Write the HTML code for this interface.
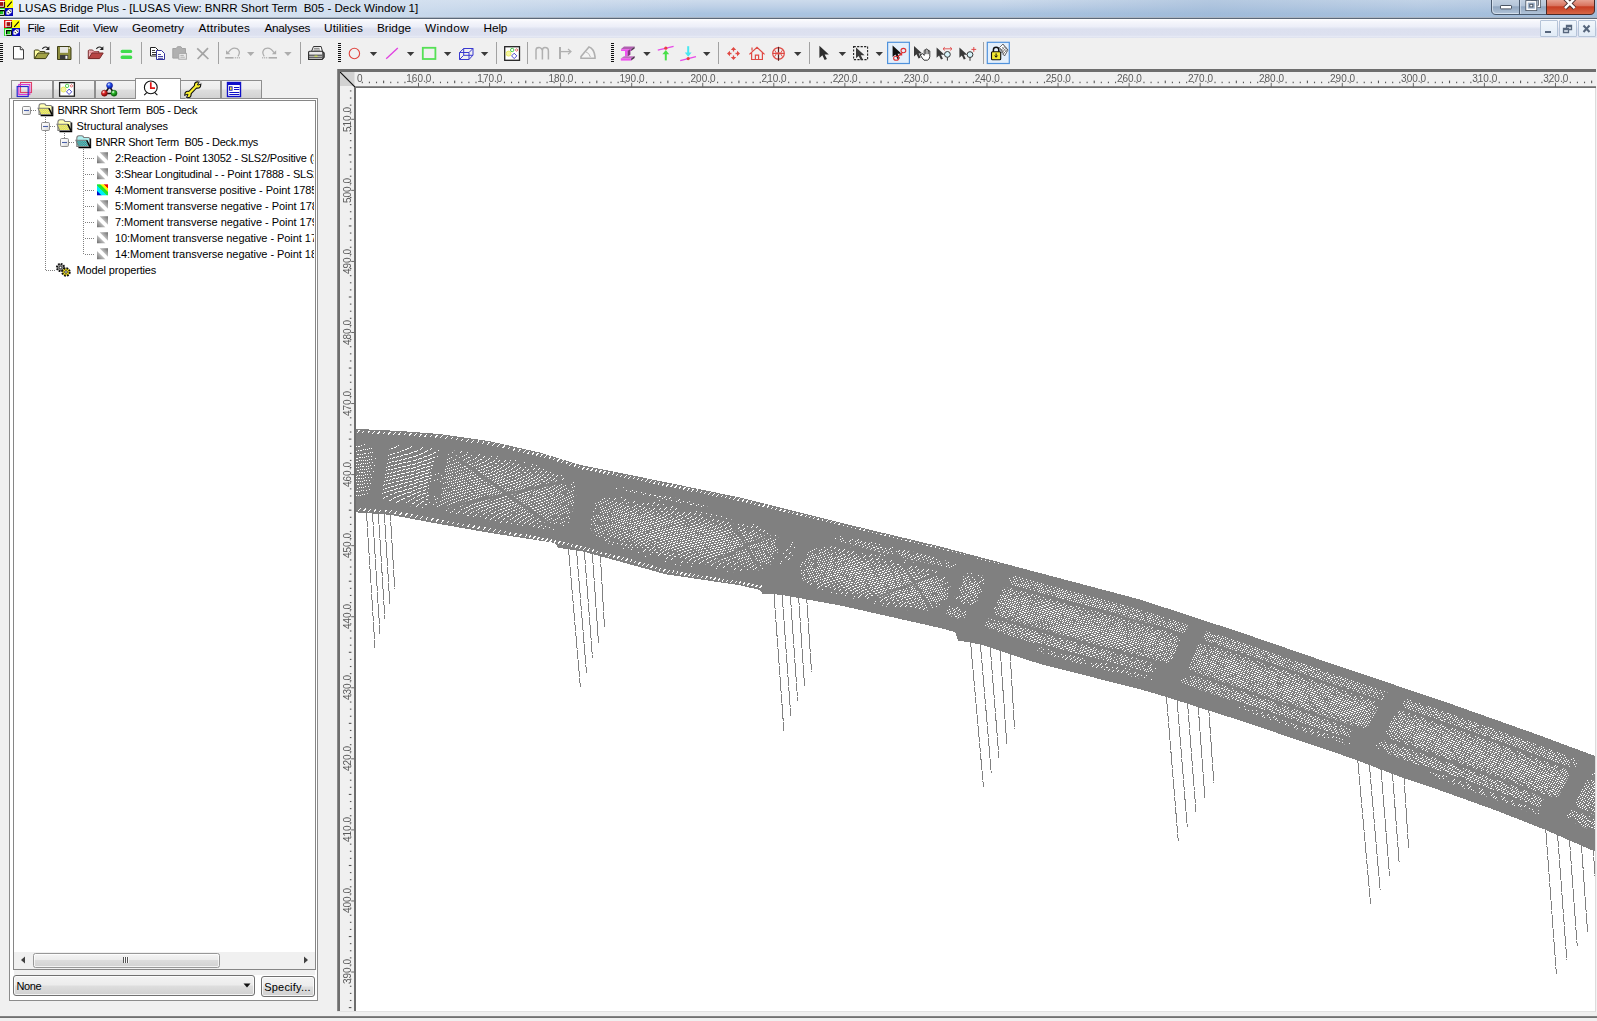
<!DOCTYPE html>
<html><head><meta charset="utf-8"><title>LUSAS Bridge Plus</title>
<style>
html,body{margin:0;padding:0}
body{width:1597px;height:1021px;position:relative;overflow:hidden;background:#f0f0f0;font-family:"Liberation Sans",sans-serif}
.b{position:absolute;display:block}
.t{position:absolute;white-space:pre;display:block}
</style></head><body>
<!-- chrome -->
<div class="b" style="left:0px;top:0px;width:1597px;height:18px;background:linear-gradient(to bottom,#cddbec 0%,#bfd1e7 35%,#aac4e0 75%,#a9c2dd 100%)"></div>
<div class="b" style="left:0px;top:0px;width:700px;height:18px;background:linear-gradient(to right,rgba(236,241,248,.95) 0%,rgba(228,236,246,.9) 25%,rgba(215,227,241,.75) 55%,rgba(200,216,235,0) 100%)"></div>
<div class="b" style="left:1000px;top:0px;width:597px;height:18px;background:linear-gradient(to right,rgba(150,178,210,0) 0%,rgba(150,178,210,.45) 35%,rgba(160,186,215,.25) 70%,rgba(150,178,210,.4) 100%)"></div>
<div class="b" style="left:0px;top:17px;width:1597px;height:1px;background:#aab6c4"></div>
<div class="b" style="left:0px;top:18px;width:1597px;height:1px;background:#5b6878"></div>
<svg class="b" style="left:-3px;top:0px;" width="16" height="16" viewBox="0 0 16 16">
<rect x="0" y="0" width="8" height="8" fill="#e21212"/>
<rect x="8" y="0" width="8" height="8" fill="#ffff10"/>
<rect x="0" y="8" width="8" height="8" fill="#30e030"/>
<rect x="8" y="8" width="8" height="8" fill="#0808b8"/>
<rect x="2" y="1.5" width="5" height="5" fill="#a01010" stroke="#fff" stroke-width="1.2"/>
<path d="M7.6 2v5.2H2.5" stroke="#200" stroke-width="1" fill="none"/>
<path d="M10.2 6.8L14.8 1.6" stroke="#000" stroke-width="1.1"/>
<rect x="1.8" y="9.8" width="5" height="5" fill="#22cc22" stroke="#fff" stroke-width="1.2"/>
<path d="M2.6 14.2V10.6H7" stroke="#000" stroke-width="1.1" fill="none"/>
<path d="M7.4 10.2v5.2H2.4" stroke="#000" stroke-width="1" fill="none"/>
<path d="M9.4 11.6L12.2 9.2L14.8 9.6L14.6 12.4L11.8 14.8L9.4 14.4Z" fill="#fff"/>
<path d="M10.6 11.8l1.4 1.6M12.6 10.2l1.2 1.6" stroke="#000" stroke-width="0.9"/>
</svg>
<span class="t" style="left:18.60px;top:-0.52px;font-size:11.6px;line-height:17px;letter-spacing:-0.012px;color:#000;">LUSAS Bridge Plus - [LUSAS View: BNRR Short Term&nbsp; B05 - Deck Window 1]</span>
<svg class="b" style="left:1490px;top:0px;" width="106" height="16" viewBox="0 0 106 16">
<defs>
<linearGradient id="wb1" x1="0" y1="0" x2="0" y2="1"><stop offset="0" stop-color="#c5d3e3"/><stop offset=".45" stop-color="#b3c4d8"/><stop offset=".5" stop-color="#90a6c0"/><stop offset="1" stop-color="#b4c6da"/></linearGradient>
<linearGradient id="wb2" x1="0" y1="0" x2="0" y2="1"><stop offset="0" stop-color="#e9a99a"/><stop offset=".45" stop-color="#d8715c"/><stop offset=".5" stop-color="#c63c22"/><stop offset="1" stop-color="#d86a48"/></linearGradient>
</defs>
<path d="M1.5 -1V10Q1.5 14.5 6 14.5H56.5V-1Z" fill="url(#wb1)" stroke="#4a5a6e"/>
<path d="M56.5 -1V14.5H100Q104.5 14.5 104.5 10V-1Z" fill="url(#wb2)" stroke="#4a2a28"/>
<path d="M29.5 -1V14" stroke="#4a5a6e"/><path d="M30.5 -1V14" stroke="#d5e0ec" stroke-opacity=".7"/>
<path d="M2.5 0V10Q2.5 13.5 6 13.5H28.5" stroke="#e4ecf5" stroke-opacity=".7" fill="none"/>
<rect x="10.5" y="5.500" width="11" height="3.400" fill="#fff" stroke="#4b5563" rx=".6"/>
<path d="M41 -1h8.500v7.500h-2" fill="none" stroke="#4b5563" stroke-width="3"/>
<path d="M41 -1h8.500v7.500h-2" fill="none" stroke="#fff" stroke-width="1.400"/>
<rect x="37" y="1.800" width="8.600" height="7.600" fill="#9fb3cb" stroke="#4b5563" stroke-width="3.200"/>
<rect x="37" y="1.800" width="8.600" height="7.600" fill="#9fb3cb" stroke="#fff" stroke-width="1.500"/>
<rect x="39.800" y="4.300" width="3" height="2.600" fill="#fff" stroke="#4b5563" stroke-width="1"/>
<path d="M75 -1.500L79.800 3.400L84.600 -1.500M75 8.200L79.800 3.400L84.600 8.200" stroke="#4b3030" stroke-width="4.400" fill="none" stroke-linejoin="miter"/>
<path d="M75 -1.500L79.800 3.400L84.600 -1.500M75 8.200L79.800 3.400L84.600 8.200" stroke="#fff" stroke-width="2.500" fill="none"/>
</svg>
<div class="b" style="left:0px;top:19px;width:1597px;height:19px;background:linear-gradient(to bottom,#ffffff 0%,#f6f7fc 12%,#eceef8 40%,#e1e5f2 48%,#dce0ef 55%,#dde1f0 85%,#e9ecf6 95%,#d5dae8 100%)"></div>
<svg class="b" style="left:4px;top:20px;" width="16" height="16" viewBox="0 0 16 16">
<rect x="0" y="0" width="8" height="8" fill="#e21212"/>
<rect x="8" y="0" width="8" height="8" fill="#ffff10"/>
<rect x="0" y="8" width="8" height="8" fill="#30e030"/>
<rect x="8" y="8" width="8" height="8" fill="#0808b8"/>
<rect x="2" y="1.5" width="5" height="5" fill="#a01010" stroke="#fff" stroke-width="1.2"/>
<path d="M7.6 2v5.2H2.5" stroke="#200" stroke-width="1" fill="none"/>
<path d="M10.2 6.8L14.8 1.6" stroke="#000" stroke-width="1.1"/>
<rect x="1.8" y="9.8" width="5" height="5" fill="#22cc22" stroke="#fff" stroke-width="1.2"/>
<path d="M2.6 14.2V10.6H7" stroke="#000" stroke-width="1.1" fill="none"/>
<path d="M7.4 10.2v5.2H2.4" stroke="#000" stroke-width="1" fill="none"/>
<path d="M9.4 11.6L12.2 9.2L14.8 9.6L14.6 12.4L11.8 14.8L9.4 14.4Z" fill="#fff"/>
<path d="M10.6 11.8l1.4 1.6M12.6 10.2l1.2 1.6" stroke="#000" stroke-width="0.9"/>
</svg>
<span class="t" style="left:27.60px;top:19.31px;font-size:11.8px;line-height:18px;letter-spacing:-0.504px;color:#000;">File</span>
<span class="t" style="left:59.20px;top:19.31px;font-size:11.8px;line-height:18px;letter-spacing:-0.132px;color:#000;">Edit</span>
<span class="t" style="left:93.00px;top:19.31px;font-size:11.8px;line-height:18px;letter-spacing:-0.215px;color:#000;">View</span>
<span class="t" style="left:131.90px;top:19.31px;font-size:11.8px;line-height:18px;letter-spacing:0.038px;color:#000;">Geometry</span>
<span class="t" style="left:198.50px;top:19.31px;font-size:11.8px;line-height:18px;letter-spacing:0.166px;color:#000;">Attributes</span>
<span class="t" style="left:264.50px;top:19.31px;font-size:11.8px;line-height:18px;letter-spacing:-0.297px;color:#000;">Analyses</span>
<span class="t" style="left:324.00px;top:19.31px;font-size:11.8px;line-height:18px;letter-spacing:0.108px;color:#000;">Utilities</span>
<span class="t" style="left:377.00px;top:19.31px;font-size:11.8px;line-height:18px;letter-spacing:-0.018px;color:#000;">Bridge</span>
<span class="t" style="left:425.00px;top:19.31px;font-size:11.8px;line-height:18px;letter-spacing:0.339px;color:#000;">Window</span>
<span class="t" style="left:483.60px;top:19.31px;font-size:11.8px;line-height:18px;letter-spacing:-0.141px;color:#000;">Help</span>
<div class="b" style="left:1540px;top:20px;width:18px;height:17px;background:linear-gradient(#f2f7fc,#e1ebf6);border:1px solid #b5c4d8;box-sizing:border-box;border-radius:1px"></div>
<div class="b" style="left:1559px;top:20px;width:18px;height:17px;background:linear-gradient(#f2f7fc,#e1ebf6);border:1px solid #b5c4d8;box-sizing:border-box;border-radius:1px"></div>
<div class="b" style="left:1578px;top:20px;width:18px;height:17px;background:linear-gradient(#f2f7fc,#e1ebf6);border:1px solid #b5c4d8;box-sizing:border-box;border-radius:1px"></div>
<svg class="b" style="left:1540px;top:20px;" width="56" height="17" viewBox="0 0 56 17">
<rect x="5" y="11" width="6" height="2" fill="#56667c"/>
<path d="M26.5 5.5h5v4h-5zM26.5 6.5h5" stroke="#56667c" stroke-width="1.3" fill="#e8f0f8"/>
<path d="M23.5 8.5h5v4h-5zM23.5 9.5h5" stroke="#56667c" stroke-width="1.3" fill="#e8f0f8"/>
<path d="M43.5 5.5l6 6.5M49.5 5.5l-6 6.5" stroke="#56667c" stroke-width="2"/>
</svg>
<!-- toolbar -->
<svg class="b" style="left:0;top:38px" width="1020" height="30" viewBox="0 38 1020 30"><g shape-rendering="crispEdges"><rect x="0" y="43" width="3" height="1" fill="#111"/><rect x="0" y="45" width="3" height="1" fill="#111"/><rect x="0" y="47" width="3" height="1" fill="#111"/><rect x="0" y="49" width="3" height="1" fill="#111"/><rect x="0" y="51" width="3" height="1" fill="#111"/><rect x="0" y="53" width="3" height="1" fill="#111"/><rect x="0" y="55" width="3" height="1" fill="#111"/><rect x="0" y="57" width="3" height="1" fill="#111"/><rect x="0" y="59" width="3" height="1" fill="#111"/><rect x="0" y="61" width="3" height="1" fill="#111"/></g><path d="M13.5 46.5h6.8l3.2 3.2v9.3h-10z" fill="#fff" stroke="#3c3c3c"/><path d="M20.3 46.5v3.2h3.2" fill="#e6e6e6" stroke="#3c3c3c"/><g transform="translate(33.8 0)"><path d="M0.5 50.5v8h10.5v-7h-5l-1.2-1.5h-3.3z" fill="#ffffa0" stroke="#3f3f18"/><path d="M0.8 58.6l3.4-5.6h11.2l-3.6 5.6z" fill="#a3a346" stroke="#3f3f18"/><path d="M8.5 48.8q3-3.2 5.8-0.5" fill="none" stroke="#222" stroke-width="1.1"/><path d="M15.6 46.2v3.8h-3.8z" fill="#222"/></g><path d="M57.5 46.5h12.2l1.3 1.3v11.7h-13.5z" fill="#8c8c3e" stroke="#3f3f18"/><rect x="60" y="47" width="8" height="5.800" fill="#e6e6e2"/><rect x="68.6" y="47.4" width="1.3" height="1.6" fill="#f4f4d8"/><rect x="60" y="55" width="8.2" height="4.4" fill="#3a3a3a"/><rect x="65.4" y="55.8" width="2" height="3" fill="#f4f4f4"/><rect x="79" y="42" width="1" height="21.500" fill="#a2a2a2" shape-rendering="crispEdges"/><g transform="translate(87.8 0)"><path d="M0.5 50.5v8h10.5v-7h-5l-1.2-1.5h-3.3z" fill="#f0c0c4" stroke="#7a2a2a"/><path d="M1.5 51.5h8.5v2h-8.5z" fill="#e58a92"/><path d="M0.8 58.6l3.4-5.6h11.2l-3.6 5.6z" fill="#b84444" stroke="#7a2a2a"/><path d="M8.5 48.8q3-3.2 5.8-0.5" fill="none" stroke="#222" stroke-width="1.1"/><path d="M15.6 46.2v3.8h-3.8z" fill="#222"/></g><rect x="110" y="42" width="1" height="21.500" fill="#a2a2a2" shape-rendering="crispEdges"/><rect x="120.6" y="49.7" width="11.6" height="3.4" rx="1.6" fill="#3fdd4c"/><rect x="120.6" y="55.5" width="11.6" height="3.6" rx="1.6" fill="#3fdd4c"/><rect x="141" y="42" width="1" height="21.500" fill="#a2a2a2" shape-rendering="crispEdges"/><path d="M150.5 47.5h5l2.5 2.5v6h-7.5z" fill="#fff" stroke="#222"/><path d="M152 50.5h3M152 52.5h4.5M152 54.5h4.5" stroke="#222" stroke-width=".9"/><path d="M156.5 50.5h5l3 3v6h-8z" fill="#fff" stroke="#33339a"/><path d="M158 54.5h3M158 56.5h5M158 58.3h5" stroke="#33339a" stroke-width=".9"/><path d="M172.8 48.5h3.5l1.2-1.8h3.4l1.2 1.8h3.4v9.6h-12.7z" fill="#b0b0b0" stroke="#a2a2a2"/><rect x="178.8" y="53.4" width="7.6" height="5.8" fill="#ececec" stroke="#a8a8a8"/><path d="M180.4 55.4h3.4M180.4 57.2h4.4" stroke="#a8a8a8" stroke-width=".9"/><path d="M197.2 48.4Q202 53 208.4 59M208 48.2Q203 53.5 197.6 59" stroke="#a4a4a4" stroke-width="1.7" fill="none"/><rect x="218" y="42" width="1" height="21.500" fill="#a2a2a2" shape-rendering="crispEdges"/><path d="M228.2 52.6Q232 46.5 237 48.6Q241.2 51.5 238 56.4" fill="none" stroke="#adadad" stroke-width="1.2"/><path d="M226 50.2v4h4.4z" fill="#adadad"/><path d="M225.2 57.8h8.4" stroke="#adadad" stroke-width="1.6"/><path d="M234.8 57.8h5.2" stroke="#adadad" stroke-width="1.6" stroke-dasharray="1 1"/><path d="M247 52h7.4l-3.7 4z" fill="#adadad"/><path d="M274 52.6Q270.2 46.5 265.2 48.6Q261 51.5 264.2 56.4" fill="none" stroke="#adadad" stroke-width="1.2"/><path d="M276.2 50.2v4h-4.4z" fill="#adadad"/><path d="M268.6 57.8h8.4" stroke="#adadad" stroke-width="1.6"/><path d="M262.2 57.8h5.2" stroke="#adadad" stroke-width="1.6" stroke-dasharray="1 1"/><path d="M284.2 52h7.4l-3.7 4z" fill="#adadad"/><rect x="300" y="42" width="1" height="21.500" fill="#a2a2a2" shape-rendering="crispEdges"/><path d="M311.5 51.5l2-5h7.6l1.4 5z" fill="#fff" stroke="#333"/><path d="M314 48.3h5.6M313.6 50h6.4" stroke="#555" stroke-width=".8"/><path d="M308.6 52.2q0-1 1-1h12.6l1.8 1.6v4.4l-1.8 2.2h-13.6z" fill="#e8e8e8" stroke="#2c2c2c" stroke-width="1.1"/><path d="M308.8 55.2h13.2M308.8 57.2h13.2" stroke="#2c2c2c" stroke-width="1"/><path d="M322 51.4l2 1.8v4l-2 2.2" fill="#666" stroke="#2c2c2c"/><rect x="314.5" y="55.6" width="3" height="1.2" fill="#cfe04a"/><g shape-rendering="crispEdges"><rect x="338" y="43" width="3" height="1" fill="#111"/><rect x="338" y="45" width="3" height="1" fill="#111"/><rect x="338" y="47" width="3" height="1" fill="#111"/><rect x="338" y="49" width="3" height="1" fill="#111"/><rect x="338" y="51" width="3" height="1" fill="#111"/><rect x="338" y="53" width="3" height="1" fill="#111"/><rect x="338" y="55" width="3" height="1" fill="#111"/><rect x="338" y="57" width="3" height="1" fill="#111"/><rect x="338" y="59" width="3" height="1" fill="#111"/><rect x="338" y="61" width="3" height="1" fill="#111"/></g><circle cx="354.4" cy="53.5" r="5.2" fill="none" stroke="#e0453f" stroke-width="1.1"/><path d="M369.8 52h7.4l-3.7 4z" fill="#3a3a3a"/><path d="M386.2 58.8L397.8 48" stroke="#e040e0" stroke-width="1.3"/><path d="M406.9 52h7.4l-3.7 4z" fill="#3a3a3a"/><rect x="422.8" y="47.8" width="12.6" height="11.2" fill="none" stroke="#55e055" stroke-width="1.8"/><path d="M443.9 52h7.4l-3.7 4z" fill="#3a3a3a"/><path d="M459.5 52.5h9.5v7h-9.5zM459.5 52.5l4.2-4h9.3l-4 4M473 48.5v6.6l-4 4.4M463.7 48.5v6.8l-4.2 4.2M463.7 55.3h9.3" fill="none" stroke="#3a3ad0" stroke-width="1"/><path d="M480.9 52h7.4l-3.7 4z" fill="#3a3a3a"/><rect x="496" y="42" width="1" height="21.500" fill="#a2a2a2" shape-rendering="crispEdges"/><rect x="504.7" y="46.7" width="14.8" height="13.6" fill="#fff" stroke="#222" stroke-width="1.3"/><circle cx="508.6" cy="53.6" r="2.5" fill="#f6f6a0" stroke="#e6e650" stroke-width=".8"/><circle cx="512.2" cy="50" r="1.7" fill="#fff" stroke="#3cc83c" stroke-width=".9"/><path d="M516.6 48.6l1.3 1.4l-1.3 1.4l-1.3-1.4z" fill="#fff" stroke="#e04848" stroke-width=".8"/><path d="M514.2 53.2l2.6 2.7l-2.6 2.7l-2.6-2.7z" fill="#fff" stroke="#3838c8" stroke-width=".9"/><rect x="527" y="42" width="1" height="21.500" fill="#a2a2a2" shape-rendering="crispEdges"/><path d="M536 59.6V50.2Q536 47.6 538.6 47.6M542.4 59.6V50.4Q542.4 47.6 545 47.6Q548.4 47.6 548.4 51V59.6M537.4 48Q541 46.6 542.4 50.4" fill="none" stroke="#b0b0b0" stroke-width="1.5"/><path d="M560 47V59" stroke="#b0b0b0" stroke-width="2"/><path d="M561 51.6h9" stroke="#b0b0b0" stroke-width="1.3"/><path d="M568 49l3 2.6l-3 2.6" fill="none" stroke="#b0b0b0" stroke-width="1.2"/><path d="M581 56.6l8-9.6q5 1.5 6 9.6v1.6h-14z" fill="#f4f4f4" stroke="#b0b0b0" stroke-width="1.6"/><path d="M586 52Q589 52.5 590.4 57" fill="none" stroke="#b8b8b8"/><g shape-rendering="crispEdges"><rect x="611" y="43" width="3" height="1" fill="#111"/><rect x="611" y="45" width="3" height="1" fill="#111"/><rect x="611" y="47" width="3" height="1" fill="#111"/><rect x="611" y="49" width="3" height="1" fill="#111"/><rect x="611" y="51" width="3" height="1" fill="#111"/><rect x="611" y="53" width="3" height="1" fill="#111"/><rect x="611" y="55" width="3" height="1" fill="#111"/><rect x="611" y="57" width="3" height="1" fill="#111"/><rect x="611" y="59" width="3" height="1" fill="#111"/><rect x="611" y="61" width="3" height="1" fill="#111"/></g><path d="M624 46.6h10.6l-3.4 2.6h-10.4z" fill="#b060b0"/><path d="M621 49.2h10.2v1.8h-10.2z" fill="#f050f0"/><path d="M631.2 49.2l3.4-2.6v1.8l-3.4 2.6z" fill="#503050"/><path d="M625 51h2.6v5.6H625z" fill="#f050f0"/><path d="M627.6 51l2.8-2v5.8l-2.8 1.8z" fill="#803880"/><path d="M624 56.2h10.4l-3.2 2.4h-10.4z" fill="#c070c0"/><path d="M620.8 58.4h10.4v2.2h-10.4z" fill="#f050f0"/><path d="M631.2 58.4l3.4-2.4v2l-3.4 2.6z" fill="#503050"/><path d="M643.2 52h7.4l-3.7 4z" fill="#3a3a3a"/><path d="M657.8 50.2L673.6 46.4" stroke="#e848e8" stroke-width="1.3"/><circle cx="665.8" cy="48.2" r="1.6" fill="#e84040"/><path d="M665.8 60.4V52" stroke="#48e048" stroke-width="2"/><path d="M662.4 54.2l3.4-4.2l3.4 4.2z" fill="#48e048"/><path d="M688.2 46.2V54" stroke="#48e8f0" stroke-width="2"/><path d="M684.8 52.4l3.4 4.4l3.4-4.4z" fill="#48e8f0"/><path d="M680.2 60.6L696 56.6" stroke="#e848e8" stroke-width="1.3"/><circle cx="688.2" cy="58.6" r="1.6" fill="#e84040"/><path d="M703 52h7.4l-3.7 4z" fill="#3a3a3a"/><rect x="718" y="42" width="1" height="21.500" fill="#a2a2a2" shape-rendering="crispEdges"/><g fill="#e04a44"><path d="M733.500 47l-2.700 3h5.400zM733.500 60l-2.700-3h5.400zM727 53.500l3-2.700v5.400zM740 53.500l-3-2.700v5.400z"/></g><path d="M733.500 49.500v2M733.500 55.500v2M729.500 53.500h2M735.500 53.500h2" stroke="#e04a44" stroke-width="1.300"/><path d="M749.4 54.4l7.6-7l7.6 7M751.6 52.6v6.9h10.8v-6.9M755.4 59.4v-4.2h3.2v4.2M752 47.4v3.2" fill="none" stroke="#e04a44" stroke-width="1.2"/><g fill="none" stroke="#e04a44" stroke-width="1.200"><circle cx="778.500" cy="53.400" r="5.800"/><path d="M772.700 53.400h11.600"/><path d="M774.600 50.200l2 3.200l-2 3.200M782.400 50.200l-2 3.200l2 3.200" stroke-width="1"/></g><path d="M778.500 46.800v14" stroke="#5a2020" stroke-width="1.200"/><circle cx="778.500" cy="53.400" r="1.300" fill="#e04a44"/><path d="M794 52h7.4l-3.7 4z" fill="#3a3a3a"/><rect x="809" y="42" width="1" height="21.500" fill="#a2a2a2" shape-rendering="crispEdges"/><path transform="translate(819.4 45.8) scale(1.05)" d="M0 0V11.5L2.8 9L5 13.6L7.2 12.6L5 8.2H9Z" fill="#2e2e2e"/><path d="M838.7 52h7.4l-3.7 4z" fill="#3a3a3a"/><rect x="853.6" y="46.6" width="14" height="13" fill="none" stroke="#222" stroke-width="1.1" stroke-dasharray="2.2 1.3"/><path transform="translate(856 47.4) scale(0.95)" d="M0 0V11.5L2.8 9L5 13.6L7.2 12.6L5 8.2H9Z" fill="#3a3a3a"/><path d="M875.6 52h7.4l-3.7 4z" fill="#3a3a3a"/><rect x="887.6" y="42.3" width="21.8" height="21.2" fill="#e3effb" stroke="#4f92dc" stroke-width="1.2"/><path transform="translate(892.6 45.6) scale(1)" d="M0 0V11.5L2.8 9L5 13.6L7.2 12.6L5 8.2H9Z" fill="#111"/><g fill="none" stroke="#e03030" stroke-width="1.1"><ellipse cx="896.2" cy="58.2" rx="2.6" ry="2"/><ellipse cx="903.4" cy="50.6" rx="2.4" ry="2.2"/><path d="M898 56.4l4-3.6"/></g><path d="M899 55.6h3.2v-3.2z" fill="#e03030"/><path transform="translate(914 46) scale(0.92)" d="M0 0V11.5L2.8 9L5 13.6L7.2 12.6L5 8.2H9Z" fill="#3a3a3a"/><path d="M921.400 54.600l1.200-1l1.600 1.800V50.400q.7-1 1.400 0V49.400q.7-1 1.400 0v.6q.7-.9 1.400 0v.9q.7-.8 1.400.1v5.600q-.2 2.800-2.400 3.600h-3.400q-1.600-1.600-4-5.600z" fill="#fff" stroke="#222" stroke-width=".9"/><path d="M925.600 50.600v3.600M927 50.200v4M928.400 50.800v3.400" stroke="#222" stroke-width=".7"/><path transform="translate(936.6 47.6) scale(0.88)" d="M0 0V11.5L2.8 9L5 13.6L7.2 12.6L5 8.2H9Z" fill="#3a3a3a"/><circle cx="947.4" cy="54.4" r="2.9" fill="#d8f4fa" stroke="#333" stroke-width="1"/><path d="M947.4 57.4v3.2" stroke="#333"/><path d="M943.2 48.8h8.6M944.8 47.2l-1.8 1.6l1.8 1.6M950.2 47.2l1.8 1.6l-1.8 1.6" fill="none" stroke="#e04848" stroke-width=".9"/><path transform="translate(959.4 47.6) scale(0.88)" d="M0 0V11.5L2.8 9L5 13.6L7.2 12.6L5 8.2H9Z" fill="#3a3a3a"/><circle cx="970" cy="54.6" r="2.9" fill="#d8f4fa" stroke="#333" stroke-width="1"/><path d="M970 57.6v3.2" stroke="#333"/><path d="M971.4 49.4h4.8M973.8 47v4.8" stroke="#e04848" stroke-width="1"/><rect x="983" y="42" width="1" height="21.500" fill="#a2a2a2" shape-rendering="crispEdges"/><rect x="987.300" y="42.300" width="22" height="21.200" fill="#e3effb" stroke="#4f92dc" stroke-width="1.200"/><path d="M999.500 47.500l3.500-3.500l5 6l-3.500 6z" fill="#fff" stroke="#333" stroke-width=".7"/><path d="M1000.500 48.500l4.500 5M1002 47l4.500 5M1003.500 45.500l4 4.500M1001 53l5.500-5M1002.500 54.500l5-5M1000 51.500l4.500-4.500" stroke="#444" stroke-width=".55"/><path d="M993.400 52V49.800q0-2.600 2.700-2.600q2.700 0 2.700 2.600V52" fill="none" stroke="#111" stroke-width="1.500"/><rect x="991.500" y="51.800" width="9.200" height="8" rx="1" fill="#f4ea30" stroke="#111" stroke-width="1.100"/><path d="M996.100 53.400v3.600M994.700 55.600l1.400 1.700l1.400-1.700" stroke="#111" stroke-width="1" fill="none"/></svg>
<!-- leftpanel -->
<div class="b" style="left:9px;top:98px;width:309px;height:903px;background:#fff;border:1px solid #8c8c8c;box-sizing:border-box"></div>
<div class="b" style="left:11px;top:80px;width:42px;height:18px;box-sizing:border-box;border:1px solid #8e8e8e;border-bottom:none;background:linear-gradient(#f3f3f3 0%,#ececec 48%,#dedede 52%,#d2d2d2 100%);border-radius:1px 1px 0 0"></div>
<div class="b" style="left:53px;top:80px;width:42px;height:18px;box-sizing:border-box;border:1px solid #8e8e8e;border-bottom:none;background:linear-gradient(#f3f3f3 0%,#ececec 48%,#dedede 52%,#d2d2d2 100%);border-radius:1px 1px 0 0"></div>
<div class="b" style="left:95px;top:80px;width:41px;height:18px;box-sizing:border-box;border:1px solid #8e8e8e;border-bottom:none;background:linear-gradient(#f3f3f3 0%,#ececec 48%,#dedede 52%,#d2d2d2 100%);border-radius:1px 1px 0 0"></div>
<div class="b" style="left:180px;top:80px;width:41px;height:18px;box-sizing:border-box;border:1px solid #8e8e8e;border-bottom:none;background:linear-gradient(#f3f3f3 0%,#ececec 48%,#dedede 52%,#d2d2d2 100%);border-radius:1px 1px 0 0"></div>
<div class="b" style="left:221px;top:80px;width:40.5px;height:18px;box-sizing:border-box;border:1px solid #8e8e8e;border-bottom:none;background:linear-gradient(#f3f3f3 0%,#ececec 48%,#dedede 52%,#d2d2d2 100%);border-radius:1px 1px 0 0"></div>
<div class="b" style="left:135px;top:78px;width:46px;height:21px;box-sizing:border-box;border:1px solid #8e8e8e;border-bottom:none;background:#fff;border-radius:1px 1px 0 0"></div>
<svg class="b" style="left:0;top:76px" width="270" height="24" viewBox="0 76 270 24"><defs><radialGradient id="bb" cx=".35" cy=".3" r=".7"><stop offset="0" stop-color="#e8f0ff"/><stop offset=".4" stop-color="#2a5cf0"/><stop offset="1" stop-color="#0818a0"/></radialGradient><radialGradient id="br" cx=".35" cy=".3" r=".7"><stop offset="0" stop-color="#fff0f0"/><stop offset=".4" stop-color="#e02828"/><stop offset="1" stop-color="#800808"/></radialGradient><radialGradient id="bg" cx=".35" cy=".3" r=".7"><stop offset="0" stop-color="#f0fff0"/><stop offset=".4" stop-color="#28b828"/><stop offset="1" stop-color="#086008"/></radialGradient></defs><rect x="20.500" y="82.500" width="11" height="10" fill="none" stroke="#e0406a" stroke-width="1.100"/><rect x="18.800" y="84.500" width="11" height="10" fill="none" stroke="#d838d8" stroke-width="1.100"/><rect x="17.200" y="86.500" width="11" height="10" fill="none" stroke="#2828d0" stroke-width="1.200"/><rect x="59.6" y="82.6" width="14.800" height="13.600" fill="#fff" stroke="#222" stroke-width="1.300"/><circle cx="63.500" cy="89.500" r="2.500" fill="#f6f6a0" stroke="#e6e650" stroke-width=".8"/><circle cx="67.100" cy="85.900" r="1.700" fill="#fff" stroke="#3cc83c" stroke-width=".9"/><path d="M71.500 84.500l1.300 1.400l-1.300 1.400l-1.300-1.400z" fill="#fff" stroke="#e04848" stroke-width=".8"/><path d="M69.100 89.100l2.600 2.700l-2.600 2.700l-2.600-2.700z" fill="#fff" stroke="#3838c8" stroke-width=".9"/><path d="M109.600 86.500L104.800 93.500M109.600 86.500L114 93.500M104.800 93.500H114" stroke="#111" stroke-width="1.500"/><circle cx="109.600" cy="85.500" r="3" fill="url(#bb)" stroke="#1018a0" stroke-width=".6"/><circle cx="104.400" cy="93.200" r="3" fill="url(#br)" stroke="#801010" stroke-width=".6"/><circle cx="114" cy="93.200" r="3" fill="url(#bg)" stroke="#106010" stroke-width=".6"/><circle cx="150.800" cy="87.400" r="6.400" fill="#fff" stroke="#111" stroke-width="1.100"/><path d="M150.800 82.200V88.200H155" fill="none" stroke="#e01818" stroke-width="1.700"/><path d="M146.800 92.600l-2.600 2.600M154.800 92.600l2.600 2.600" stroke="#111" stroke-width="1.100"/><path d="M188.600 94L197 85.200" stroke="#111" stroke-width="4.200"/><circle cx="197.600" cy="85" r="3.100" fill="#f8f030" stroke="#111" stroke-width="1.100"/><path d="M197.200 85.200L199.200 80.200L203 83.600Z" fill="#e4e4e4"/><path d="M197.400 85L199.300 81.600M197.600 85.200L201.400 84" stroke="#111" stroke-width="1"/><circle cx="188" cy="94.400" r="3.100" fill="#f8f030" stroke="#111" stroke-width="1.100"/><path d="M188.400 94.200L186.400 99.200L182.600 95.800Z" fill="#d8d8d8"/><path d="M188.200 94.400L186.300 97.800M188 94.200L184.200 95.400" stroke="#111" stroke-width="1"/><path d="M188.600 94L197 85.200" stroke="#f8f030" stroke-width="2.200"/><rect x="227.500" y="82.500" width="13" height="14" fill="#fff" stroke="#1010c8" stroke-width="1.400"/><rect x="227" y="82" width="14" height="3" fill="#1010c8"/><rect x="229.500" y="86.800" width="2.600" height="3.400" fill="#f4e840" stroke="#1010c8" stroke-width=".9"/><path d="M234 87.500h5.300M234 89.500h5.300M229.300 92.500h10M229.300 94.500h10" stroke="#1010c8" stroke-width="1.100"/></svg>
<div class="b" style="left:13px;top:100px;width:303px;height:870px;background:#fff;border:1px solid #868686;box-sizing:border-box"></div>
<div class="b" style="left:14px;top:970px;width:301px;height:5px;background:#f0f0f0"></div>
<svg class="b" style="left:14px;top:101px" width="301" height="180" viewBox="14 101 301 180"><defs><linearGradient id="eb" x1="0" y1="0" x2="1" y2="1"><stop offset="0" stop-color="#fff"/><stop offset=".5" stop-color="#f4f4f4"/><stop offset="1" stop-color="#cfcfcf"/></linearGradient><pattern id="dy" width="2" height="2" patternUnits="userSpaceOnUse"><rect width="2" height="2" fill="#ffff50"/><rect width="1" height="1" fill="#c8c888"/><rect x="1" y="1" width="1" height="1" fill="#c8c888"/></pattern><pattern id="dt" width="2" height="2" patternUnits="userSpaceOnUse"><rect width="2" height="2" fill="#40d8d8"/><rect width="1" height="1" fill="#607878"/><rect x="1" y="1" width="1" height="1" fill="#607878"/></pattern><linearGradient id="lg1" x1="0" y1="1" x2="1" y2="0" gradientUnits="objectBoundingBox"><stop offset="0.3" stop-color="#e0e0e0"/><stop offset="1" stop-color="#6c6c6c"/></linearGradient><linearGradient id="lg2" x1="1" y1="0" x2="0" y2="1"><stop offset="0.3" stop-color="#e0e0e0"/><stop offset="1" stop-color="#6c6c6c"/></linearGradient><linearGradient id="rb" x1="1" y1="0" x2="0" y2="1"><stop offset="0" stop-color="#e80000"/><stop offset=".17" stop-color="#f01000"/><stop offset=".2" stop-color="#fff000"/><stop offset=".33" stop-color="#f8f800"/><stop offset=".37" stop-color="#20e020"/><stop offset=".54" stop-color="#20e840"/><stop offset=".58" stop-color="#00f0f0"/><stop offset=".78" stop-color="#00e8ff"/><stop offset=".82" stop-color="#0010d0"/><stop offset="1" stop-color="#0000b0"/></linearGradient></defs><path d="M45.500 117V270" stroke="#808080" stroke-width="1" stroke-dasharray="1 1" fill="none"/><path d="M46 270.500H56" stroke="#808080" stroke-width="1" stroke-dasharray="1 1" fill="none"/><path d="M64.500 133V138" stroke="#808080" stroke-width="1" stroke-dasharray="1 1" fill="none"/><path d="M83.500 149V254.500" stroke="#808080" stroke-width="1" stroke-dasharray="1 1" fill="none"/><path d="M31 110.500H37" stroke="#808080" stroke-width="1" stroke-dasharray="1 1" fill="none"/><path d="M50 126.500H56" stroke="#808080" stroke-width="1" stroke-dasharray="1 1" fill="none"/><path d="M69 142.500H75" stroke="#808080" stroke-width="1" stroke-dasharray="1 1" fill="none"/><path d="M85 158.5H94" stroke="#808080" stroke-width="1" stroke-dasharray="1 1" fill="none"/><path d="M85 174.5H94" stroke="#808080" stroke-width="1" stroke-dasharray="1 1" fill="none"/><path d="M85 190.5H94" stroke="#808080" stroke-width="1" stroke-dasharray="1 1" fill="none"/><path d="M85 206.5H94" stroke="#808080" stroke-width="1" stroke-dasharray="1 1" fill="none"/><path d="M85 222.5H94" stroke="#808080" stroke-width="1" stroke-dasharray="1 1" fill="none"/><path d="M85 238.5H94" stroke="#808080" stroke-width="1" stroke-dasharray="1 1" fill="none"/><path d="M85 254.5H94" stroke="#808080" stroke-width="1" stroke-dasharray="1 1" fill="none"/><rect x="22.5" y="106.5" width="8" height="8" rx="1.2" fill="url(#eb)" stroke="#8f8f8f"/><path d="M24 110.5h5" stroke="#4a60a8" stroke-width="1.1"/><rect x="41.5" y="122.5" width="8" height="8" rx="1.2" fill="url(#eb)" stroke="#8f8f8f"/><path d="M43 126.5h5" stroke="#4a60a8" stroke-width="1.1"/><rect x="60.5" y="138.5" width="8" height="8" rx="1.2" fill="url(#eb)" stroke="#8f8f8f"/><path d="M62 142.5h5" stroke="#4a60a8" stroke-width="1.1"/><g transform="translate(37.4 103) scale(1.07 1)"><path d="M14.2 3.5V12.6H3" stroke="#000" stroke-width="1.4" fill="none"/><path d="M1.5 3.2Q1.5 1 3.500 0.8H6.200Q7.600 1 8 2.400H12.500Q13.600 2.600 13.500 4V11.500H1.500Z" fill="#ffffb0" stroke="#7c7c7c" stroke-width="1"/><path d="M0.6 5.200H10.500L13.400 11.600H3.200Z" fill="url(#dy)" stroke="#7c7c7c" stroke-width="1"/><path d="M10.800 5.200L13.800 11.800" stroke="#000" stroke-width="1.300"/></g><g transform="translate(56.3 119) scale(1.07 1)"><path d="M14.2 3.5V12.6H3" stroke="#000" stroke-width="1.4" fill="none"/><path d="M1.5 3.2Q1.5 1 3.500 0.8H6.200Q7.600 1 8 2.400H12.500Q13.600 2.600 13.500 4V11.500H1.500Z" fill="#ffffb0" stroke="#7c7c7c" stroke-width="1"/><path d="M0.6 5.200H10.500L13.400 11.600H3.200Z" fill="url(#dy)" stroke="#7c7c7c" stroke-width="1"/><path d="M10.800 5.200L13.800 11.800" stroke="#000" stroke-width="1.300"/></g><g transform="translate(75.2 135) scale(1.07 1)"><path d="M14.2 3.5V12.6H3" stroke="#000" stroke-width="1.4" fill="none"/><path d="M1.5 3.2Q1.5 1 3.500 0.8H6.200Q7.600 1 8 2.400H12.500Q13.600 2.600 13.500 4V11.500H1.500Z" fill="#b0f0f0" stroke="#7c7c7c" stroke-width="1"/><path d="M0.6 5.200H10.500L13.400 11.600H3.200Z" fill="url(#dt)" stroke="#7c7c7c" stroke-width="1"/><path d="M10.800 5.200L13.800 11.800" stroke="#000" stroke-width="1.300"/></g><g transform="translate(97 152.3)"><rect width="11" height="11" fill="#fff"/><path d="M2.600 0H11V8.400Z" fill="url(#lg1)"/><path d="M0 2.600V11H8.400Z" fill="url(#lg2)"/></g><g transform="translate(97 168.3)"><rect width="11" height="11" fill="#fff"/><path d="M2.600 0H11V8.400Z" fill="url(#lg1)"/><path d="M0 2.600V11H8.400Z" fill="url(#lg2)"/></g><g transform="translate(97 184.3)"><rect width="11" height="11" fill="url(#rb)"/></g><g transform="translate(97 200.3)"><rect width="11" height="11" fill="#fff"/><path d="M2.600 0H11V8.400Z" fill="url(#lg1)"/><path d="M0 2.600V11H8.400Z" fill="url(#lg2)"/></g><g transform="translate(97 216.3)"><rect width="11" height="11" fill="#fff"/><path d="M2.600 0H11V8.400Z" fill="url(#lg1)"/><path d="M0 2.600V11H8.400Z" fill="url(#lg2)"/></g><g transform="translate(97 232.3)"><rect width="11" height="11" fill="#fff"/><path d="M2.600 0H11V8.400Z" fill="url(#lg1)"/><path d="M0 2.600V11H8.400Z" fill="url(#lg2)"/></g><g transform="translate(97 248.3)"><rect width="11" height="11" fill="#fff"/><path d="M2.600 0H11V8.400Z" fill="url(#lg1)"/><path d="M0 2.600V11H8.400Z" fill="url(#lg2)"/></g><g transform="translate(55.5 262.500)"><circle cx="5" cy="5" r="3.600" fill="#9a9a9a" stroke="#111" stroke-width="2" stroke-dasharray="1.700 1.100"/><circle cx="5" cy="5" r="1.300" fill="#fff" stroke="#111" stroke-width=".8"/><circle cx="10.500" cy="9.500" r="3.700" fill="#f0e020" stroke="#111" stroke-width="2" stroke-dasharray="1.800 1.100"/><circle cx="10.500" cy="9.500" r="1.300" fill="#fff" stroke="#111" stroke-width=".8"/></g></svg>
<div class="b" style="left:14px;top:101px;width:299.6px;height:851px;overflow:hidden"><span class="t" style="left:43.40px;top:1.19px;font-size:11px;line-height:16px;letter-spacing:-0.316px;color:#000">BNRR Short Term&nbsp; B05 - Deck</span><span class="t" style="left:62.60px;top:17.19px;font-size:11px;line-height:16px;letter-spacing:-0.113px;color:#000">Structural analyses</span><span class="t" style="left:81.40px;top:33.19px;font-size:11px;line-height:16px;letter-spacing:-0.286px;color:#000">BNRR Short Term&nbsp; B05 - Deck.mys</span><span class="t" style="left:101.00px;top:49.19px;font-size:11px;line-height:16px;letter-spacing:-0.189px;color:#000">2:Reaction - Point 13052 - SLS2/Positive (SLS</span><span class="t" style="left:101.00px;top:65.19px;font-size:11px;line-height:16px;letter-spacing:-0.205px;color:#000">3:Shear Longitudinal - - Point 17888 - SLS2/</span><span class="t" style="left:101.00px;top:81.19px;font-size:11px;line-height:16px;letter-spacing:-0.091px;color:#000">4:Moment transverse positive - Point 17852 -</span><span class="t" style="left:101.00px;top:97.19px;font-size:11px;line-height:16px;letter-spacing:-0.034px;color:#000">5:Moment transverse negative - Point 17888 -</span><span class="t" style="left:101.00px;top:113.19px;font-size:11px;line-height:16px;letter-spacing:-0.034px;color:#000">7:Moment transverse negative - Point 17952 -</span><span class="t" style="left:101.00px;top:129.19px;font-size:11px;line-height:16px;letter-spacing:-0.057px;color:#000">10:Moment transverse negative - Point 17752</span><span class="t" style="left:101.00px;top:145.19px;font-size:11px;line-height:16px;letter-spacing:-0.057px;color:#000">14:Moment transverse negative - Point 18052</span><span class="t" style="left:62.60px;top:161.19px;font-size:11px;line-height:16px;letter-spacing:-0.146px;color:#000">Model properties</span></div>
<div class="b" style="left:14px;top:952px;width:301px;height:17px;background:#f0f0f0"></div>
<div class="b" style="left:33px;top:952.5px;width:187px;height:15px;box-sizing:border-box;border:1px solid #989898;border-radius:2.500px;background:linear-gradient(#f5f5f5 0%,#ebebeb 45%,#dcdcdc 50%,#d2d2d2 100%);box-shadow:inset 0 0 0 1px rgba(255,255,255,.7)"></div>
<svg class="b" style="left:14px;top:952px;" width="301" height="17" viewBox="0 0 301 17"><path d="M11 4.500v7l-4-3.500z" fill="#404040"/><path d="M290 4.500v7l4-3.500z" fill="#404040"/><path d="M109.500 5v6M111.500 5v6M113.500 5v6" stroke="#555" stroke-width="1"/><path d="M110.500 5v6M112.500 5v6M114.500 5v6" stroke="#fff" stroke-width="1" stroke-opacity=".8"/></svg>
<div class="b" style="left:13px;top:975px;width:242px;height:21px;box-sizing:border-box;border:1px solid #707070;border-radius:3px;background:linear-gradient(#f3f3f3 0%,#ececec 48%,#dedede 52%,#d0d0d0 100%);box-shadow:inset 0 0 0 1px rgba(255,255,255,.75)"></div>
<span class="t" style="left:16.60px;top:978.19px;font-size:11px;line-height:16px;letter-spacing:-0.449px;color:#000;">None</span>
<svg class="b" style="left:242px;top:982px;" width="10" height="8" viewBox="0 0 10 8"><path d="M1.500 1.500h7l-3.500 4z" fill="#111"/></svg>
<div class="b" style="left:261px;top:976px;width:54px;height:21px;box-sizing:border-box;border:1px solid #707070;border-radius:3px;background:linear-gradient(#f3f3f3 0%,#ececec 48%,#dedede 52%,#d0d0d0 100%);box-shadow:inset 0 0 0 1px rgba(255,255,255,.75)"></div>
<span class="t" style="left:264.20px;top:979.19px;font-size:11px;line-height:16px;letter-spacing:0.206px;color:#000;">Specify...</span>
<!-- view -->
<div class="b" style="left:338px;top:61px;width:3px;height:1px;background:#111"></div>
<div class="b" style="left:337px;top:69px;width:1259px;height:942px;background:#6e6e6e"></div>
<div class="b" style="left:337px;top:69px;width:1px;height:942px;background:#8a8a8a"></div>
<div class="b" style="left:340px;top:72px;width:1256px;height:939px;background:#f0f0f0"></div>
<div class="b" style="left:354px;top:86px;width:1242px;height:925px;background:#6e6e6e"></div>
<div class="b" style="left:354px;top:86px;width:1242px;height:1px;background:#8e8e8e"></div>
<div class="b" style="left:356px;top:88px;width:1239px;height:923px;background:#fff"></div>
<div class="b" style="left:337px;top:1011px;width:1260px;height:1px;background:#e2e2e2"></div>
<div class="b" style="left:1596px;top:69px;width:1px;height:943px;background:#f2f2f2"></div>
<div class="b" style="left:1595px;top:88px;width:1px;height:924px;background:#dcdcdc"></div>
<svg class="b" style="left:340px;top:72px;" width="15" height="15" viewBox="0 0 15 15"><rect width="14.500" height="14" fill="#d2d2d2"/><path d="M0 0L15 15" stroke="#111" stroke-width="1.200"/></svg>
<div class="b" style="left:0px;top:1016px;width:1597px;height:2px;background:linear-gradient(#8c8c8c,#686868)"></div>
<svg class="b" style="left:337px;top:69px" width="1260" height="943" viewBox="337 69 1260 943"><rect x="361.75" y="81.700" width="1.100" height="1.500" fill="#555"/><rect x="368.86" y="81.700" width="1.100" height="1.500" fill="#555"/><rect x="375.96" y="81.700" width="1.100" height="1.500" fill="#555"/><rect x="383.07" y="80.600" width="1.100" height="2.600" fill="#555"/><rect x="390.18" y="81.700" width="1.100" height="1.500" fill="#555"/><rect x="397.28" y="81.700" width="1.100" height="1.500" fill="#555"/><rect x="404.39" y="81.700" width="1.100" height="1.500" fill="#555"/><rect x="411.49" y="81.700" width="1.100" height="1.500" fill="#555"/><rect x="418.00" y="82.800" width="1" height="4.200" fill="#666"/><rect x="425.71" y="81.700" width="1.100" height="1.500" fill="#555"/><rect x="432.81" y="81.700" width="1.100" height="1.500" fill="#555"/><rect x="439.92" y="81.700" width="1.100" height="1.500" fill="#555"/><rect x="447.02" y="81.700" width="1.100" height="1.500" fill="#555"/><rect x="454.13" y="80.600" width="1.100" height="2.600" fill="#555"/><rect x="461.24" y="81.700" width="1.100" height="1.500" fill="#555"/><rect x="468.34" y="81.700" width="1.100" height="1.500" fill="#555"/><rect x="475.45" y="81.700" width="1.100" height="1.500" fill="#555"/><rect x="482.55" y="81.700" width="1.100" height="1.500" fill="#555"/><rect x="489.06" y="82.800" width="1" height="4.200" fill="#666"/><rect x="496.77" y="81.700" width="1.100" height="1.500" fill="#555"/><rect x="503.87" y="81.700" width="1.100" height="1.500" fill="#555"/><rect x="510.98" y="81.700" width="1.100" height="1.500" fill="#555"/><rect x="518.08" y="81.700" width="1.100" height="1.500" fill="#555"/><rect x="525.19" y="80.600" width="1.100" height="2.600" fill="#555"/><rect x="532.30" y="81.700" width="1.100" height="1.500" fill="#555"/><rect x="539.40" y="81.700" width="1.100" height="1.500" fill="#555"/><rect x="546.51" y="81.700" width="1.100" height="1.500" fill="#555"/><rect x="553.61" y="81.700" width="1.100" height="1.500" fill="#555"/><rect x="560.12" y="82.800" width="1" height="4.200" fill="#666"/><rect x="567.83" y="81.700" width="1.100" height="1.500" fill="#555"/><rect x="574.93" y="81.700" width="1.100" height="1.500" fill="#555"/><rect x="582.04" y="81.700" width="1.100" height="1.500" fill="#555"/><rect x="589.14" y="81.700" width="1.100" height="1.500" fill="#555"/><rect x="596.25" y="80.600" width="1.100" height="2.600" fill="#555"/><rect x="603.36" y="81.700" width="1.100" height="1.500" fill="#555"/><rect x="610.46" y="81.700" width="1.100" height="1.500" fill="#555"/><rect x="617.57" y="81.700" width="1.100" height="1.500" fill="#555"/><rect x="624.67" y="81.700" width="1.100" height="1.500" fill="#555"/><rect x="631.18" y="82.800" width="1" height="4.200" fill="#666"/><rect x="638.89" y="81.700" width="1.100" height="1.500" fill="#555"/><rect x="645.99" y="81.700" width="1.100" height="1.500" fill="#555"/><rect x="653.10" y="81.700" width="1.100" height="1.500" fill="#555"/><rect x="660.20" y="81.700" width="1.100" height="1.500" fill="#555"/><rect x="667.31" y="80.600" width="1.100" height="2.600" fill="#555"/><rect x="674.42" y="81.700" width="1.100" height="1.500" fill="#555"/><rect x="681.52" y="81.700" width="1.100" height="1.500" fill="#555"/><rect x="688.63" y="81.700" width="1.100" height="1.500" fill="#555"/><rect x="695.73" y="81.700" width="1.100" height="1.500" fill="#555"/><rect x="702.24" y="82.800" width="1" height="4.200" fill="#666"/><rect x="709.95" y="81.700" width="1.100" height="1.500" fill="#555"/><rect x="717.05" y="81.700" width="1.100" height="1.500" fill="#555"/><rect x="724.16" y="81.700" width="1.100" height="1.500" fill="#555"/><rect x="731.26" y="81.700" width="1.100" height="1.500" fill="#555"/><rect x="738.37" y="80.600" width="1.100" height="2.600" fill="#555"/><rect x="745.48" y="81.700" width="1.100" height="1.500" fill="#555"/><rect x="752.58" y="81.700" width="1.100" height="1.500" fill="#555"/><rect x="759.69" y="81.700" width="1.100" height="1.500" fill="#555"/><rect x="766.79" y="81.700" width="1.100" height="1.500" fill="#555"/><rect x="773.30" y="82.800" width="1" height="4.200" fill="#666"/><rect x="781.01" y="81.700" width="1.100" height="1.500" fill="#555"/><rect x="788.11" y="81.700" width="1.100" height="1.500" fill="#555"/><rect x="795.22" y="81.700" width="1.100" height="1.500" fill="#555"/><rect x="802.32" y="81.700" width="1.100" height="1.500" fill="#555"/><rect x="809.43" y="80.600" width="1.100" height="2.600" fill="#555"/><rect x="816.54" y="81.700" width="1.100" height="1.500" fill="#555"/><rect x="823.64" y="81.700" width="1.100" height="1.500" fill="#555"/><rect x="830.75" y="81.700" width="1.100" height="1.500" fill="#555"/><rect x="837.85" y="81.700" width="1.100" height="1.500" fill="#555"/><rect x="844.36" y="82.800" width="1" height="4.200" fill="#666"/><rect x="852.07" y="81.700" width="1.100" height="1.500" fill="#555"/><rect x="859.17" y="81.700" width="1.100" height="1.500" fill="#555"/><rect x="866.28" y="81.700" width="1.100" height="1.500" fill="#555"/><rect x="873.38" y="81.700" width="1.100" height="1.500" fill="#555"/><rect x="880.49" y="80.600" width="1.100" height="2.600" fill="#555"/><rect x="887.60" y="81.700" width="1.100" height="1.500" fill="#555"/><rect x="894.70" y="81.700" width="1.100" height="1.500" fill="#555"/><rect x="901.81" y="81.700" width="1.100" height="1.500" fill="#555"/><rect x="908.91" y="81.700" width="1.100" height="1.500" fill="#555"/><rect x="915.42" y="82.800" width="1" height="4.200" fill="#666"/><rect x="923.13" y="81.700" width="1.100" height="1.500" fill="#555"/><rect x="930.23" y="81.700" width="1.100" height="1.500" fill="#555"/><rect x="937.34" y="81.700" width="1.100" height="1.500" fill="#555"/><rect x="944.44" y="81.700" width="1.100" height="1.500" fill="#555"/><rect x="951.55" y="80.600" width="1.100" height="2.600" fill="#555"/><rect x="958.66" y="81.700" width="1.100" height="1.500" fill="#555"/><rect x="965.76" y="81.700" width="1.100" height="1.500" fill="#555"/><rect x="972.87" y="81.700" width="1.100" height="1.500" fill="#555"/><rect x="979.97" y="81.700" width="1.100" height="1.500" fill="#555"/><rect x="986.48" y="82.800" width="1" height="4.200" fill="#666"/><rect x="994.19" y="81.700" width="1.100" height="1.500" fill="#555"/><rect x="1001.29" y="81.700" width="1.100" height="1.500" fill="#555"/><rect x="1008.40" y="81.700" width="1.100" height="1.500" fill="#555"/><rect x="1015.50" y="81.700" width="1.100" height="1.500" fill="#555"/><rect x="1022.61" y="80.600" width="1.100" height="2.600" fill="#555"/><rect x="1029.72" y="81.700" width="1.100" height="1.500" fill="#555"/><rect x="1036.82" y="81.700" width="1.100" height="1.500" fill="#555"/><rect x="1043.93" y="81.700" width="1.100" height="1.500" fill="#555"/><rect x="1051.03" y="81.700" width="1.100" height="1.500" fill="#555"/><rect x="1057.54" y="82.800" width="1" height="4.200" fill="#666"/><rect x="1065.25" y="81.700" width="1.100" height="1.500" fill="#555"/><rect x="1072.35" y="81.700" width="1.100" height="1.500" fill="#555"/><rect x="1079.46" y="81.700" width="1.100" height="1.500" fill="#555"/><rect x="1086.56" y="81.700" width="1.100" height="1.500" fill="#555"/><rect x="1093.67" y="80.600" width="1.100" height="2.600" fill="#555"/><rect x="1100.78" y="81.700" width="1.100" height="1.500" fill="#555"/><rect x="1107.88" y="81.700" width="1.100" height="1.500" fill="#555"/><rect x="1114.99" y="81.700" width="1.100" height="1.500" fill="#555"/><rect x="1122.09" y="81.700" width="1.100" height="1.500" fill="#555"/><rect x="1128.60" y="82.800" width="1" height="4.200" fill="#666"/><rect x="1136.31" y="81.700" width="1.100" height="1.500" fill="#555"/><rect x="1143.41" y="81.700" width="1.100" height="1.500" fill="#555"/><rect x="1150.52" y="81.700" width="1.100" height="1.500" fill="#555"/><rect x="1157.62" y="81.700" width="1.100" height="1.500" fill="#555"/><rect x="1164.73" y="80.600" width="1.100" height="2.600" fill="#555"/><rect x="1171.84" y="81.700" width="1.100" height="1.500" fill="#555"/><rect x="1178.94" y="81.700" width="1.100" height="1.500" fill="#555"/><rect x="1186.05" y="81.700" width="1.100" height="1.500" fill="#555"/><rect x="1193.15" y="81.700" width="1.100" height="1.500" fill="#555"/><rect x="1199.66" y="82.800" width="1" height="4.200" fill="#666"/><rect x="1207.37" y="81.700" width="1.100" height="1.500" fill="#555"/><rect x="1214.47" y="81.700" width="1.100" height="1.500" fill="#555"/><rect x="1221.58" y="81.700" width="1.100" height="1.500" fill="#555"/><rect x="1228.68" y="81.700" width="1.100" height="1.500" fill="#555"/><rect x="1235.79" y="80.600" width="1.100" height="2.600" fill="#555"/><rect x="1242.90" y="81.700" width="1.100" height="1.500" fill="#555"/><rect x="1250.00" y="81.700" width="1.100" height="1.500" fill="#555"/><rect x="1257.11" y="81.700" width="1.100" height="1.500" fill="#555"/><rect x="1264.21" y="81.700" width="1.100" height="1.500" fill="#555"/><rect x="1270.72" y="82.800" width="1" height="4.200" fill="#666"/><rect x="1278.43" y="81.700" width="1.100" height="1.500" fill="#555"/><rect x="1285.53" y="81.700" width="1.100" height="1.500" fill="#555"/><rect x="1292.64" y="81.700" width="1.100" height="1.500" fill="#555"/><rect x="1299.74" y="81.700" width="1.100" height="1.500" fill="#555"/><rect x="1306.85" y="80.600" width="1.100" height="2.600" fill="#555"/><rect x="1313.96" y="81.700" width="1.100" height="1.500" fill="#555"/><rect x="1321.06" y="81.700" width="1.100" height="1.500" fill="#555"/><rect x="1328.17" y="81.700" width="1.100" height="1.500" fill="#555"/><rect x="1335.27" y="81.700" width="1.100" height="1.500" fill="#555"/><rect x="1341.78" y="82.800" width="1" height="4.200" fill="#666"/><rect x="1349.49" y="81.700" width="1.100" height="1.500" fill="#555"/><rect x="1356.59" y="81.700" width="1.100" height="1.500" fill="#555"/><rect x="1363.70" y="81.700" width="1.100" height="1.500" fill="#555"/><rect x="1370.80" y="81.700" width="1.100" height="1.500" fill="#555"/><rect x="1377.91" y="80.600" width="1.100" height="2.600" fill="#555"/><rect x="1385.02" y="81.700" width="1.100" height="1.500" fill="#555"/><rect x="1392.12" y="81.700" width="1.100" height="1.500" fill="#555"/><rect x="1399.23" y="81.700" width="1.100" height="1.500" fill="#555"/><rect x="1406.33" y="81.700" width="1.100" height="1.500" fill="#555"/><rect x="1412.84" y="82.800" width="1" height="4.200" fill="#666"/><rect x="1420.55" y="81.700" width="1.100" height="1.500" fill="#555"/><rect x="1427.65" y="81.700" width="1.100" height="1.500" fill="#555"/><rect x="1434.76" y="81.700" width="1.100" height="1.500" fill="#555"/><rect x="1441.86" y="81.700" width="1.100" height="1.500" fill="#555"/><rect x="1448.97" y="80.600" width="1.100" height="2.600" fill="#555"/><rect x="1456.08" y="81.700" width="1.100" height="1.500" fill="#555"/><rect x="1463.18" y="81.700" width="1.100" height="1.500" fill="#555"/><rect x="1470.29" y="81.700" width="1.100" height="1.500" fill="#555"/><rect x="1477.39" y="81.700" width="1.100" height="1.500" fill="#555"/><rect x="1483.90" y="82.800" width="1" height="4.200" fill="#666"/><rect x="1491.61" y="81.700" width="1.100" height="1.500" fill="#555"/><rect x="1498.71" y="81.700" width="1.100" height="1.500" fill="#555"/><rect x="1505.82" y="81.700" width="1.100" height="1.500" fill="#555"/><rect x="1512.92" y="81.700" width="1.100" height="1.500" fill="#555"/><rect x="1520.03" y="80.600" width="1.100" height="2.600" fill="#555"/><rect x="1527.14" y="81.700" width="1.100" height="1.500" fill="#555"/><rect x="1534.24" y="81.700" width="1.100" height="1.500" fill="#555"/><rect x="1541.35" y="81.700" width="1.100" height="1.500" fill="#555"/><rect x="1548.45" y="81.700" width="1.100" height="1.500" fill="#555"/><rect x="1554.96" y="82.800" width="1" height="4.200" fill="#666"/><rect x="1562.67" y="81.700" width="1.100" height="1.500" fill="#555"/><rect x="1569.77" y="81.700" width="1.100" height="1.500" fill="#555"/><rect x="1576.88" y="81.700" width="1.100" height="1.500" fill="#555"/><rect x="1583.98" y="81.700" width="1.100" height="1.500" fill="#555"/><rect x="1591.09" y="80.600" width="1.100" height="2.600" fill="#555"/><rect x="348.800" y="1007.05" width="2.600" height="1.100" fill="#555"/><rect x="349.900" y="999.94" width="1.500" height="1.100" fill="#555"/><rect x="349.900" y="992.84" width="1.500" height="1.100" fill="#555"/><rect x="349.900" y="985.73" width="1.500" height="1.100" fill="#555"/><rect x="349.900" y="978.63" width="1.500" height="1.100" fill="#555"/><rect x="351.200" y="971.52" width="2.800" height="1" fill="#666"/><rect x="349.900" y="964.41" width="1.500" height="1.100" fill="#555"/><rect x="349.900" y="957.31" width="1.500" height="1.100" fill="#555"/><rect x="349.900" y="950.20" width="1.500" height="1.100" fill="#555"/><rect x="349.900" y="943.10" width="1.500" height="1.100" fill="#555"/><rect x="348.800" y="935.99" width="2.600" height="1.100" fill="#555"/><rect x="349.900" y="928.88" width="1.500" height="1.100" fill="#555"/><rect x="349.900" y="921.78" width="1.500" height="1.100" fill="#555"/><rect x="349.900" y="914.67" width="1.500" height="1.100" fill="#555"/><rect x="349.900" y="907.57" width="1.500" height="1.100" fill="#555"/><rect x="351.200" y="900.46" width="2.800" height="1" fill="#666"/><rect x="349.900" y="893.35" width="1.500" height="1.100" fill="#555"/><rect x="349.900" y="886.25" width="1.500" height="1.100" fill="#555"/><rect x="349.900" y="879.14" width="1.500" height="1.100" fill="#555"/><rect x="349.900" y="872.04" width="1.500" height="1.100" fill="#555"/><rect x="348.800" y="864.93" width="2.600" height="1.100" fill="#555"/><rect x="349.900" y="857.82" width="1.500" height="1.100" fill="#555"/><rect x="349.900" y="850.72" width="1.500" height="1.100" fill="#555"/><rect x="349.900" y="843.61" width="1.500" height="1.100" fill="#555"/><rect x="349.900" y="836.51" width="1.500" height="1.100" fill="#555"/><rect x="351.200" y="829.40" width="2.800" height="1" fill="#666"/><rect x="349.900" y="822.29" width="1.500" height="1.100" fill="#555"/><rect x="349.900" y="815.19" width="1.500" height="1.100" fill="#555"/><rect x="349.900" y="808.08" width="1.500" height="1.100" fill="#555"/><rect x="349.900" y="800.98" width="1.500" height="1.100" fill="#555"/><rect x="348.800" y="793.87" width="2.600" height="1.100" fill="#555"/><rect x="349.900" y="786.76" width="1.500" height="1.100" fill="#555"/><rect x="349.900" y="779.66" width="1.500" height="1.100" fill="#555"/><rect x="349.900" y="772.55" width="1.500" height="1.100" fill="#555"/><rect x="349.900" y="765.45" width="1.500" height="1.100" fill="#555"/><rect x="351.200" y="758.34" width="2.800" height="1" fill="#666"/><rect x="349.900" y="751.23" width="1.500" height="1.100" fill="#555"/><rect x="349.900" y="744.13" width="1.500" height="1.100" fill="#555"/><rect x="349.900" y="737.02" width="1.500" height="1.100" fill="#555"/><rect x="349.900" y="729.92" width="1.500" height="1.100" fill="#555"/><rect x="348.800" y="722.81" width="2.600" height="1.100" fill="#555"/><rect x="349.900" y="715.70" width="1.500" height="1.100" fill="#555"/><rect x="349.900" y="708.60" width="1.500" height="1.100" fill="#555"/><rect x="349.900" y="701.49" width="1.500" height="1.100" fill="#555"/><rect x="349.900" y="694.39" width="1.500" height="1.100" fill="#555"/><rect x="351.200" y="687.28" width="2.800" height="1" fill="#666"/><rect x="349.900" y="680.17" width="1.500" height="1.100" fill="#555"/><rect x="349.900" y="673.07" width="1.500" height="1.100" fill="#555"/><rect x="349.900" y="665.96" width="1.500" height="1.100" fill="#555"/><rect x="349.900" y="658.86" width="1.500" height="1.100" fill="#555"/><rect x="348.800" y="651.75" width="2.600" height="1.100" fill="#555"/><rect x="349.900" y="644.64" width="1.500" height="1.100" fill="#555"/><rect x="349.900" y="637.54" width="1.500" height="1.100" fill="#555"/><rect x="349.900" y="630.43" width="1.500" height="1.100" fill="#555"/><rect x="349.900" y="623.33" width="1.500" height="1.100" fill="#555"/><rect x="351.200" y="616.22" width="2.800" height="1" fill="#666"/><rect x="349.900" y="609.11" width="1.500" height="1.100" fill="#555"/><rect x="349.900" y="602.01" width="1.500" height="1.100" fill="#555"/><rect x="349.900" y="594.90" width="1.500" height="1.100" fill="#555"/><rect x="349.900" y="587.80" width="1.500" height="1.100" fill="#555"/><rect x="348.800" y="580.69" width="2.600" height="1.100" fill="#555"/><rect x="349.900" y="573.58" width="1.500" height="1.100" fill="#555"/><rect x="349.900" y="566.48" width="1.500" height="1.100" fill="#555"/><rect x="349.900" y="559.37" width="1.500" height="1.100" fill="#555"/><rect x="349.900" y="552.27" width="1.500" height="1.100" fill="#555"/><rect x="351.200" y="545.16" width="2.800" height="1" fill="#666"/><rect x="349.900" y="538.05" width="1.500" height="1.100" fill="#555"/><rect x="349.900" y="530.95" width="1.500" height="1.100" fill="#555"/><rect x="349.900" y="523.84" width="1.500" height="1.100" fill="#555"/><rect x="349.900" y="516.74" width="1.500" height="1.100" fill="#555"/><rect x="348.800" y="509.63" width="2.600" height="1.100" fill="#555"/><rect x="349.900" y="502.52" width="1.500" height="1.100" fill="#555"/><rect x="349.900" y="495.42" width="1.500" height="1.100" fill="#555"/><rect x="349.900" y="488.31" width="1.500" height="1.100" fill="#555"/><rect x="349.900" y="481.21" width="1.500" height="1.100" fill="#555"/><rect x="351.200" y="474.10" width="2.800" height="1" fill="#666"/><rect x="349.900" y="466.99" width="1.500" height="1.100" fill="#555"/><rect x="349.900" y="459.89" width="1.500" height="1.100" fill="#555"/><rect x="349.900" y="452.78" width="1.500" height="1.100" fill="#555"/><rect x="349.900" y="445.68" width="1.500" height="1.100" fill="#555"/><rect x="348.800" y="438.57" width="2.600" height="1.100" fill="#555"/><rect x="349.900" y="431.46" width="1.500" height="1.100" fill="#555"/><rect x="349.900" y="424.36" width="1.500" height="1.100" fill="#555"/><rect x="349.900" y="417.25" width="1.500" height="1.100" fill="#555"/><rect x="349.900" y="410.15" width="1.500" height="1.100" fill="#555"/><rect x="351.200" y="403.04" width="2.800" height="1" fill="#666"/><rect x="349.900" y="395.93" width="1.500" height="1.100" fill="#555"/><rect x="349.900" y="388.83" width="1.500" height="1.100" fill="#555"/><rect x="349.900" y="381.72" width="1.500" height="1.100" fill="#555"/><rect x="349.900" y="374.62" width="1.500" height="1.100" fill="#555"/><rect x="348.800" y="367.51" width="2.600" height="1.100" fill="#555"/><rect x="349.900" y="360.40" width="1.500" height="1.100" fill="#555"/><rect x="349.900" y="353.30" width="1.500" height="1.100" fill="#555"/><rect x="349.900" y="346.19" width="1.500" height="1.100" fill="#555"/><rect x="349.900" y="339.09" width="1.500" height="1.100" fill="#555"/><rect x="351.200" y="331.98" width="2.800" height="1" fill="#666"/><rect x="349.900" y="324.87" width="1.500" height="1.100" fill="#555"/><rect x="349.900" y="317.77" width="1.500" height="1.100" fill="#555"/><rect x="349.900" y="310.66" width="1.500" height="1.100" fill="#555"/><rect x="349.900" y="303.56" width="1.500" height="1.100" fill="#555"/><rect x="348.800" y="296.45" width="2.600" height="1.100" fill="#555"/><rect x="349.900" y="289.34" width="1.500" height="1.100" fill="#555"/><rect x="349.900" y="282.24" width="1.500" height="1.100" fill="#555"/><rect x="349.900" y="275.13" width="1.500" height="1.100" fill="#555"/><rect x="349.900" y="268.03" width="1.500" height="1.100" fill="#555"/><rect x="351.200" y="260.92" width="2.800" height="1" fill="#666"/><rect x="349.900" y="253.81" width="1.500" height="1.100" fill="#555"/><rect x="349.900" y="246.71" width="1.500" height="1.100" fill="#555"/><rect x="349.900" y="239.60" width="1.500" height="1.100" fill="#555"/><rect x="349.900" y="232.50" width="1.500" height="1.100" fill="#555"/><rect x="348.800" y="225.39" width="2.600" height="1.100" fill="#555"/><rect x="349.900" y="218.28" width="1.500" height="1.100" fill="#555"/><rect x="349.900" y="211.18" width="1.500" height="1.100" fill="#555"/><rect x="349.900" y="204.07" width="1.500" height="1.100" fill="#555"/><rect x="349.900" y="196.97" width="1.500" height="1.100" fill="#555"/><rect x="351.200" y="189.86" width="2.800" height="1" fill="#666"/><rect x="349.900" y="182.75" width="1.500" height="1.100" fill="#555"/><rect x="349.900" y="175.65" width="1.500" height="1.100" fill="#555"/><rect x="349.900" y="168.54" width="1.500" height="1.100" fill="#555"/><rect x="349.900" y="161.44" width="1.500" height="1.100" fill="#555"/><rect x="348.800" y="154.33" width="2.600" height="1.100" fill="#555"/><rect x="349.900" y="147.22" width="1.500" height="1.100" fill="#555"/><rect x="349.900" y="140.12" width="1.500" height="1.100" fill="#555"/><rect x="349.900" y="133.01" width="1.500" height="1.100" fill="#555"/><rect x="349.900" y="125.91" width="1.500" height="1.100" fill="#555"/><rect x="351.200" y="118.80" width="2.800" height="1" fill="#666"/><rect x="349.900" y="111.69" width="1.500" height="1.100" fill="#555"/><rect x="349.900" y="104.59" width="1.500" height="1.100" fill="#555"/><rect x="349.900" y="97.48" width="1.500" height="1.100" fill="#555"/><rect x="349.900" y="90.38" width="1.500" height="1.100" fill="#555"/></svg>
<div class="b" style="left:0;top:0;width:1595px;height:90px;overflow:hidden;will-change:transform"><span class="t" style="left:357.00px;top:70.73px;font-size:10px;line-height:15px;color:#5a5a5a;">0</span><span class="t" style="left:406.28px;top:70.73px;font-size:10px;line-height:15px;color:#5a5a5a;">160.0</span><span class="t" style="left:477.34px;top:70.73px;font-size:10px;line-height:15px;color:#5a5a5a;">170.0</span><span class="t" style="left:548.40px;top:70.73px;font-size:10px;line-height:15px;color:#5a5a5a;">180.0</span><span class="t" style="left:619.46px;top:70.73px;font-size:10px;line-height:15px;color:#5a5a5a;">190.0</span><span class="t" style="left:690.52px;top:70.73px;font-size:10px;line-height:15px;color:#5a5a5a;">200.0</span><span class="t" style="left:761.58px;top:70.73px;font-size:10px;line-height:15px;color:#5a5a5a;">210.0</span><span class="t" style="left:832.64px;top:70.73px;font-size:10px;line-height:15px;color:#5a5a5a;">220.0</span><span class="t" style="left:903.70px;top:70.73px;font-size:10px;line-height:15px;color:#5a5a5a;">230.0</span><span class="t" style="left:974.76px;top:70.73px;font-size:10px;line-height:15px;color:#5a5a5a;">240.0</span><span class="t" style="left:1045.82px;top:70.73px;font-size:10px;line-height:15px;color:#5a5a5a;">250.0</span><span class="t" style="left:1116.88px;top:70.73px;font-size:10px;line-height:15px;color:#5a5a5a;">260.0</span><span class="t" style="left:1187.94px;top:70.73px;font-size:10px;line-height:15px;color:#5a5a5a;">270.0</span><span class="t" style="left:1259.00px;top:70.73px;font-size:10px;line-height:15px;color:#5a5a5a;">280.0</span><span class="t" style="left:1330.06px;top:70.73px;font-size:10px;line-height:15px;color:#5a5a5a;">290.0</span><span class="t" style="left:1401.12px;top:70.73px;font-size:10px;line-height:15px;color:#5a5a5a;">300.0</span><span class="t" style="left:1472.18px;top:70.73px;font-size:10px;line-height:15px;color:#5a5a5a;">310.0</span><span class="t" style="left:1543.24px;top:70.73px;font-size:10px;line-height:15px;color:#5a5a5a;">320.0</span></div>
<div class="b" style="left:0;top:88px;width:356px;height:923px;overflow:hidden;will-change:transform"><div class="b" style="left:0;top:-88px"><span class="t" style="left:342.50px;top:984.24px;font-size:10px;line-height:10px;color:#5a5a5a;transform-origin:0 0;transform:rotate(-90deg)">390.0</span><span class="t" style="left:342.50px;top:913.18px;font-size:10px;line-height:10px;color:#5a5a5a;transform-origin:0 0;transform:rotate(-90deg)">400.0</span><span class="t" style="left:342.50px;top:842.12px;font-size:10px;line-height:10px;color:#5a5a5a;transform-origin:0 0;transform:rotate(-90deg)">410.0</span><span class="t" style="left:342.50px;top:771.06px;font-size:10px;line-height:10px;color:#5a5a5a;transform-origin:0 0;transform:rotate(-90deg)">420.0</span><span class="t" style="left:342.50px;top:700.00px;font-size:10px;line-height:10px;color:#5a5a5a;transform-origin:0 0;transform:rotate(-90deg)">430.0</span><span class="t" style="left:342.50px;top:628.94px;font-size:10px;line-height:10px;color:#5a5a5a;transform-origin:0 0;transform:rotate(-90deg)">440.0</span><span class="t" style="left:342.50px;top:557.88px;font-size:10px;line-height:10px;color:#5a5a5a;transform-origin:0 0;transform:rotate(-90deg)">450.0</span><span class="t" style="left:342.50px;top:486.82px;font-size:10px;line-height:10px;color:#5a5a5a;transform-origin:0 0;transform:rotate(-90deg)">460.0</span><span class="t" style="left:342.50px;top:415.76px;font-size:10px;line-height:10px;color:#5a5a5a;transform-origin:0 0;transform:rotate(-90deg)">470.0</span><span class="t" style="left:342.50px;top:344.70px;font-size:10px;line-height:10px;color:#5a5a5a;transform-origin:0 0;transform:rotate(-90deg)">480.0</span><span class="t" style="left:342.50px;top:273.64px;font-size:10px;line-height:10px;color:#5a5a5a;transform-origin:0 0;transform:rotate(-90deg)">490.0</span><span class="t" style="left:342.50px;top:202.58px;font-size:10px;line-height:10px;color:#5a5a5a;transform-origin:0 0;transform:rotate(-90deg)">500.0</span><span class="t" style="left:342.50px;top:131.52px;font-size:10px;line-height:10px;color:#5a5a5a;transform-origin:0 0;transform:rotate(-90deg)">510.0</span></div></div>
<svg class="b" style="left:356px;top:88px" width="1239" height="923" viewBox="356 88 1239 923"><polygon points="355.0,428.8 400.0,431.0 440.0,434.0 490.0,441.3 540.0,452.6 581.0,465.2 641.0,477.2 740.0,497.5 840.0,522.6 940.0,546.5 1041.0,573.3 1140.0,599.5 1240.0,632.2 1340.0,666.6 1441.0,700.4 1540.0,735.5 1596.0,756.4 1596.0,852.0 1545.0,829.7 1497.0,810.8 1441.0,790.7 1397.0,775.7 1358.0,760.6 1340.0,754.3 1240.0,720.5 1165.0,696.6 1140.0,689.2 1041.0,664.3 980.0,644.3 958.0,640.5 955.0,632.0 940.0,628.0 840.0,605.4 780.0,594.6 762.6,594.1 760.0,590.0 740.0,585.3 666.0,574.3 616.0,560.5 581.0,551.0 558.0,547.9 555.0,542.9 490.0,532.9 440.0,524.1 390.0,514.8 355.0,512.3" fill="#808080" shape-rendering="crispEdges"/><polygon points="374.3,472.5 372.3,484.0 370.8,488.6 369.1,491.9 367.0,494.5 364.3,496.5 361.2,498.0 357.4,499.1 352.7,499.7 346.4,499.8 331.0,498.9 315.7,497.7 309.6,496.8 305.1,495.6 301.7,494.0 299.1,492.2 297.1,489.9 295.8,487.1 295.0,483.7 295.0,479.1 296.4,467.8 298.3,456.5 299.6,452.0 301.4,448.7 303.5,446.1 306.1,444.1 309.2,442.6 313.1,441.5 317.8,440.9 324.2,440.7 339.7,441.3 355.2,442.3 361.4,443.2 365.8,444.3 369.3,445.8 371.9,447.7 373.9,450.0 375.2,452.7 375.9,456.2 375.9,461.0" fill="#fff"/><polygon points="440.8,479.5 437.8,496.2 436.7,500.4 435.6,503.2 434.4,505.2 433.0,506.7 431.3,507.7 429.2,508.3 426.5,508.5 422.6,508.2 407.7,505.8 392.7,503.1 389.0,502.4 386.5,501.6 384.7,500.6 383.4,499.2 382.6,497.6 382.0,495.5 381.9,492.7 382.2,488.6 384.6,472.7 387.2,456.7 388.2,452.7 389.3,450.0 390.5,448.0 391.9,446.5 393.6,445.3 395.7,444.5 398.4,444.1 402.4,444.0 417.7,445.3 433.1,446.8 436.9,447.5 439.4,448.6 441.2,449.8 442.5,451.3 443.4,453.1 443.9,455.4 444.0,458.4 443.6,462.7" fill="#fff"/><polygon points="573.7,506.6 569.9,520.6 567.8,524.8 565.3,527.4 562.2,529.1 558.4,530.1 553.8,530.6 548.0,530.6 540.5,530.0 530.1,528.4 496.9,522.4 463.7,516.3 453.4,514.0 446.3,511.9 441.0,509.8 436.9,507.5 433.9,504.9 431.8,501.9 430.6,498.3 430.4,493.4 432.6,478.1 435.6,463.0 437.5,458.4 439.8,455.4 442.8,453.2 446.6,451.8 451.3,450.9 457.2,450.6 464.7,450.9 475.5,452.0 509.5,458.5 543.5,466.5 554.0,470.1 561.3,473.0 566.7,475.7 570.8,478.4 573.7,481.3 575.8,484.4 576.8,487.9 576.8,492.5" fill="#fff"/><polygon points="707.6,507.7 706.9,508.5 705.5,508.8 703.4,508.8 700.4,508.5 696.7,508.1 692.2,507.5 686.7,506.6 680.2,505.2 672.0,503.5 657.9,500.5 643.8,497.3 635.7,495.5 629.2,494.0 623.8,492.6 619.4,491.5 615.9,490.4 613.1,489.5 611.2,488.7 610.2,487.9 610.0,487.0 610.6,486.3 611.9,486.0 614.1,486.1 617.0,486.4 620.7,486.9 625.2,487.6 630.7,488.6 637.3,489.8 645.5,491.5 659.7,494.5 673.9,497.6 682.0,499.4 688.5,501.0 693.9,502.2 698.3,503.3 701.8,504.3 704.6,505.2 706.4,506.0 707.5,506.8" fill="#fff"/><polygon points="777.1,554.3 772.6,562.4 768.5,566.3 763.4,569.0 757.1,570.8 749.7,571.9 740.8,572.3 730.5,572.1 718.2,571.1 702.9,569.2 674.4,564.8 646.0,557.5 631.1,552.8 619.5,548.6 610.2,544.5 602.7,540.5 596.9,536.4 592.7,532.2 590.1,527.7 589.1,522.6 590.6,513.9 593.5,505.5 596.8,501.4 601.4,498.7 607.4,496.9 614.7,495.9 623.7,495.8 634.3,496.5 647.1,498.1 663.2,501.0 693.3,507.2 723.3,513.3 738.9,517.3 751.0,521.2 760.6,525.0 768.2,528.9 773.9,532.8 777.8,536.8 779.9,541.1 780.1,545.9" fill="#fff"/><polygon points="793.5,554.1 791.8,557.5 790.4,560.0 789.1,562.1 787.8,563.9 786.5,565.4 785.3,566.6 784.1,567.5 782.9,568.1 781.7,568.4 780.4,568.3 779.2,567.9 778.4,567.2 778.0,566.3 777.8,565.1 777.8,563.6 778.0,561.9 778.5,559.9 779.3,557.6 780.3,555.0 781.9,551.5 783.6,548.0 784.9,545.5 786.2,543.3 787.5,541.5 788.8,540.0 790.0,538.8 791.2,537.9 792.4,537.4 793.6,537.1 795.0,537.3 796.3,537.8 797.0,538.4 797.5,539.4 797.7,540.6 797.7,542.1 797.4,543.8 796.9,545.8 796.2,548.0 795.1,550.6" fill="#fff"/><polygon points="958.9,567.4 957.9,568.3 956.0,568.6 953.2,568.4 949.4,567.9 944.6,567.0 938.7,565.8 931.7,564.2 923.3,562.3 912.8,559.9 894.6,555.6 876.4,551.2 866.0,548.6 857.8,546.5 850.9,544.7 845.3,543.1 840.8,541.7 837.4,540.4 835.1,539.3 833.8,538.3 833.8,537.1 834.9,536.2 836.7,535.9 839.5,536.0 843.3,536.4 848.1,537.1 854.0,538.2 861.1,539.6 869.5,541.4 879.9,543.8 898.1,548.1 916.2,552.5 926.6,555.1 934.8,557.2 941.7,559.3 947.3,561.0 951.8,562.6 955.2,564.0 957.6,565.1 958.8,566.2" fill="#fff"/><polygon points="948.1,596.3 944.5,602.9 941.0,606.3 936.5,608.6 931.1,610.2 924.7,610.9 917.1,611.0 908.3,610.3 898.1,608.8 885.5,606.4 864.0,601.3 842.6,595.9 830.6,592.9 821.2,589.9 813.7,586.9 807.7,583.7 803.3,580.4 800.3,576.9 798.8,573.1 798.9,568.8 801.6,561.8 805.5,555.0 809.2,551.5 813.7,549.0 819.2,547.4 825.7,546.5 833.2,546.3 841.9,546.8 852.1,548.0 864.5,550.2 885.7,555.1 906.7,560.4 918.6,563.9 927.9,567.2 935.4,570.6 941.3,574.0 945.8,577.6 948.8,581.2 950.4,585.1 950.5,589.4" fill="#fff"/><polygon points="981.5,592.6 979.4,597.2 978.0,599.8 976.6,601.8 975.1,603.4 973.6,604.6 972.0,605.5 970.3,606.0 968.5,606.1 966.4,605.9 962.9,605.0 959.6,603.7 957.8,602.7 956.6,601.6 955.7,600.2 955.1,598.7 954.9,597.0 955.0,595.1 955.5,592.9 956.3,590.2 958.3,585.6 960.4,581.1 961.8,578.5 963.3,576.5 964.7,575.0 966.2,573.8 967.8,572.9 969.5,572.4 971.3,572.2 973.4,572.3 976.8,573.2 980.1,574.2 981.8,575.2 983.1,576.3 984.0,577.6 984.5,579.1 984.8,580.8 984.7,582.8 984.2,585.1 983.4,587.9" fill="#fff"/><polygon points="966.1,615.6 965.5,616.7 964.8,617.5 964.0,618.1 963.0,618.5 961.9,618.8 960.7,618.9 959.2,618.8 957.7,618.6 955.9,618.2 953.6,617.4 951.3,616.6 949.7,615.9 948.4,615.1 947.3,614.3 946.4,613.6 945.8,612.8 945.4,612.0 945.2,611.2 945.3,610.2 945.7,609.0 946.3,607.9 947.0,607.1 947.8,606.5 948.8,606.0 949.9,605.7 951.2,605.5 952.6,605.6 954.1,605.8 955.9,606.2 958.2,606.9 960.5,607.7 962.1,608.4 963.5,609.1 964.5,609.9 965.4,610.7 966.0,611.5 966.5,612.4 966.6,613.3 966.6,614.3" fill="#fff"/><polygon points="1186.9,629.5 1185.3,632.9 1184.5,633.2 1183.5,633.1 1182.0,632.8 1180.0,632.4 1177.4,631.7 1174.0,630.6 1169.1,629.1 1161.2,626.7 1095.6,608.1 1029.8,590.3 1021.9,588.0 1017.0,586.6 1013.6,585.6 1011.1,584.8 1009.2,584.1 1007.9,583.5 1007.1,583.0 1006.7,582.4 1007.9,578.9 1009.5,575.5 1010.3,575.2 1011.3,575.2 1012.8,575.4 1014.8,575.8 1017.4,576.4 1020.9,577.3 1025.8,578.6 1033.7,580.7 1099.1,598.2 1165.0,617.1 1172.9,619.7 1177.7,621.3 1181.1,622.5 1183.7,623.4 1185.5,624.2 1186.9,624.8 1187.7,625.4 1188.1,626.0" fill="#fff"/><polygon points="1176.1,650.5 1171.6,661.2 1170.5,662.3 1169.2,662.8 1167.6,662.9 1165.5,662.7 1162.8,662.2 1159.3,661.4 1154.3,660.1 1146.4,657.9 1080.8,640.5 1014.9,621.7 1007.0,619.2 1002.2,617.6 998.8,616.3 996.4,615.2 994.6,614.2 993.5,613.2 992.8,612.1 992.8,610.7 997.0,600.0 1001.6,589.3 1002.7,588.2 1004.0,587.7 1005.6,587.5 1007.7,587.7 1010.4,588.1 1014.0,588.8 1018.9,590.0 1026.8,592.2 1092.3,610.0 1158.2,628.5 1166.1,631.0 1170.9,632.7 1174.2,634.1 1176.7,635.2 1178.4,636.2 1179.6,637.2 1180.2,638.3 1180.3,639.8" fill="#fff"/><polygon points="1156.1,669.9 1154.5,672.8 1153.1,673.3 1151.1,673.3 1148.4,672.9 1144.8,672.2 1140.1,671.2 1134.2,669.9 1126.2,667.9 1114.5,664.8 1068.6,653.2 1022.7,640.0 1011.0,636.2 1003.2,633.6 997.4,631.6 992.9,629.9 989.6,628.5 987.1,627.3 985.6,626.2 984.8,625.0 985.7,621.9 987.4,618.9 988.7,618.5 990.8,618.5 993.5,618.9 997.1,619.7 1001.8,620.9 1007.7,622.5 1015.6,624.8 1027.4,628.3 1073.3,641.3 1119.2,653.0 1130.8,656.4 1138.7,658.7 1144.5,660.5 1148.9,662.0 1152.3,663.3 1154.7,664.5 1156.3,665.6 1157.0,666.7" fill="#fff"/><polygon points="1156.4,680.1 1155.5,681.0 1153.7,681.1 1151.1,680.8 1147.4,680.1 1142.8,679.1 1137.1,677.9 1130.2,676.3 1122.1,674.3 1111.9,671.8 1094.3,667.4 1076.6,662.9 1066.5,660.2 1058.5,658.0 1051.8,656.1 1046.3,654.4 1041.9,652.8 1038.6,651.2 1036.3,650.0 1035.0,648.9 1034.9,647.8 1035.8,646.9 1037.5,646.8 1040.2,647.1 1043.9,647.8 1048.5,648.9 1054.2,650.0 1061.0,651.5 1069.2,653.5 1079.4,655.9 1097.0,660.4 1114.6,664.9 1124.7,667.7 1132.8,670.0 1139.4,672.0 1144.9,673.7 1149.3,675.4 1152.7,676.8 1155.0,678.0 1156.3,679.0" fill="#fff"/><polygon points="1386.4,696.6 1384.5,699.9 1383.7,700.1 1382.6,700.0 1381.1,699.7 1379.0,699.1 1376.4,698.3 1372.8,697.2 1367.8,695.6 1359.8,692.9 1293.1,670.3 1226.0,647.6 1218.0,644.9 1213.0,643.2 1209.6,642.0 1207.0,641.1 1205.1,640.3 1203.7,639.7 1202.9,639.1 1202.5,638.5 1203.7,635.0 1205.3,631.6 1206.1,631.4 1207.2,631.4 1208.7,631.7 1210.7,632.2 1213.3,633.0 1216.9,634.1 1221.9,635.6 1230.0,638.2 1297.0,661.1 1364.4,684.0 1372.5,686.7 1377.5,688.4 1381.0,689.7 1383.5,690.7 1385.4,691.5 1386.8,692.1 1387.6,692.7 1388.0,693.3" fill="#fff"/><polygon points="1373.5,716.5 1367.9,726.5 1366.7,727.6 1365.4,728.0 1363.7,728.0 1361.6,727.8 1358.8,727.2 1355.3,726.2 1350.3,724.7 1342.3,722.1 1276.7,699.9 1210.7,678.0 1202.8,675.4 1198.0,673.6 1194.6,672.3 1192.2,671.2 1190.5,670.1 1189.3,669.1 1188.7,668.0 1188.6,666.6 1192.8,655.9 1197.4,645.3 1198.5,644.2 1199.8,643.7 1201.4,643.6 1203.6,643.9 1206.3,644.4 1209.9,645.3 1214.9,646.8 1223.0,649.3 1289.6,671.7 1356.6,694.5 1364.6,697.3 1369.5,699.1 1372.9,700.5 1375.3,701.7 1377.1,702.8 1378.2,703.8 1378.8,704.9 1378.7,706.3" fill="#fff"/><polygon points="1351.4,734.2 1349.5,737.0 1348.1,737.4 1346.0,737.3 1343.2,736.8 1339.6,735.9 1335.0,734.6 1329.1,732.8 1321.2,730.3 1309.5,726.4 1263.9,711.0 1218.3,695.9 1206.7,692.1 1198.9,689.5 1193.1,687.4 1188.7,685.8 1185.4,684.3 1183.0,683.1 1181.4,682.0 1180.7,680.9 1181.6,677.7 1183.2,674.8 1184.6,674.4 1186.6,674.4 1189.3,674.9 1192.9,675.7 1197.6,676.9 1203.5,678.6 1211.5,681.0 1223.2,684.7 1269.1,700.0 1314.9,715.6 1326.6,719.6 1334.4,722.4 1340.2,724.5 1344.6,726.3 1348.0,727.7 1350.4,729.0 1351.9,730.1 1352.6,731.2" fill="#fff"/><polygon points="1350.8,744.1 1349.8,744.9 1348.0,744.9 1345.3,744.5 1341.7,743.6 1337.0,742.4 1331.4,740.8 1324.6,738.7 1316.5,736.1 1306.4,732.8 1289.0,727.0 1271.5,721.0 1261.5,717.5 1253.6,714.7 1247.0,712.2 1241.6,710.2 1237.2,708.4 1233.9,706.9 1231.6,705.7 1230.4,704.7 1230.3,703.6 1231.2,702.8 1233.0,702.7 1235.6,703.1 1239.3,703.9 1243.9,705.0 1249.6,706.6 1256.4,708.7 1264.5,711.3 1274.6,714.6 1292.1,720.5 1309.6,726.5 1319.6,730.0 1327.6,732.8 1334.2,735.3 1339.6,737.4 1344.0,739.2 1347.3,740.7 1349.5,742.0 1350.7,743.1" fill="#fff"/><polygon points="1576.9,764.5 1575.0,767.9 1574.3,768.1 1573.2,768.0 1571.7,767.6 1569.8,767.1 1567.3,766.2 1563.9,765.0 1559.1,763.3 1551.4,760.4 1487.7,737.3 1423.7,714.8 1416.0,712.1 1411.3,710.4 1408.0,709.2 1405.5,708.2 1403.7,707.4 1402.5,706.8 1401.7,706.2 1401.3,705.6 1402.9,702.3 1404.8,699.0 1405.6,698.8 1406.7,698.9 1408.1,699.2 1410.1,699.7 1412.6,700.4 1416.0,701.5 1420.7,703.1 1428.4,705.6 1492.1,728.0 1556.1,751.2 1563.8,754.1 1568.5,755.9 1571.8,757.2 1574.2,758.3 1576.0,759.1 1577.3,759.8 1578.1,760.4 1578.4,761.0" fill="#fff"/><polygon points="1564.3,785.2 1558.8,795.6 1557.6,796.7 1556.3,797.1 1554.6,797.2 1552.6,796.8 1549.9,796.2 1546.4,795.1 1541.6,793.4 1533.9,790.6 1470.0,767.2 1405.8,744.7 1398.2,741.7 1393.5,739.9 1390.3,738.4 1387.9,737.2 1386.3,736.1 1385.2,735.1 1384.7,734.0 1384.8,732.5 1390.0,722.3 1395.6,712.1 1396.8,711.1 1398.2,710.7 1399.8,710.6 1401.9,710.9 1404.5,711.4 1408.0,712.4 1412.8,713.9 1420.5,716.5 1484.2,738.8 1548.3,762.1 1556.0,765.0 1560.6,767.0 1563.9,768.5 1566.2,769.7 1567.9,770.9 1568.9,771.9 1569.5,773.1 1569.4,774.5" fill="#fff"/><polygon points="1542.6,803.4 1540.7,806.3 1539.3,806.7 1537.2,806.5 1534.5,805.9 1531.0,804.9 1526.4,803.4 1520.6,801.4 1512.9,798.5 1501.5,794.2 1456.7,778.2 1412.0,762.7 1400.7,758.6 1393.0,755.6 1387.4,753.3 1383.1,751.4 1379.9,749.8 1377.5,748.5 1376.0,747.3 1375.4,746.2 1376.6,743.2 1378.5,740.4 1380.0,740.0 1382.0,740.1 1384.7,740.7 1388.3,741.7 1392.8,743.1 1398.6,745.0 1406.3,747.7 1417.8,751.7 1462.5,767.2 1507.1,783.2 1518.5,787.5 1526.1,790.6 1531.7,793.0 1536.0,794.9 1539.3,796.5 1541.6,797.9 1543.1,799.1 1543.7,800.3" fill="#fff"/><polygon points="1541.9,813.8 1540.9,814.6 1539.2,814.6 1536.5,814.1 1532.9,813.1 1528.3,811.7 1522.8,809.8 1516.1,807.4 1508.1,804.4 1498.2,800.8 1481.0,794.6 1463.9,788.5 1454.0,784.8 1446.2,781.9 1439.7,779.4 1434.4,777.3 1430.2,775.5 1426.9,774.0 1424.7,772.7 1423.5,771.7 1423.6,770.6 1424.5,769.8 1426.3,769.7 1428.9,770.1 1432.5,771.0 1437.1,772.2 1442.7,773.8 1449.3,775.9 1457.3,778.6 1467.2,782.0 1484.4,788.1 1501.5,794.3 1511.4,798.1 1519.2,801.3 1525.7,804.1 1531.0,806.5 1535.2,808.5 1538.5,810.2 1540.7,811.6 1541.9,812.7" fill="#fff"/><polygon points="1766.8,837.4 1764.8,841.2 1764.1,841.5 1763.0,841.4 1761.5,841.1 1759.6,840.5 1757.1,839.7 1753.7,838.5 1748.9,836.7 1741.3,833.8 1677.7,809.1 1613.8,784.4 1606.2,781.4 1601.5,779.5 1598.2,778.1 1595.7,777.0 1593.9,776.2 1592.7,775.5 1591.9,774.9 1591.5,774.2 1593.1,770.7 1595.0,767.3 1595.7,767.1 1596.8,767.2 1598.2,767.5 1600.1,768.1 1602.7,768.9 1606.1,770.1 1610.8,771.9 1618.5,774.8 1682.1,798.9 1746.0,823.2 1753.7,826.2 1758.4,828.0 1761.7,829.4 1764.1,830.4 1765.9,831.3 1767.2,832.0 1768.0,832.7 1768.3,833.3" fill="#fff"/><polygon points="1753.9,861.2 1748.3,873.3 1747.1,874.5 1745.7,875.0 1744.1,875.1 1742.0,874.8 1739.4,874.1 1735.9,873.0 1731.1,871.2 1723.5,868.2 1660.0,842.0 1596.3,815.6 1588.7,812.4 1584.0,810.3 1580.8,808.7 1578.5,807.3 1576.8,806.1 1575.7,805.0 1575.2,803.9 1575.3,802.3 1580.4,791.6 1585.9,781.0 1587.1,779.9 1588.4,779.5 1590.0,779.5 1592.1,779.8 1594.8,780.4 1598.2,781.5 1603.0,783.2 1610.7,786.1 1674.2,810.8 1738.2,835.7 1745.8,838.8 1750.4,840.8 1753.6,842.4 1756.0,843.7 1757.6,844.9 1758.7,846.1 1759.2,847.3 1759.1,849.0" fill="#fff"/><polygon points="1732.0,882.5 1730.1,885.8 1728.7,886.3 1726.6,886.2 1723.9,885.5 1720.4,884.4 1715.9,882.9 1710.1,880.6 1702.5,877.5 1691.1,872.8 1646.8,854.0 1602.4,835.2 1591.2,830.3 1583.6,827.0 1578.0,824.4 1573.8,822.3 1570.5,820.6 1568.2,819.1 1566.8,817.8 1566.1,816.6 1567.3,813.4 1569.2,810.5 1570.6,810.1 1572.6,810.3 1575.3,811.0 1578.8,812.1 1583.3,813.7 1589.1,815.8 1596.8,818.9 1608.1,823.5 1652.5,841.9 1696.9,860.4 1708.1,865.1 1715.7,868.4 1721.3,871.0 1725.6,873.1 1728.8,874.8 1731.1,876.3 1732.6,877.6 1733.2,878.9" fill="#fff"/><polygon points="1731.2,894.3 1730.2,895.2 1728.5,895.2 1725.8,894.7 1722.3,893.7 1717.7,892.2 1712.2,890.1 1705.6,887.5 1697.7,884.3 1687.9,880.2 1670.8,872.9 1653.8,865.6 1644.1,861.3 1636.3,857.8 1629.9,854.8 1624.7,852.2 1620.4,850.0 1617.2,848.2 1615.1,846.7 1613.9,845.5 1613.9,844.3 1614.9,843.4 1616.6,843.5 1619.2,844.0 1622.8,845.1 1627.3,846.6 1632.8,848.7 1639.4,851.2 1647.3,854.4 1657.2,858.5 1674.2,865.7 1691.2,872.9 1701.0,877.2 1708.7,880.6 1715.1,883.6 1720.4,886.2 1724.6,888.4 1727.8,890.3 1730.0,891.8 1731.2,893.0" fill="#fff"/><path d="M298.6 438.3L326.1 439.8L353.6 441.2L381.0 442.6M298.5 439.3L325.9 440.8L353.4 442.2L380.9 443.7M298.3 440.4L325.8 441.9L353.2 443.3L380.7 444.8M298.1 441.5L325.6 443.0L353.1 444.5L380.5 445.9M298.0 442.7L325.4 444.2L352.9 445.6L380.3 447.1M297.8 443.9L325.2 445.4L352.7 446.9L380.1 448.3M297.6 445.1L325.1 446.6L352.5 448.1L379.9 449.6M297.4 446.4L324.9 447.9L352.3 449.4L379.7 450.9M297.2 447.7L324.7 449.2L352.1 450.7L379.5 452.2M297.1 449.0L324.5 450.5L351.9 452.0L379.3 453.6M296.9 450.4L324.3 451.9L351.7 453.4L379.1 454.9M296.7 451.7L324.1 453.3L351.5 454.8L378.9 456.3M296.5 453.1L323.9 454.6L351.3 456.2L378.7 457.7M296.3 454.5L323.7 456.1L351.1 457.6L378.5 459.2M296.1 455.9L323.4 457.5L350.8 459.0L378.2 460.6M295.8 457.3L323.2 458.9L350.6 460.5L378.0 462.1M295.6 458.8L323.0 460.4L350.4 462.0L377.8 463.5M295.4 460.3L322.8 461.8L350.2 463.4L377.5 465.0M295.2 461.7L322.6 463.3L349.9 464.9L377.3 466.5M295.0 463.2L322.4 464.8L349.7 466.4L377.1 468.0M294.8 464.7L322.1 466.3L349.5 467.9L376.8 469.6M294.6 466.2L321.9 467.8L349.3 469.4L376.6 471.1M294.4 467.7L321.7 469.3L349.0 471.0L376.4 472.6M294.1 469.2L321.5 470.8L348.8 472.5L376.1 474.1M293.9 470.6L321.2 472.3L348.6 474.0L375.9 475.7M293.7 472.1L321.0 473.8L348.3 475.5L375.6 477.2M293.5 473.6L320.8 475.3L348.1 477.0L375.4 478.7M293.3 475.1L320.6 476.8L347.9 478.5L375.2 480.2M293.1 476.6L320.4 478.3L347.6 480.0L374.9 481.7M292.9 478.0L320.1 479.7L347.4 481.5L374.7 483.2M292.6 479.5L319.9 481.2L347.2 482.9L374.5 484.7M292.4 480.9L319.7 482.6L347.0 484.4L374.2 486.1M292.2 482.3L319.5 484.1L346.8 485.8L374.0 487.6M292.0 483.7L319.3 485.5L346.5 487.2L373.8 489.0M291.8 485.1L319.1 486.9L346.3 488.6L373.6 490.4M291.6 486.5L318.9 488.2L346.1 490.0L373.4 491.8M291.4 487.8L318.7 489.6L345.9 491.4L373.1 493.2M291.3 489.1L318.5 490.9L345.7 492.7L372.9 494.5M291.1 490.4L318.3 492.2L345.5 494.0L372.7 495.8M290.9 491.6L318.1 493.5L345.3 495.3L372.5 497.1M290.7 492.9L317.9 494.7L345.1 496.5L372.3 498.4M290.5 494.1L317.7 495.9L344.9 497.8L372.1 499.6M290.4 495.2L317.6 497.1L344.8 498.9L372.0 500.8M290.2 496.3L317.4 498.2L344.6 500.1L371.8 501.9M300.0 438.4L291.5 497.1M301.1 438.5L292.6 497.1M302.2 438.5L293.7 497.2M303.4 438.6L294.9 497.3M304.7 438.7L296.2 497.4M306.2 438.7L297.6 497.5M307.7 438.8L299.1 497.6M309.3 438.9L300.7 497.7M311.1 439.0L302.5 497.8M313.0 439.1L304.3 497.9M315.0 439.2L306.3 498.1M317.1 439.3L308.4 498.2M319.4 439.4L310.7 498.4M321.8 439.6L313.1 498.5M324.3 439.7L315.6 498.7M327.0 439.8L318.2 498.9M329.8 440.0L320.9 499.1M332.6 440.1L323.8 499.3M335.5 440.3L326.7 499.5M338.5 440.4L329.6 499.7M341.5 440.6L332.6 499.9M344.5 440.7L335.6 500.1M347.5 440.9L338.5 500.3M350.4 441.1L341.4 500.5M353.3 441.2L344.2 500.7M356.0 441.3L346.9 500.9M358.6 441.5L349.5 501.0M361.1 441.6L352.0 501.2M363.5 441.7L354.3 501.4M365.7 441.8L356.5 501.5M367.8 442.0L358.6 501.7M369.7 442.1L360.5 501.8M371.5 442.2L362.3 501.9M373.2 442.2L363.9 502.0M374.7 442.3L365.4 502.1M376.2 442.4L366.9 502.2M377.5 442.5L368.2 502.3M378.7 442.5L369.4 502.4M387.4 442.1L417.9 444.4L448.4 447.8M387.2 443.1L417.7 445.4L448.3 448.8M387.0 444.1L417.6 446.4L448.1 449.9M386.9 445.2L417.4 447.5L447.9 451.0M386.7 446.3L417.2 448.6L447.7 452.2M386.5 447.4L417.0 449.8L447.5 453.4M386.3 448.6L416.8 451.0L447.3 454.6M386.2 449.8L416.6 452.2L447.0 455.8M386.0 451.0L416.4 453.4L446.8 457.1M385.8 452.2L416.2 454.7L446.6 458.4M385.6 453.4L416.0 456.0L446.4 459.7M385.4 454.7L415.7 457.3L446.1 461.0M385.2 456.0L415.5 458.6L445.9 462.4M385.0 457.3L415.3 459.9L445.7 463.8M384.8 458.6L415.1 461.3L445.4 465.1M384.5 459.9L414.9 462.6L445.2 466.5M384.3 461.3L414.6 464.0L444.9 467.9M384.1 462.6L414.4 465.4L444.7 469.4M383.9 464.0L414.2 466.8L444.4 470.8M383.7 465.3L413.9 468.1L444.2 472.2M383.5 466.7L413.7 469.5L443.9 473.7M383.3 468.1L413.5 471.0L443.7 475.1M383.0 469.5L413.2 472.4L443.4 476.6M382.8 470.8L413.0 473.8L443.2 478.0M382.6 472.2L412.8 475.2L442.9 479.5M382.4 473.6L412.5 476.6L442.7 480.9M382.2 475.0L412.3 478.0L442.4 482.4M381.9 476.4L412.1 479.4L442.2 483.9M381.7 477.8L411.8 480.9L441.9 485.3M381.5 479.1L411.6 482.3L441.7 486.8M381.3 480.5L411.3 483.7L441.4 488.2M381.1 481.9L411.1 485.1L441.2 489.6M380.9 483.2L410.9 486.5L440.9 491.1M380.6 484.6L410.7 487.8L440.7 492.5M380.4 485.9L410.4 489.2L440.4 493.9M380.2 487.3L410.2 490.6L440.2 495.3M380.0 488.6L410.0 491.9L439.9 496.7M379.8 489.9L409.7 493.3L439.7 498.1M379.6 491.2L409.5 494.6L439.5 499.4M379.4 492.5L409.3 495.9L439.2 500.8M379.2 493.7L409.1 497.2L439.0 502.1M379.0 494.9L408.9 498.4L438.8 503.4M378.8 496.2L408.7 499.7L438.5 504.7M378.6 497.4L408.5 500.9L438.3 505.9M378.4 498.5L408.3 502.1L438.1 507.2M378.3 499.7L408.1 503.3L437.9 508.4M378.1 500.8L407.9 504.4L437.7 509.5M377.9 501.9L407.7 505.5L437.5 510.7M377.7 502.9L407.5 506.6L437.3 511.8M388.8 442.2L379.2 503.1M389.9 442.3L380.2 503.1M391.8 442.4L382.1 503.3M394.5 442.5L384.7 503.4M397.7 442.7L387.8 503.7M401.4 442.9L391.4 503.9M405.6 443.3L395.5 504.6M410.1 443.7L399.9 505.3M414.9 444.2L404.6 506.1M419.9 444.6L409.5 507.0M424.8 445.0L414.3 507.8M429.7 445.5L419.0 508.6M434.3 445.9L423.5 509.4M438.4 446.3L427.6 510.1M442.1 446.9L431.1 510.7M445.2 447.3L434.1 511.3M436.2 445.2L465.6 449.5L495.0 454.4L524.4 460.9L553.8 468.5L583.2 476.7M436.0 446.1L465.4 450.5L494.8 455.4L524.2 461.8L553.6 469.4L583.0 477.6M435.8 447.2L465.2 451.5L494.6 456.4L524.0 462.9L553.3 470.4L582.7 478.6M435.6 448.3L465.0 452.6L494.4 457.5L523.7 463.9L553.1 471.4L582.5 479.6M435.4 449.4L464.8 453.7L494.2 458.7L523.5 465.0L552.9 472.5L582.2 480.6M435.2 450.6L464.6 454.9L493.9 459.8L523.3 466.2L552.6 473.6L582.0 481.7M435.0 451.8L464.4 456.1L493.7 461.0L523.0 467.4L552.4 474.8L581.7 482.8M434.8 453.0L464.1 457.4L493.5 462.3L522.8 468.6L552.1 476.0L581.4 484.0M434.6 454.2L463.9 458.7L493.2 463.6L522.5 469.9L551.8 477.2L581.1 485.1M434.4 455.5L463.7 460.0L493.0 464.9L522.3 471.2L551.5 478.4L580.8 486.3M434.2 456.9L463.4 461.3L492.7 466.2L522.0 472.5L551.3 479.7L580.5 487.6M433.9 458.2L463.2 462.7L492.5 467.6L521.7 473.8L551.0 481.0L580.2 488.8M433.7 459.6L462.9 464.1L492.2 469.0L521.4 475.2L550.7 482.3L579.9 490.1M433.5 461.0L462.7 465.5L491.9 470.4L521.1 476.6L550.4 483.7L579.6 491.4M433.2 462.4L462.4 466.9L491.6 471.9L520.9 478.0L550.1 485.1L579.3 492.7M433.0 463.9L462.2 468.4L491.4 473.3L520.6 479.5L549.7 486.4L578.9 494.1M432.7 465.3L461.9 469.9L491.1 474.8L520.3 480.9L549.4 487.9L578.6 495.5M432.5 466.8L461.6 471.4L490.8 476.3L519.9 482.4L549.1 489.3L578.3 496.8M432.2 468.3L461.4 472.9L490.5 477.9L519.6 483.9L548.8 490.7L577.9 498.2M432.0 469.9L461.1 474.5L490.2 479.4L519.3 485.4L548.5 492.2L577.6 499.7M431.7 471.4L460.8 476.0L489.9 481.0L519.0 486.9L548.1 493.7L577.2 501.1M431.4 472.9L460.5 477.6L489.6 482.5L518.7 488.5L547.8 495.2L576.9 502.5M431.2 474.5L460.2 479.1L489.3 484.1L518.4 490.0L547.5 496.7L576.5 504.0M430.9 476.1L460.0 480.7L489.0 485.7L518.1 491.6L547.1 498.2L576.2 505.4M430.6 477.6L459.7 482.3L488.7 487.3L517.7 493.1L546.8 499.7L575.8 506.9M430.4 479.2L459.4 483.9L488.4 488.8L517.4 494.7L546.4 501.2L575.5 508.3M430.1 480.8L459.1 485.5L488.1 490.4L517.1 496.2L546.1 502.7L575.1 509.8M429.8 482.3L458.8 487.1L487.8 492.0L516.8 497.8L545.8 504.2L574.8 511.3M429.6 483.9L458.5 488.6L487.5 493.6L516.5 499.3L545.4 505.7L574.4 512.7M429.3 485.4L458.3 490.2L487.2 495.2L516.2 500.9L545.1 507.2L574.0 514.1M429.0 487.0L458.0 491.8L486.9 496.7L515.8 502.4L544.8 508.6L573.7 515.6M428.8 488.5L457.7 493.3L486.6 498.3L515.5 503.9L544.4 510.1L573.4 517.0M428.5 490.0L457.4 494.8L486.3 499.8L515.2 505.4L544.1 511.6L573.0 518.4M428.3 491.5L457.2 496.3L486.0 501.3L514.9 506.9L543.8 513.0L572.7 519.8M428.0 493.0L456.9 497.8L485.8 502.8L514.6 508.4L543.5 514.4L572.3 521.2M427.8 494.4L456.6 499.3L485.5 504.3L514.3 509.8L543.2 515.8L572.0 522.5M427.5 495.9L456.4 500.7L485.2 505.7L514.0 511.3L542.9 517.2L571.7 523.8M427.3 497.3L456.1 502.2L484.9 507.2L513.7 512.7L542.5 518.5L571.4 525.2M427.1 498.6L455.9 503.6L484.7 508.6L513.5 514.0L542.2 519.9L571.0 526.4M426.8 500.0L455.6 504.9L484.4 509.9L513.2 515.4L542.0 521.2L570.7 527.7M426.6 501.3L455.4 506.3L484.1 511.3L512.9 516.7L541.7 522.5L570.4 528.9M426.4 502.6L455.1 507.6L483.9 512.6L512.6 518.0L541.4 523.7L570.1 530.2M426.2 503.9L454.9 508.9L483.6 513.9L512.4 519.3L541.1 524.9L569.9 531.3M426.0 505.1L454.7 510.1L483.4 515.1L512.1 520.5L540.9 526.1L569.6 532.5M425.8 506.3L454.5 511.3L483.2 516.3L511.9 521.7L540.6 527.3L569.3 533.6M425.6 507.5L454.3 512.5L482.9 517.5L511.6 522.8L540.3 528.4L569.0 534.7M425.4 508.6L454.0 513.7L482.7 518.7L511.4 524.0L540.1 529.5L568.8 535.7M425.2 509.7L453.9 514.7L482.5 519.7L511.2 525.0L539.9 530.5L568.5 536.7M437.6 445.3L426.5 510.8M438.7 445.4L427.5 511.0M439.9 445.6L428.7 511.2M441.2 445.8L429.9 511.4M442.6 446.0L431.3 511.6M444.1 446.3L432.8 511.9M445.6 446.5L434.3 512.2M447.2 446.7L435.8 512.5M448.9 447.0L437.5 512.8M450.7 447.3L439.2 513.1M452.5 447.5L441.0 513.4M454.4 447.8L442.8 513.7M456.3 448.1L444.7 514.0M458.3 448.4L446.6 514.4M460.4 448.7L448.6 514.7M462.5 449.0L450.7 515.1M464.6 449.3L452.8 515.4M466.8 449.7L454.9 515.8M469.1 450.0L457.1 516.2M471.4 450.4L459.4 516.6M473.7 450.7L461.6 517.0M476.1 451.1L464.0 517.4M478.5 451.4L466.3 517.8M481.0 451.8L468.7 518.2M483.5 452.2L471.2 518.6M486.0 452.6L473.6 519.0M488.6 453.0L476.1 519.5M491.1 453.6L478.6 519.9M493.8 454.1L481.2 520.4M496.4 454.7L483.7 520.9M499.0 455.3L486.3 521.3M501.7 455.9L488.9 521.8M504.4 456.5L491.5 522.3M507.1 457.1L494.2 522.8M509.8 457.6L496.8 523.2M512.5 458.2L499.4 523.7M515.1 458.8L502.0 524.2M517.8 459.4L504.6 524.7M520.5 460.0L507.3 525.2M523.2 460.6L509.8 525.7M525.8 461.2L512.4 526.1M528.5 461.8L515.0 526.6M531.1 462.3L517.5 527.1M533.6 462.9L520.1 527.5M536.2 463.5L522.6 528.0M538.7 464.1L525.0 528.5M541.2 464.8L527.4 528.9M543.7 465.5L529.8 529.4M546.1 466.2L532.2 529.9M548.5 466.9L534.5 530.3M550.8 467.6L536.8 530.7M553.1 468.3L539.0 531.2M555.3 468.9L541.2 531.6M557.5 469.6L543.3 532.0M559.7 470.2L545.4 532.4M561.7 470.8L547.4 532.8M563.8 471.4L549.4 533.2M565.7 472.0L551.3 533.6M567.6 472.5L553.2 533.9M569.5 473.1L555.0 534.3M571.3 473.6L556.7 534.6M573.0 474.1L558.4 535.0M574.7 474.6L560.0 535.4M576.2 475.1L561.6 535.8M577.7 475.5L563.0 536.2M579.2 475.9L564.4 536.6M580.5 476.1L565.7 536.9M608.8 482.9L642.9 490.0L677.0 497.3L711.1 504.3M608.5 483.8L642.6 491.0L676.7 498.3L710.7 505.3M608.3 484.8L642.3 492.0L676.3 499.4L710.4 506.4M608.0 486.0L641.9 493.3L675.9 500.7L709.9 507.6M607.6 487.4L641.6 494.6L675.5 502.0L709.5 509.0M607.3 488.6L641.2 495.9L675.1 503.4L709.0 510.3M607.0 489.8L640.8 497.1L674.7 504.6L708.6 511.5M610.3 483.2L608.4 490.6M611.4 483.4L609.4 490.8M612.5 483.6L610.6 491.1M613.8 483.9L611.8 491.3M615.2 484.2L613.2 491.6M616.6 484.5L614.6 491.9M618.1 484.8L616.1 492.2M619.6 485.1L617.6 492.6M621.3 485.5L619.2 492.9M623.0 485.8L620.9 493.3M624.7 486.2L622.7 493.7M626.5 486.6L624.5 494.1M628.4 487.0L626.3 494.5M630.4 487.4L628.3 494.9M632.4 487.8L630.2 495.3M634.4 488.2L632.3 495.7M636.5 488.7L634.4 496.2M638.7 489.1L636.5 496.7M640.9 489.6L638.7 497.1M643.1 490.1L640.9 497.6M645.4 490.6L643.2 498.1M647.7 491.1L645.5 498.6M650.0 491.6L647.8 499.1M652.4 492.1L650.2 499.7M654.8 492.6L652.5 500.2M657.2 493.1L654.9 500.7M659.6 493.6L657.3 501.2M662.0 494.1L659.7 501.8M664.4 494.6L662.1 502.3M666.8 495.2L664.5 502.8M669.2 495.7L666.8 503.3M671.6 496.2L669.2 503.9M673.9 496.7L671.5 504.4M676.2 497.2L673.8 504.9M678.5 497.7L676.1 505.4M680.8 498.1L678.3 505.9M683.0 498.6L680.5 506.4M685.2 499.1L682.7 506.8M687.3 499.5L684.8 507.3M689.3 500.0L686.8 507.7M691.3 500.4L688.8 508.1M693.3 500.8L690.7 508.5M695.1 501.1L692.6 508.9M697.0 501.5L694.4 509.2M698.7 501.9L696.2 509.6M700.4 502.2L697.8 509.9M702.0 502.5L699.4 510.2M703.6 502.8L701.0 510.5M705.1 503.1L702.4 510.8M706.5 503.4L703.8 511.1M707.8 503.7L705.1 511.3M709.0 503.9L706.4 511.6M595.6 485.3L623.6 491.2L651.6 497.3L679.6 503.4L707.6 509.1L735.6 514.6L763.6 521.2L791.6 527.9M595.4 486.2L623.3 492.1L651.3 498.2L679.3 504.3L707.3 510.0L735.2 515.6L763.2 522.1L791.2 528.7M595.1 487.1L623.1 493.1L651.0 499.2L679.0 505.3L706.9 511.0L734.9 516.5L762.8 523.0L790.8 529.6M594.9 488.0L622.8 494.0L650.7 500.1L678.7 506.3L706.6 511.9L734.5 517.5L762.5 523.9L790.4 530.5M594.6 489.0L622.5 495.0L650.5 501.1L678.4 507.3L706.3 512.9L734.2 518.4L762.1 524.8L790.0 531.4M594.4 489.9L622.3 496.0L650.2 502.1L678.0 508.3L705.9 514.0L733.8 519.4L761.7 525.8L789.5 532.3M594.1 491.0L622.0 497.0L649.8 503.2L677.7 509.4L705.5 515.0L733.4 520.5L761.2 526.8L789.1 533.3M593.9 492.0L621.7 498.1L649.5 504.3L677.3 510.5L705.2 516.1L733.0 521.5L760.8 527.8L788.6 534.3M593.6 493.1L621.4 499.2L649.2 505.4L677.0 511.6L704.8 517.2L732.6 522.6L760.4 528.9L788.2 535.3M593.3 494.2L621.1 500.3L648.8 506.5L676.6 512.8L704.4 518.4L732.1 523.8L759.9 530.0L787.7 536.4M593.0 495.4L620.8 501.5L648.5 507.7L676.2 514.0L704.0 519.6L731.7 525.0L759.4 531.1L787.2 537.5M592.7 496.6L620.4 502.7L648.1 509.0L675.8 515.3L703.5 520.9L731.2 526.2L758.9 532.3L786.6 538.7M592.4 497.8L620.1 504.0L647.7 510.3L675.4 516.6L703.1 522.2L730.7 527.5L758.4 533.5L786.1 539.9M592.1 499.1L619.7 505.3L647.3 511.6L675.0 518.0L702.6 523.5L730.2 528.8L757.9 534.8L785.5 541.1M591.7 500.4L619.3 506.7L646.9 513.0L674.5 519.4L702.1 524.9L729.7 530.2L757.3 536.1L784.9 542.4M591.4 501.8L619.0 508.1L646.5 514.4L674.1 520.8L701.6 526.4L729.2 531.6L756.7 537.5L784.3 543.7M591.0 503.3L618.6 509.5L646.1 515.9L673.6 522.3L701.1 527.8L728.6 533.0L756.1 538.9L783.7 545.1M590.7 504.7L618.1 511.0L645.6 517.4L673.1 523.9L700.6 529.4L728.1 534.5L755.5 540.4L783.0 546.5M590.3 506.2L617.7 512.6L645.2 519.0L672.6 525.5L700.0 531.0L727.5 536.1L754.9 541.8L782.4 547.9M589.9 507.8L617.3 514.1L644.7 520.6L672.1 527.1L699.5 532.6L726.9 537.7L754.3 543.4L781.7 549.4M589.5 509.4L616.9 515.7L644.2 522.2L671.6 528.7L698.9 534.2L726.3 539.3L753.6 544.9L781.0 550.9M589.1 511.0L616.4 517.4L643.7 523.9L671.0 530.4L698.3 535.9L725.6 540.9L753.0 546.5L780.3 552.4M588.7 512.6L616.0 519.0L643.2 525.5L670.5 532.1L697.8 537.6L725.0 542.5L752.3 548.1L779.6 554.0M588.3 514.2L615.5 520.7L642.7 527.2L669.9 533.8L697.2 539.3L724.4 544.2L751.6 549.7L778.8 555.5M587.9 515.8L615.0 522.3L642.2 528.9L669.4 535.5L696.6 541.0L723.8 545.9L750.9 551.3L778.1 557.1M587.5 517.4L614.6 524.0L641.7 530.6L668.9 537.2L696.0 542.6L723.1 547.5L750.3 552.9L777.4 558.6M587.1 519.0L614.1 525.6L641.2 532.2L668.3 538.9L695.4 544.3L722.5 549.1L749.6 554.4L776.7 560.2M586.7 520.6L613.7 527.2L640.8 533.9L667.8 540.6L694.9 546.0L721.9 550.8L749.0 556.0L776.0 561.7M586.3 522.2L613.3 528.8L640.3 535.5L667.3 542.2L694.3 547.6L721.3 552.3L748.3 557.5L775.3 563.1M585.9 523.7L612.9 530.3L639.8 537.0L666.8 543.8L693.8 549.1L720.7 553.9L747.7 559.0L774.7 564.6M585.5 525.1L612.4 531.8L639.4 538.5L666.3 545.3L693.2 550.7L720.2 555.4L747.1 560.5L774.0 566.0M585.2 526.6L612.0 533.2L638.9 540.0L665.8 546.8L692.7 552.2L719.6 556.8L746.5 561.9L773.4 567.4M584.8 527.9L611.7 534.6L638.5 541.4L665.4 548.3L692.2 553.6L719.1 558.2L745.9 563.2L772.8 568.7M584.5 529.3L611.3 536.0L638.1 542.8L664.9 549.7L691.7 555.0L718.6 559.6L745.4 564.5L772.2 569.9M584.1 530.6L610.9 537.3L637.7 544.1L664.5 551.0L691.3 556.3L718.1 560.9L744.8 565.8L771.6 571.2M583.8 531.8L610.6 538.5L637.3 545.4L664.1 552.3L690.8 557.6L717.6 562.2L744.3 567.0L771.1 572.4M583.5 533.0L610.3 539.8L637.0 546.6L663.7 553.6L690.4 558.9L717.1 563.4L743.8 568.2L770.6 573.5M583.2 534.1L609.9 540.9L636.6 547.8L663.3 554.8L690.0 560.1L716.7 564.6L743.4 569.3L770.1 574.6M583.0 535.2L609.6 542.1L636.3 549.0L662.9 556.0L689.6 561.2L716.3 565.7L742.9 570.4L769.6 575.6M582.7 536.3L609.3 543.1L636.0 550.1L662.6 557.1L689.2 562.3L715.8 566.8L742.5 571.4L769.1 576.7M582.4 537.3L609.0 544.2L635.6 551.1L662.2 558.2L688.8 563.4L715.4 567.8L742.0 572.5L768.6 577.7M582.2 538.3L608.8 545.2L635.3 552.2L661.9 559.2L688.5 564.4L715.1 568.8L741.6 573.4L768.2 578.6M581.9 539.3L608.5 546.2L635.0 553.2L661.6 560.2L688.1 565.4L714.7 569.8L741.2 574.4L767.8 579.5M581.7 540.2L608.2 547.1L634.7 554.2L661.3 561.2L687.8 566.4L714.3 570.8L740.8 575.3L767.4 580.4M581.5 541.2L608.0 548.1L634.5 555.1L661.0 562.2L687.5 567.4L714.0 571.7L740.5 576.2L767.0 581.3M597.1 485.6L582.8 541.9M598.1 485.8L583.8 542.2M599.3 486.1L584.9 542.5M600.6 486.3L586.1 542.8M602.0 486.6L587.4 543.1M603.4 486.9L588.7 543.5M604.8 487.2L590.1 543.8M606.4 487.6L591.6 544.2M608.0 487.9L593.1 544.6M609.6 488.2L594.6 545.0M611.3 488.6L596.2 545.4M613.0 489.0L597.9 545.8M614.8 489.3L599.5 546.3M616.6 489.7L601.3 546.7M618.5 490.1L603.0 547.2M620.4 490.5L604.8 547.7M622.4 491.0L606.7 548.2M624.4 491.4L608.6 548.7M626.4 491.8L610.5 549.2M628.5 492.3L612.5 549.7M630.6 492.7L614.5 550.2M632.8 493.2L616.6 550.8M635.0 493.7L618.6 551.3M637.2 494.1L620.8 551.9M639.5 494.6L622.9 552.5M641.8 495.1L625.1 553.0M644.2 495.7L627.3 553.6M646.5 496.2L629.6 554.2M648.9 496.7L631.8 554.8M651.4 497.2L634.1 555.5M653.8 497.8L636.5 556.1M656.3 498.3L638.8 556.7M658.9 498.9L641.2 557.4M661.4 499.4L643.6 558.0M664.0 500.0L646.1 558.7M666.6 500.5L648.5 559.3M669.2 501.1L651.0 560.0M671.8 501.7L653.4 560.6M674.4 502.3L655.9 561.3M677.1 502.8L658.4 562.0M679.7 503.4L661.0 562.6M682.4 504.0L663.5 563.3M685.1 504.6L666.0 564.0M687.8 505.2L668.6 564.7M690.5 505.7L671.1 565.2M693.2 506.3L673.7 565.6M695.9 506.8L676.3 566.0M698.6 507.3L678.8 566.4M701.3 507.8L681.4 566.8M704.0 508.4L683.9 567.2M706.7 508.9L686.4 567.7M709.4 509.4L689.0 568.1M712.0 509.9L691.5 568.5M714.7 510.5L694.0 568.9M717.3 511.0L696.5 569.3M720.0 511.5L699.0 569.7M722.6 512.0L701.5 570.1M725.2 512.5L703.9 570.5M727.7 513.0L706.4 570.9M730.3 513.5L708.8 571.3M732.8 514.0L711.2 571.7M735.3 514.6L713.5 572.1M737.8 515.2L715.9 572.5M740.2 515.7L718.2 572.9M742.6 516.3L720.4 573.3M745.0 516.8L722.7 573.6M747.4 517.4L724.9 574.0M749.7 517.9L727.1 574.4M751.9 518.5L729.3 574.8M754.2 519.0L731.4 575.1M756.4 519.5L733.5 575.5M758.6 520.0L735.5 575.8M760.7 520.5L737.5 576.2M762.8 521.0L739.5 576.5M764.8 521.5L741.5 576.8M766.8 521.9L743.3 577.1M768.8 522.4L745.2 577.5M770.7 522.9L747.0 577.8M772.6 523.3L748.8 578.2M774.4 523.7L750.5 578.5M776.2 524.2L752.2 578.9M777.9 524.6L753.8 579.2M779.6 525.0L755.4 579.5M781.2 525.4L756.9 579.8M782.8 525.7L758.4 580.1M784.3 526.1L759.8 580.3M785.7 526.5L761.2 580.6M787.1 526.8L762.5 580.9M788.4 527.1L763.8 581.1M789.7 527.4L764.9 581.3M787.3 534.6L795.4 536.5L803.4 538.4M786.9 535.5L795.0 537.4L803.0 539.3M786.5 536.4L794.5 538.3L802.6 540.1M786.1 537.3L794.1 539.2L802.2 541.0M785.6 538.2L793.7 540.1L801.7 541.9M785.2 539.2L793.2 541.0L801.3 542.9M784.8 540.1L792.8 542.0L800.8 543.8M784.3 541.1L792.3 543.0L800.3 544.8M783.8 542.2L791.8 544.0L799.8 545.8M783.4 543.2L791.4 545.0L799.3 546.8M782.9 544.2L790.9 546.0L798.8 547.9M782.4 545.3L790.4 547.1L798.3 548.9M781.9 546.4L789.9 548.2L797.8 550.0M781.4 547.5L789.3 549.3L797.3 551.1M780.9 548.6L788.8 550.4L796.8 552.1M780.4 549.7L788.3 551.5L796.2 553.2M779.8 550.8L787.8 552.6L795.7 554.3M779.3 552.0L787.2 553.7L795.2 555.4M778.8 553.1L786.7 554.8L794.6 556.6M778.3 554.2L786.2 555.9L794.1 557.7M777.8 555.3L785.7 557.0L793.6 558.7M777.3 556.4L785.2 558.1L793.1 559.8M776.8 557.5L784.7 559.2L792.5 560.9M776.3 558.6L784.2 560.3L792.0 562.0M775.8 559.6L783.7 561.3L791.5 563.0M775.3 560.7L783.2 562.4L791.0 564.0M774.8 561.7L782.7 563.4L790.5 565.0M774.4 562.7L782.2 564.4L790.1 566.0M773.9 563.7L781.8 565.3L789.6 567.0M773.5 564.6L781.3 566.3L789.1 567.9M773.1 565.6L780.9 567.2L788.7 568.8M772.7 566.5L780.5 568.1L788.3 569.7M772.2 567.4L780.0 569.0L787.8 570.6M788.8 535.0L773.7 567.7M789.8 535.2L774.7 567.9M791.1 535.5L775.9 568.2M792.7 535.9L777.4 568.5M794.5 536.3L779.1 568.9M796.4 536.8L781.0 569.3M798.4 537.2L782.9 569.7M800.1 537.6L784.6 570.0M801.6 538.0L786.0 570.3M834.1 532.1L859.8 538.2L885.6 544.3L911.3 550.4L937.0 556.7L962.8 563.4M833.6 533.1L859.4 539.1L885.1 545.2L910.9 551.4L936.6 557.6L962.4 564.3M833.1 534.2L858.9 540.2L884.6 546.3L910.4 552.5L936.1 558.7L961.9 565.4M832.5 535.4L858.3 541.4L884.0 547.5L909.8 553.7L935.6 559.9L961.3 566.7M831.8 536.8L857.6 542.8L883.4 548.9L909.2 555.1L934.9 561.3L960.7 568.1M831.1 538.3L856.9 544.2L882.7 550.3L908.5 556.5L934.3 562.7L960.1 569.5M830.5 539.6L856.3 545.5L882.1 551.6L907.9 557.8L933.7 564.1L959.5 570.8M829.9 540.8L855.7 546.8L881.5 552.8L907.3 559.0L933.1 565.3L958.9 572.0M835.4 532.5L831.1 541.5M836.4 532.7L832.1 541.8M837.5 533.0L833.2 542.0M838.7 533.2L834.4 542.3M839.9 533.5L835.6 542.6M841.2 533.8L836.8 542.9M842.5 534.1L838.2 543.2M843.9 534.4L839.5 543.5M845.3 534.8L841.0 543.8M846.7 535.1L842.4 544.1M848.2 535.5L843.9 544.5M849.8 535.8L845.5 544.8M851.4 536.2L847.1 545.2M853.0 536.6L848.7 545.6M854.7 537.0L850.4 545.9M856.4 537.4L852.1 546.3M858.1 537.8L853.8 546.7M859.9 538.2L855.6 547.2M861.8 538.6L857.5 547.6M863.6 539.0L859.3 548.0M865.5 539.5L861.2 548.4M867.4 539.9L863.2 548.9M869.4 540.4L865.1 549.3M871.4 540.9L867.1 549.8M873.4 541.4L869.2 550.3M875.5 541.8L871.2 550.8M877.5 542.3L873.3 551.3M879.6 542.8L875.4 551.8M881.8 543.4L877.5 552.3M883.9 543.9L879.7 552.8M886.1 544.4L881.8 553.3M888.2 544.9L884.0 553.9M890.4 545.4L886.2 554.4M892.6 546.0L888.4 554.9M894.8 546.5L890.6 555.4M897.0 547.0L892.8 556.0M899.2 547.5L895.1 556.5M901.5 548.1L897.3 557.0M903.7 548.6L899.5 557.6M905.9 549.1L901.7 558.1M908.1 549.7L903.9 558.6M910.3 550.2L906.1 559.2M912.4 550.7L908.3 559.7M914.6 551.2L910.5 560.2M916.7 551.7L912.6 560.7M918.9 552.3L914.7 561.2M921.0 552.8L916.8 561.8M923.0 553.3L918.9 562.3M925.1 553.8L921.0 562.8M927.1 554.2L923.0 563.2M929.1 554.7L925.0 563.7M931.1 555.2L927.0 564.2M933.0 555.7L928.9 564.7M934.9 556.1L930.8 565.1M936.8 556.6L932.7 565.6M938.6 557.1L934.6 566.1M940.4 557.5L936.3 566.5M942.2 558.0L938.1 567.0M943.9 558.4L939.8 567.5M945.5 558.9L941.5 567.9M947.2 559.3L943.1 568.3M948.8 559.7L944.7 568.7M950.3 560.1L946.3 569.1M951.8 560.5L947.8 569.5M953.2 560.9L949.2 569.9M954.6 561.3L950.6 570.3M956.0 561.6L952.0 570.6M957.3 562.0L953.3 571.0M958.6 562.3L954.6 571.3M959.8 562.6L955.8 571.6M960.9 562.9L956.9 571.9M811.4 536.9L836.3 542.7L861.2 548.4L886.1 554.3L910.9 560.3L935.8 566.4L960.7 572.9M811.0 537.8L835.9 543.6L860.7 549.3L885.6 555.2L910.5 561.2L935.4 567.3L960.3 573.8M810.5 538.8L835.4 544.6L860.3 550.3L885.2 556.2L910.1 562.2L935.0 568.3L959.9 574.7M810.0 539.7L834.9 545.6L859.8 551.2L884.7 557.1L909.6 563.2L934.5 569.2L959.4 575.7M809.5 540.8L834.4 546.6L859.4 552.2L884.3 558.2L909.2 564.2L934.1 570.3L959.0 576.7M809.0 541.9L833.9 547.7L858.8 553.3L883.8 559.2L908.7 565.2L933.6 571.3L958.5 577.8M808.5 543.0L833.4 548.8L858.3 554.4L883.2 560.3L908.2 566.3L933.1 572.4L958.0 578.9M807.9 544.2L832.8 550.0L857.8 555.6L882.7 561.5L907.6 567.5L932.6 573.6L957.5 580.1M807.3 545.5L832.2 551.2L857.2 556.8L882.1 562.7L907.1 568.7L932.0 574.8L957.0 581.3M806.7 546.8L831.6 552.5L856.6 558.1L881.5 564.0L906.5 570.0L931.4 576.1L956.4 582.6M806.0 548.1L831.0 553.8L855.9 559.4L880.9 565.3L905.9 571.4L930.8 577.5L955.8 583.9M805.3 549.6L830.3 555.3L855.3 560.8L880.2 566.7L905.2 572.8L930.2 578.9L955.2 585.3M804.6 551.1L829.6 556.7L854.6 562.3L879.5 568.2L904.5 574.2L929.5 580.4L954.5 586.8M803.8 552.6L828.8 558.3L853.8 563.8L878.8 569.7L903.8 575.8L928.8 581.9L953.8 588.3M803.1 554.3L828.1 559.9L853.1 565.3L878.1 571.3L903.1 577.3L928.1 583.5L953.1 589.9M802.3 555.9L827.3 561.5L852.3 567.0L877.3 572.9L902.4 579.0L927.4 585.1L952.4 591.5M801.4 557.6L826.5 563.2L851.5 568.6L876.6 574.6L901.6 580.6L926.6 586.8L951.7 593.2M800.6 559.4L825.7 564.9L850.7 570.3L875.8 576.3L900.8 582.3L925.9 588.5L950.9 594.9M799.8 561.1L824.8 566.6L849.9 572.0L875.0 578.0L900.0 584.1L925.1 590.2L950.1 596.6M798.9 562.9L824.0 568.4L849.1 573.7L874.1 579.7L899.2 585.8L924.3 591.9L949.4 598.3M798.1 564.6L823.2 570.1L848.2 575.5L873.3 581.4L898.4 587.5L923.5 593.7L948.6 600.0M797.2 566.4L822.3 571.8L847.4 577.2L872.5 583.1L897.6 589.2L922.8 595.4L947.9 601.7M796.4 568.1L821.5 573.5L846.6 578.8L871.8 584.8L896.9 590.9L922.0 597.0L947.1 603.4M795.6 569.8L820.7 575.1L845.9 580.4L871.0 586.4L896.1 592.5L921.3 598.7L946.4 605.0M794.8 571.4L820.0 576.7L845.1 582.0L870.2 588.0L895.4 594.1L920.5 600.3L945.7 606.6M794.1 573.0L819.2 578.3L844.4 583.6L869.5 589.5L894.7 595.6L919.8 601.8L945.0 608.1M793.3 574.5L818.5 579.8L843.7 585.0L868.8 591.0L894.0 597.1L919.2 603.3L944.3 609.6M792.6 575.9L817.8 581.2L843.0 586.4L868.2 592.4L893.4 598.5L918.5 604.7L943.7 611.0M792.0 577.3L817.2 582.6L842.4 587.8L867.5 593.7L892.7 599.9L917.9 606.1L943.1 612.4M791.4 578.6L816.6 583.8L841.7 589.0L866.9 595.0L892.1 601.2L917.3 607.3L942.5 613.6M790.8 579.8L816.0 585.1L841.2 590.3L866.4 596.2L891.6 602.4L916.8 608.6L942.0 614.9M790.2 581.0L815.4 586.2L840.6 591.4L865.8 597.4L891.0 603.5L916.3 609.7L941.5 616.0M789.6 582.2L814.9 587.4L840.1 592.5L865.3 598.5L890.5 604.6L915.8 610.8L941.0 617.1M789.1 583.2L814.4 588.4L839.6 593.6L864.8 599.5L890.1 605.7L915.3 611.9L940.5 618.2M788.6 584.3L813.9 589.4L839.1 594.6L864.4 600.5L889.6 606.7L914.8 612.9L940.1 619.2M788.2 585.2L813.4 590.4L838.7 595.5L863.9 601.5L889.2 607.7L914.4 613.9L939.6 620.1M812.8 537.2L789.2 586.1M813.8 537.4L790.3 586.3M815.0 537.7L791.5 586.6M816.2 538.0L792.7 586.8M817.6 538.3L794.1 587.1M819.0 538.7L795.5 587.4M820.5 539.0L797.1 587.7M822.0 539.4L798.6 588.0M823.6 539.8L800.3 588.4M825.3 540.2L802.0 588.7M827.0 540.6L803.7 589.1M828.8 541.0L805.5 589.4M830.7 541.4L807.4 589.8M832.6 541.9L809.3 590.2M834.5 542.3L811.3 590.6M836.5 542.8L813.3 591.0M838.6 543.2L815.4 591.5M840.7 543.7L817.5 591.9M842.8 544.2L819.7 592.3M845.0 544.7L821.9 592.8M847.2 545.2L824.2 593.2M849.5 545.7L826.5 593.7M851.8 546.3L828.8 594.2M854.1 546.8L831.2 594.7M856.5 547.4L833.6 595.1M858.9 547.9L836.1 595.6M861.4 548.5L838.6 596.1M863.8 549.0L841.1 596.7M866.3 549.6L843.6 597.2M868.9 550.2L846.2 597.8M871.4 550.8L848.7 598.4M874.0 551.4L851.3 599.0M876.5 552.0L853.9 599.7M879.1 552.7L856.6 600.3M881.7 553.3L859.2 601.0M884.3 553.9L861.8 601.6M886.9 554.5L864.5 602.3M889.5 555.2L867.1 602.9M892.1 555.8L869.8 603.6M894.7 556.4L872.4 604.2M897.3 557.0L875.0 604.9M899.9 557.7L877.7 605.5M902.4 558.3L880.3 606.1M905.0 558.9L882.8 606.8M907.5 559.5L885.4 607.4M910.0 560.1L887.9 608.0M912.5 560.7L890.5 608.6M914.9 561.3L892.9 609.3M917.4 561.9L895.4 609.9M919.8 562.5L897.8 610.4M922.1 563.0L900.2 611.0M924.4 563.6L902.6 611.6M926.7 564.1L904.9 612.2M928.9 564.7L907.1 612.7M931.1 565.2L909.4 613.3M933.3 565.7L911.5 613.8M935.4 566.3L913.7 614.3M937.4 566.8L915.8 614.9M939.4 567.4L917.8 615.4M941.4 567.9L919.8 615.9M943.3 568.4L921.7 616.3M945.1 568.8L923.6 616.8M946.9 569.3L925.4 617.3M948.6 569.7L927.1 617.7M950.3 570.2L928.8 618.1M951.9 570.6L930.5 618.5M953.5 571.0L932.0 618.9M954.9 571.4L933.5 619.3M956.3 571.7L934.9 619.6M957.6 572.1L936.3 620.0M958.9 572.4L937.5 620.3M963.7 568.7L977.1 572.4L990.6 576.2M963.3 569.6L976.7 573.3L990.2 577.1M962.8 570.5L976.3 574.3L989.8 578.1M962.4 571.5L975.9 575.3L989.3 579.2M961.9 572.6L975.4 576.4L988.9 580.3M961.4 573.8L974.9 577.6L988.4 581.5M960.9 575.0L974.3 578.8L987.8 582.7M960.3 576.2L973.8 580.1L987.3 584.0M959.7 577.6L973.2 581.4L986.7 585.4M959.1 578.9L972.6 582.8L986.1 586.8M958.4 580.4L972.0 584.3L985.5 588.3M957.8 581.9L971.3 585.8L984.8 589.8M957.1 583.4L970.6 587.3L984.2 591.4M956.4 584.9L970.0 588.9L983.5 593.0M955.7 586.4L969.3 590.4L982.8 594.6M955.1 588.0L968.6 592.0L982.1 596.1M954.4 589.5L967.9 593.5L981.5 597.7M953.7 591.0L967.3 595.0L980.8 599.2M953.1 592.4L966.6 596.5L980.2 600.7M952.5 593.8L966.0 597.9L979.6 602.2M951.9 595.2L965.4 599.2L979.0 603.5M951.3 596.4L964.9 600.5L978.5 604.8M950.8 597.6L964.3 601.8L977.9 606.1M950.2 598.8L963.8 602.9L977.4 607.3M949.8 599.8L963.4 604.0L977.0 608.4M949.3 600.9L962.9 605.0L976.5 609.4M965.0 569.0L950.4 601.9M966.0 569.3L951.4 602.1M967.2 569.6L952.6 602.5M968.5 570.0L953.9 602.9M970.1 570.4L955.5 603.4M971.8 570.9L957.3 604.0M973.8 571.4L959.2 604.6M975.9 572.0L961.4 605.3M978.1 572.7L963.6 606.0M980.3 573.3L965.8 606.7M982.4 573.9L967.9 607.4M984.3 574.4L969.9 608.1M986.1 574.9L971.7 608.6M987.6 575.4L973.2 609.1M988.8 575.7L974.4 609.5M946.4 602.5L958.6 606.1L970.7 610.1M946.0 603.4L958.2 607.0L970.3 611.0M945.5 604.5L957.7 608.1L969.8 612.1M945.0 605.7L957.2 609.3L969.3 613.3M944.4 607.1L956.5 610.7L968.7 614.8M943.7 608.6L955.9 612.2L968.1 616.3M943.0 610.1L955.2 613.8L967.4 617.9M942.4 611.6L954.5 615.3L966.7 619.4M941.8 613.0L953.9 616.6L966.1 620.8M941.2 614.1L953.4 617.8L965.6 621.9M947.8 602.9L942.4 614.8M948.8 603.1L943.5 615.1M950.0 603.4L944.7 615.4M951.4 603.8L946.1 615.8M953.0 604.3L947.7 616.3M954.9 604.9L949.6 616.9M957.0 605.6L951.7 617.6M959.2 606.3L953.9 618.4M961.4 607.1L956.1 619.2M963.6 607.7L958.3 619.9M965.5 608.4L960.2 620.5M967.2 608.9L961.9 621.1M968.6 609.4L963.3 621.6M1008.2 572.9L1034.4 580.0L1060.5 587.0L1086.6 594.0L1112.7 600.9L1138.8 607.9L1165.0 616.2L1191.1 624.7M1007.9 573.8L1034.0 580.9L1060.1 588.0L1086.2 594.9L1112.3 601.8L1138.5 608.8L1164.6 617.1L1190.7 625.5M1007.3 575.1L1033.4 582.3L1059.5 589.4L1085.7 596.3L1111.8 603.2L1137.9 610.2L1164.0 618.5L1190.2 626.9M1006.7 576.6L1032.8 583.8L1058.9 590.9L1085.1 597.9L1111.2 604.8L1137.3 611.8L1163.4 620.0L1189.5 628.4M1006.0 578.2L1032.2 585.4L1058.3 592.6L1084.4 599.6L1110.5 606.4L1136.7 613.4L1162.8 621.6L1188.9 630.0M1005.4 579.8L1031.5 587.0L1057.6 594.3L1083.7 601.2L1109.9 608.1L1136.0 615.0L1162.1 623.2L1188.2 631.6M1004.7 581.4L1030.8 588.7L1057.0 595.9L1083.1 602.9L1109.2 609.8L1135.3 616.7L1161.5 624.8L1187.6 633.2M1004.1 582.9L1030.2 590.2L1056.3 597.5L1082.5 604.5L1108.6 611.3L1134.7 618.3L1160.9 626.4L1187.0 634.7M1009.6 573.3L1005.1 584.3M1010.6 573.5L1006.1 584.5M1012.1 573.9L1007.6 585.0M1013.7 574.4L1009.2 585.4M1015.4 574.8L1010.8 585.9M1017.1 575.3L1012.5 586.3M1018.8 575.8L1014.3 586.8M1020.6 576.2L1016.1 587.3M1022.4 576.7L1017.9 587.8M1024.2 577.2L1019.7 588.4M1026.1 577.7L1021.5 588.9M1027.9 578.2L1023.4 589.4M1029.8 578.7L1025.3 589.9M1031.7 579.3L1027.2 590.5M1033.6 579.8L1029.1 591.0M1035.6 580.3L1031.0 591.5M1037.5 580.8L1033.0 592.1M1039.5 581.4L1034.9 592.6M1041.5 581.9L1036.9 593.2M1043.4 582.4L1038.9 593.7M1045.4 583.0L1040.9 594.3M1047.4 583.5L1042.9 594.8M1049.4 584.1L1044.9 595.4M1051.5 584.6L1046.9 596.0M1053.5 585.1L1048.9 596.5M1055.5 585.7L1051.0 597.1M1057.6 586.3L1053.0 597.7M1059.6 586.8L1055.1 598.3M1061.7 587.4L1057.1 598.8M1063.7 587.9L1059.2 599.4M1065.8 588.5L1061.3 600.0M1067.9 589.0L1063.3 600.6M1069.9 589.6L1065.4 601.1M1072.0 590.2L1067.5 601.7M1074.1 590.7L1069.6 602.2M1076.2 591.3L1071.7 602.8M1078.3 591.8L1073.8 603.3M1080.4 592.4L1075.9 603.9M1082.5 592.9L1078.0 604.4M1084.6 593.5L1080.1 605.0M1086.7 594.0L1082.2 605.5M1088.8 594.6L1084.3 606.1M1090.9 595.1L1086.4 606.6M1093.0 595.7L1088.5 607.2M1095.2 596.2L1090.6 607.7M1097.3 596.8L1092.7 608.3M1099.4 597.4L1094.9 608.8M1101.5 597.9L1097.0 609.4M1103.6 598.5L1099.1 610.0M1105.7 599.0L1101.2 610.5M1107.8 599.6L1103.3 611.1M1109.9 600.1L1105.4 611.6M1112.1 600.7L1107.5 612.2M1114.2 601.3L1109.6 612.7M1116.3 601.8L1111.8 613.3M1118.4 602.4L1113.9 613.8M1120.5 602.9L1116.0 614.4M1122.6 603.5L1118.1 614.9M1124.7 604.0L1120.2 615.5M1126.8 604.6L1122.3 616.0M1128.8 605.1L1124.3 616.6M1130.9 605.7L1126.4 617.1M1133.0 606.2L1128.5 617.6M1135.1 606.8L1130.6 618.2M1137.2 607.3L1132.7 618.7M1139.2 608.0L1134.7 619.4M1141.3 608.6L1136.8 620.0M1143.3 609.3L1138.8 620.7M1145.4 609.9L1140.9 621.3M1147.4 610.6L1142.9 621.9M1149.4 611.2L1144.9 622.5M1151.5 611.9L1147.0 623.2M1153.5 612.5L1149.0 623.8M1155.5 613.2L1151.0 624.4M1157.5 613.8L1153.0 625.0M1159.4 614.4L1155.0 625.6M1161.4 615.1L1156.9 626.3M1163.4 615.7L1158.9 626.9M1165.3 616.3L1160.8 627.5M1167.3 616.9L1162.8 628.1M1169.2 617.6L1164.7 628.7M1171.1 618.2L1166.6 629.3M1173.0 618.8L1168.5 629.9M1174.8 619.4L1170.4 630.5M1176.7 620.0L1172.2 631.1M1178.5 620.6L1174.0 631.6M1180.3 621.2L1175.8 632.2M1182.1 621.8L1177.6 632.8M1183.9 622.3L1179.4 633.3M1185.6 622.9L1181.1 633.9M1187.2 623.4L1182.7 634.4M1188.8 623.9L1184.3 634.9M1001.4 584.1L1027.5 591.4L1053.7 598.8L1079.8 605.8L1105.9 612.6L1132.1 619.5L1158.2 627.5L1184.3 635.8M1001.0 585.0L1027.2 592.3L1053.3 599.7L1079.4 606.7L1105.6 613.6L1131.7 620.4L1157.8 628.4L1184.0 636.7M1000.6 586.1L1026.7 593.5L1052.8 600.9L1078.9 608.0L1105.1 614.8L1131.2 621.6L1157.3 629.6L1183.5 637.9M1000.0 587.5L1026.1 594.9L1052.3 602.3L1078.4 609.4L1104.5 616.2L1130.7 623.0L1156.8 631.0L1182.9 639.2M999.4 588.9L1025.6 596.3L1051.7 603.7L1077.8 610.8L1104.0 617.6L1130.1 624.5L1156.2 632.4L1182.4 640.6M998.8 590.3L1024.9 597.8L1051.1 605.3L1077.2 612.4L1103.3 619.2L1129.5 626.0L1155.6 633.9L1181.8 642.1M998.2 591.9L1024.3 599.4L1050.4 606.9L1076.6 614.0L1102.7 620.8L1128.8 627.6L1155.0 635.5L1181.1 643.7M997.5 593.5L1023.6 601.1L1049.8 608.6L1075.9 615.7L1102.0 622.5L1128.2 629.3L1154.3 637.1L1180.5 645.3M996.8 595.2L1022.9 602.8L1049.1 610.3L1075.2 617.5L1101.4 624.3L1127.5 631.0L1153.6 638.8L1179.8 647.0M996.1 596.9L1022.2 604.5L1048.4 612.1L1074.5 619.3L1100.7 626.0L1126.8 632.8L1152.9 640.6L1179.1 648.7M995.4 598.6L1021.5 606.3L1047.7 613.9L1073.8 621.1L1100.0 627.8L1126.1 634.6L1152.2 642.3L1178.4 650.4M994.7 600.3L1020.8 608.0L1047.0 615.7L1073.1 622.9L1099.2 629.6L1125.4 636.4L1151.5 644.1L1177.7 652.1M993.9 602.1L1020.1 609.8L1046.2 617.5L1072.4 624.7L1098.5 631.5L1124.7 638.2L1150.8 645.8L1177.0 653.9M993.2 603.8L1019.4 611.6L1045.5 619.3L1071.7 626.5L1097.8 633.3L1124.0 640.0L1150.1 647.6L1176.3 655.6M992.5 605.5L1018.7 613.3L1044.8 621.1L1071.0 628.3L1097.1 635.0L1123.3 641.8L1149.4 649.3L1175.6 657.3M991.8 607.1L1018.0 615.0L1044.1 622.8L1070.3 630.0L1096.4 636.8L1122.6 643.5L1148.7 651.0L1174.9 658.9M991.2 608.7L1017.3 616.6L1043.5 624.5L1069.6 631.7L1095.8 638.4L1121.9 645.2L1148.1 652.6L1174.2 660.5M990.5 610.3L1016.7 618.2L1042.8 626.1L1069.0 633.3L1095.2 640.0L1121.3 646.8L1147.5 654.2L1173.6 662.1M989.9 611.7L1016.1 619.7L1042.2 627.6L1068.4 634.9L1094.5 641.6L1120.7 648.3L1146.9 655.7L1173.0 663.6M989.4 613.1L1015.5 621.1L1041.7 629.0L1067.8 636.3L1094.0 643.0L1120.1 649.7L1146.3 657.1L1172.4 664.9M988.8 614.3L1015.0 622.4L1041.2 630.4L1067.3 637.6L1093.5 644.3L1119.6 651.0L1145.8 658.3L1171.9 666.2M1002.8 584.5L990.1 615.1M1003.8 584.8L991.1 615.4M1005.4 585.2L992.7 615.9M1007.2 585.7L994.5 616.4M1009.0 586.2L996.4 617.0M1010.9 586.8L998.3 617.6M1012.9 587.3L1000.2 618.2M1014.9 587.9L1002.2 618.8M1016.9 588.5L1004.2 619.4M1019.0 589.0L1006.3 620.0M1021.0 589.6L1008.4 620.7M1023.2 590.2L1010.5 621.3M1025.3 590.8L1012.6 622.0M1027.5 591.4L1014.8 622.6M1029.6 592.0L1017.0 623.3M1031.8 592.6L1019.2 624.0M1034.0 593.3L1021.4 624.6M1036.3 593.9L1023.6 625.3M1038.5 594.5L1025.9 626.0M1040.8 595.2L1028.2 626.7M1043.1 595.8L1030.4 627.4M1045.3 596.4L1032.7 628.1M1047.6 597.1L1035.0 628.8M1049.9 597.7L1037.3 629.5M1052.3 598.4L1039.7 630.2M1054.6 599.0L1042.0 630.9M1056.9 599.7L1044.3 631.6M1059.3 600.3L1046.7 632.3M1061.6 601.0L1049.0 633.1M1064.0 601.7L1051.4 633.8M1066.4 602.3L1053.8 634.5M1068.7 602.9L1056.1 635.1M1071.1 603.5L1058.5 635.7M1073.5 604.2L1060.9 636.3M1075.9 604.8L1063.3 636.9M1078.3 605.4L1065.7 637.5M1080.7 606.0L1068.1 638.1M1083.1 606.7L1070.5 638.7M1085.5 607.3L1072.9 639.4M1087.9 607.9L1075.3 640.0M1090.3 608.6L1077.7 640.6M1092.7 609.2L1080.1 641.2M1095.1 609.8L1082.5 641.8M1097.5 610.4L1084.9 642.4M1099.9 611.1L1087.3 643.0M1102.3 611.7L1089.7 643.7M1104.7 612.3L1092.1 644.3M1107.1 612.9L1094.5 644.9M1109.5 613.6L1096.9 645.5M1111.8 614.2L1099.3 646.1M1114.2 614.8L1101.7 646.7M1116.6 615.4L1104.1 647.3M1119.0 616.1L1106.4 648.0M1121.4 616.7L1108.8 648.6M1123.7 617.3L1111.2 649.2M1126.1 617.9L1113.6 649.8M1128.5 618.5L1115.9 650.4M1130.8 619.1L1118.3 651.0M1133.1 619.8L1120.6 651.6M1135.5 620.5L1122.9 652.3M1137.8 621.2L1125.3 652.9M1140.1 622.0L1127.6 653.6M1142.4 622.7L1129.9 654.2M1144.7 623.4L1132.2 654.8M1147.0 624.1L1134.4 655.5M1149.2 624.8L1136.7 656.1M1151.5 625.5L1138.9 656.7M1153.7 626.2L1141.2 657.4M1155.9 626.8L1143.4 658.0M1158.1 627.5L1145.6 658.6M1160.3 628.2L1147.8 659.2M1162.5 628.9L1149.9 659.8M1164.6 629.5L1152.1 660.4M1166.7 630.2L1154.2 661.1M1168.8 630.9L1156.3 661.7M1170.9 631.5L1158.4 662.3M1172.9 632.2L1160.4 663.0M1174.9 632.8L1162.4 663.6M1176.8 633.4L1164.3 664.2M1178.7 634.0L1166.2 664.8M1180.6 634.6L1168.1 665.3M1182.3 635.2L1169.8 665.9M986.5 614.8L1015.5 623.7L1044.5 632.6L1073.6 640.4L1102.6 647.9L1131.7 655.6L1160.7 664.0M986.1 615.6L1015.1 624.6L1044.2 633.5L1073.2 641.4L1102.3 648.8L1131.3 656.5L1160.4 664.8M985.6 616.8L1014.6 625.8L1043.7 634.8L1072.7 642.6L1101.8 650.0L1130.8 657.7L1159.9 666.0M985.1 618.1L1014.1 627.2L1043.2 636.1L1072.2 644.0L1101.3 651.4L1130.3 659.1L1159.4 667.4M984.5 619.5L1013.5 628.6L1042.6 637.6L1071.6 645.5L1100.7 652.9L1129.7 660.5L1158.8 668.8M983.8 621.0L1012.9 630.2L1042.0 639.2L1071.0 647.0L1100.1 654.5L1129.1 662.1L1158.2 670.3M983.2 622.5L1012.3 631.7L1041.3 640.8L1070.4 648.6L1099.4 656.0L1128.5 663.6L1157.5 671.8M982.6 624.0L1011.7 633.2L1040.7 642.3L1069.8 650.2L1098.8 657.6L1127.9 665.2L1156.9 673.3M982.0 625.5L1011.1 634.7L1040.1 643.8L1069.2 651.7L1098.2 659.1L1127.3 666.6L1156.3 674.8M981.5 626.8L1010.5 636.1L1039.6 645.2L1068.6 653.1L1097.7 660.5L1126.7 668.0L1155.8 676.1M987.8 615.2L982.5 628.1M988.8 615.5L983.5 628.5M990.2 616.0L984.9 628.9M991.7 616.5L986.4 629.4M993.3 617.0L988.0 629.9M995.0 617.5L989.6 630.5M996.7 618.0L991.4 631.0M998.5 618.6L993.2 631.6M1000.4 619.1L995.0 632.2M1002.3 619.7L996.9 632.8M1004.2 620.3L998.9 633.4M1006.2 620.9L1000.9 634.0M1008.2 621.5L1002.9 634.7M1010.3 622.1L1005.0 635.3M1012.4 622.8L1007.0 636.0M1014.5 623.4L1009.2 636.6M1016.7 624.1L1011.3 637.3M1018.9 624.8L1013.5 638.0M1021.1 625.4L1015.7 638.7M1023.3 626.1L1018.0 639.4M1025.6 626.8L1020.2 640.1M1027.9 627.5L1022.5 640.9M1030.2 628.2L1024.8 641.6M1032.5 628.9L1027.1 642.3M1034.8 629.6L1029.5 643.1M1037.2 630.4L1031.9 643.8M1039.6 631.1L1034.2 644.6M1042.0 631.8L1036.6 645.3M1044.4 632.6L1039.0 646.1M1046.8 633.3L1041.5 646.8M1049.2 634.0L1043.9 647.6M1051.7 634.8L1046.4 648.4M1054.1 635.5L1048.8 649.1M1056.6 636.1L1051.3 649.7M1059.1 636.7L1053.8 650.3M1061.6 637.4L1056.2 650.9M1064.1 638.0L1058.7 651.6M1066.6 638.6L1061.2 652.2M1069.1 639.3L1063.7 652.8M1071.6 639.9L1066.2 653.5M1074.1 640.6L1068.7 654.1M1076.6 641.2L1071.2 654.8M1079.1 641.8L1073.7 655.4M1081.6 642.5L1076.2 656.0M1084.1 643.1L1078.7 656.7M1086.5 643.8L1081.2 657.3M1089.0 644.4L1083.7 657.9M1091.5 645.0L1086.2 658.6M1094.0 645.7L1088.7 659.2M1096.4 646.3L1091.1 659.8M1098.9 646.9L1093.6 660.4M1101.3 647.6L1096.0 661.1M1103.8 648.2L1098.5 661.7M1106.2 648.8L1100.9 662.3M1108.6 649.4L1103.3 662.9M1111.0 650.0L1105.7 663.5M1113.4 650.6L1108.1 664.1M1115.7 651.2L1110.4 664.7M1118.1 651.8L1112.8 665.3M1120.4 652.5L1115.1 665.9M1122.7 653.1L1117.4 666.5M1124.9 653.7L1119.6 667.1M1127.2 654.3L1121.9 667.7M1129.4 655.0L1124.1 668.3M1131.6 655.6L1126.3 668.9M1133.8 656.2L1128.5 669.5M1135.9 656.8L1130.6 670.0M1138.0 657.4L1132.7 670.6M1140.1 657.9L1134.8 671.2M1142.1 658.5L1136.9 671.7M1144.1 659.1L1138.9 672.2M1146.1 659.6L1140.8 672.7M1148.0 660.1L1142.7 673.3M1149.9 660.7L1144.6 673.8M1151.7 661.2L1146.4 674.2M1153.5 661.7L1148.2 674.8M1155.2 662.2L1149.9 675.3M1156.8 662.7L1151.5 675.8M1158.3 663.2L1153.0 676.2M1034.6 642.8L1066.0 651.6L1097.3 659.6L1128.7 667.7L1160.0 676.6M1034.3 643.8L1065.6 652.5L1097.0 660.5L1128.3 668.6L1159.6 677.5M1033.9 644.8L1065.2 653.6L1096.5 661.5L1127.9 669.7L1159.2 678.5M1033.4 645.9L1064.8 654.7L1096.1 662.7L1127.4 670.8L1158.8 679.6M1032.9 647.2L1064.3 656.0L1095.6 663.9L1127.0 672.0L1158.3 680.7M1032.4 648.4L1063.8 657.2L1095.1 665.2L1126.5 673.2L1157.8 682.0M1031.9 649.6L1063.3 658.4L1094.6 666.4L1126.0 674.4L1157.3 683.1M1031.5 650.7L1062.9 659.6L1094.2 667.5L1125.6 675.5L1156.9 684.2M1036.0 643.3L1032.6 651.9M1037.0 643.6L1033.6 652.2M1038.1 643.9L1034.7 652.5M1039.2 644.3L1035.8 652.9M1040.4 644.7L1037.0 653.3M1041.7 645.1L1038.3 653.7M1042.9 645.5L1039.5 654.1M1044.3 645.9L1040.9 654.5M1045.7 646.3L1042.3 655.0M1047.1 646.8L1043.7 655.4M1048.6 647.2L1045.2 655.8M1050.1 647.6L1046.7 656.2M1051.7 648.0L1048.3 656.6M1053.3 648.4L1049.9 657.0M1055.0 648.8L1051.6 657.5M1056.7 649.2L1053.3 657.9M1058.5 649.7L1055.1 658.3M1060.3 650.2L1056.9 658.8M1062.1 650.6L1058.7 659.3M1064.0 651.1L1060.6 659.7M1066.0 651.6L1062.6 660.2M1067.9 652.1L1064.5 660.7M1070.0 652.6L1066.6 661.2M1072.0 653.1L1068.6 661.8M1074.1 653.7L1070.7 662.3M1076.2 654.2L1072.8 662.8M1078.4 654.8L1075.0 663.4M1080.6 655.3L1077.2 663.9M1082.8 655.9L1079.4 664.5M1085.0 656.5L1081.6 665.1M1087.3 657.0L1083.9 665.6M1089.6 657.6L1086.2 666.2M1091.9 658.2L1088.5 666.8M1094.2 658.8L1090.8 667.4M1096.5 659.4L1093.1 668.0M1098.8 659.9L1095.4 668.5M1101.1 660.5L1097.7 669.1M1103.4 661.1L1100.0 669.7M1105.7 661.7L1102.3 670.3M1108.0 662.3L1104.6 670.9M1110.2 662.9L1106.9 671.4M1112.5 663.4L1109.1 672.0M1114.7 664.0L1111.3 672.6M1116.9 664.6L1113.6 673.1M1119.1 665.2L1115.7 673.7M1121.3 665.8L1117.9 674.3M1123.4 666.3L1120.0 674.8M1125.5 666.9L1122.1 675.4M1127.5 667.4L1124.1 675.9M1129.5 668.0L1126.1 676.4M1131.5 668.5L1128.1 676.9M1133.4 669.0L1130.0 677.4M1135.3 669.5L1131.9 677.9M1137.1 670.0L1133.7 678.4M1138.9 670.5L1135.5 678.8M1140.6 670.9L1137.3 679.3M1142.3 671.4L1138.9 679.7M1144.0 671.8L1140.6 680.2M1145.6 672.2L1142.2 680.6M1147.1 672.7L1143.7 681.0M1148.6 673.1L1145.2 681.4M1150.0 673.6L1146.7 681.9M1151.4 674.0L1148.1 682.3M1152.8 674.4L1149.4 682.7M1154.1 674.8L1150.7 683.1M1155.3 675.2L1151.9 683.5M1156.5 675.5L1153.1 683.8M1157.6 675.9L1154.3 684.1M1204.0 628.9L1230.7 637.6L1257.5 646.6L1284.2 655.8L1311.0 665.0L1337.7 674.2L1364.4 683.1L1391.2 692.1M1203.6 629.8L1230.3 638.5L1257.1 647.5L1283.8 656.7L1310.5 665.9L1337.3 675.0L1364.0 684.0L1390.7 693.0M1203.0 631.2L1229.7 639.9L1256.4 649.0L1283.1 658.1L1309.8 667.3L1336.6 676.4L1363.3 685.4L1390.0 694.3M1202.3 632.8L1229.0 641.5L1255.7 650.5L1282.4 659.6L1309.1 668.8L1335.8 677.9L1362.5 686.9L1389.2 695.9M1201.7 634.5L1228.3 643.2L1255.0 652.1L1281.7 661.2L1308.3 670.4L1335.0 679.5L1361.7 688.5L1388.3 697.4M1201.0 636.1L1227.6 644.8L1254.3 653.8L1280.9 662.9L1307.5 672.0L1334.2 681.1L1360.8 690.1L1387.5 699.0M1200.3 637.8L1226.9 646.5L1253.5 655.4L1280.2 664.5L1306.8 673.6L1333.4 682.7L1360.0 691.6L1386.7 700.6M1199.6 639.3L1226.2 648.0L1252.8 656.9L1279.4 666.0L1306.1 675.1L1332.7 684.2L1359.3 693.1L1385.9 702.1M1205.4 629.3L1200.8 640.3M1206.4 629.6L1201.8 640.6M1207.9 630.1L1203.3 641.1M1209.5 630.7L1204.9 641.6M1211.2 631.2L1206.6 642.1M1212.9 631.8L1208.3 642.7M1214.6 632.3L1210.0 643.3M1216.4 632.9L1211.8 643.8M1218.2 633.5L1213.6 644.4M1220.0 634.1L1215.4 645.0M1221.9 634.7L1217.2 645.6M1223.7 635.3L1219.1 646.2M1225.6 635.9L1221.0 646.8M1227.5 636.5L1222.9 647.4M1229.4 637.2L1224.8 648.1M1231.4 637.8L1226.7 648.7M1233.3 638.4L1228.6 649.3M1235.3 639.1L1230.6 649.9M1237.3 639.7L1232.6 650.6M1239.2 640.4L1234.5 651.3M1241.2 641.1L1236.5 651.9M1243.2 641.8L1238.5 652.6M1245.3 642.5L1240.5 653.3M1247.3 643.1L1242.5 654.0M1249.3 643.8L1244.5 654.6M1251.3 644.5L1246.6 655.3M1253.4 645.2L1248.6 656.0M1255.4 645.9L1250.6 656.7M1257.5 646.6L1252.7 657.4M1259.6 647.3L1254.7 658.1M1261.6 648.1L1256.8 658.8M1263.7 648.8L1258.9 659.5M1265.8 649.5L1260.9 660.2M1267.9 650.2L1263.0 660.9M1270.0 650.9L1265.1 661.6M1272.1 651.6L1267.2 662.3M1274.2 652.3L1269.3 663.0M1276.3 653.1L1271.3 663.7M1278.4 653.8L1273.4 664.4M1280.5 654.5L1275.5 665.2M1282.6 655.2L1277.6 665.9M1284.7 656.0L1279.7 666.6M1286.8 656.7L1281.8 667.3M1288.9 657.4L1283.9 668.0M1291.1 658.1L1286.0 668.8M1293.2 658.9L1288.2 669.5M1295.3 659.6L1290.3 670.2M1297.4 660.3L1292.4 670.9M1299.5 661.1L1294.5 671.7M1301.7 661.8L1296.6 672.4M1303.8 662.5L1298.7 673.1M1305.9 663.2L1300.8 673.8M1308.0 664.0L1302.9 674.5M1310.1 664.7L1305.0 675.3M1312.2 665.4L1307.1 676.0M1314.4 666.1L1309.2 676.7M1316.5 666.9L1311.3 677.4M1318.6 667.6L1313.4 678.1M1320.7 668.3L1315.5 678.9M1322.8 669.0L1317.6 679.6M1324.9 669.8L1319.7 680.3M1327.0 670.5L1321.8 681.0M1329.1 671.2L1323.9 681.7M1331.2 671.9L1325.9 682.4M1333.2 672.6L1328.0 683.1M1335.3 673.3L1330.1 683.8M1337.4 674.0L1332.1 684.5M1339.5 674.7L1334.2 685.2M1341.5 675.4L1336.2 685.9M1343.6 676.1L1338.3 686.6M1345.6 676.8L1340.3 687.3M1347.7 677.5L1342.3 688.0M1349.7 678.2L1344.4 688.6M1351.7 678.8L1346.4 689.3M1353.7 679.5L1348.4 690.0M1355.7 680.2L1350.4 690.7M1357.7 680.9L1352.3 691.3M1359.7 681.5L1354.3 692.0M1361.7 682.2L1356.3 692.6M1363.6 682.8L1358.2 693.3M1365.6 683.5L1360.2 694.0M1367.5 684.1L1362.1 694.6M1369.5 684.8L1364.0 695.2M1371.4 685.4L1365.9 695.9M1373.2 686.1L1367.8 696.5M1375.1 686.7L1369.6 697.1M1377.0 687.3L1371.5 697.7M1378.8 687.9L1373.3 698.4M1380.6 688.5L1375.1 699.0M1382.4 689.1L1376.9 699.6M1384.1 689.7L1378.6 700.2M1385.8 690.3L1380.3 700.7M1387.5 690.8L1381.9 701.3M1389.1 691.4L1383.5 701.8M1197.1 640.0L1223.7 648.6L1250.3 657.5L1276.9 666.5L1303.5 675.6L1330.1 684.7L1356.6 693.6L1383.2 702.6M1196.7 640.9L1223.3 649.5L1249.9 658.4L1276.5 667.4L1303.0 676.5L1329.6 685.6L1356.2 694.5L1382.8 703.5M1196.2 642.1L1222.8 650.8L1249.3 659.6L1275.9 668.6L1302.5 677.7L1329.0 686.8L1355.6 695.7L1382.1 704.7M1195.7 643.5L1222.2 652.1L1248.7 661.0L1275.3 670.0L1301.8 679.0L1328.4 688.1L1354.9 697.0L1381.4 706.0M1195.1 645.0L1221.6 653.6L1248.1 662.4L1274.6 671.4L1301.1 680.5L1327.6 689.6L1354.2 698.5L1380.7 707.4M1194.4 646.6L1220.9 655.2L1247.4 664.0L1273.9 672.9L1300.4 682.0L1326.9 691.1L1353.4 700.0L1379.9 708.9M1193.7 648.2L1220.2 656.8L1246.7 665.6L1273.1 674.6L1299.6 683.6L1326.1 692.7L1352.6 701.6L1379.0 710.5M1193.0 650.0L1219.5 658.5L1245.9 667.3L1272.4 676.2L1298.8 685.3L1325.3 694.3L1351.7 703.2L1378.2 712.1M1192.3 651.7L1218.7 660.3L1245.1 669.0L1271.6 677.9L1298.0 687.0L1324.4 696.0L1350.8 704.9L1377.3 713.8M1191.6 653.5L1218.0 662.1L1244.4 670.8L1270.8 679.7L1297.2 688.7L1323.6 697.7L1350.0 706.6L1376.4 715.5M1190.8 655.3L1217.2 663.9L1243.6 672.6L1269.9 681.4L1296.3 690.4L1322.7 699.4L1349.1 708.3L1375.4 717.2M1190.1 657.1L1216.4 665.7L1242.8 674.3L1269.1 683.2L1295.5 692.2L1321.8 701.2L1348.2 710.0L1374.5 719.0M1189.3 659.0L1215.6 667.5L1242.0 676.1L1268.3 685.0L1294.6 693.9L1320.9 702.9L1347.3 711.8L1373.6 720.7M1188.6 660.7L1214.9 669.2L1241.2 677.9L1267.5 686.7L1293.8 695.7L1320.1 704.6L1346.4 713.5L1372.7 722.4M1187.8 662.5L1214.1 671.0L1240.4 679.6L1266.7 688.4L1293.0 697.4L1319.2 706.3L1345.5 715.2L1371.8 724.1M1187.1 664.2L1213.4 672.7L1239.7 681.3L1265.9 690.1L1292.2 699.0L1318.4 708.0L1344.7 716.8L1370.9 725.7M1186.5 665.8L1212.7 674.3L1238.9 682.9L1265.2 691.7L1291.4 700.6L1317.6 709.5L1343.9 718.4L1370.1 727.3M1185.8 667.4L1212.0 675.8L1238.3 684.4L1264.5 693.2L1290.7 702.1L1316.9 711.0L1343.1 719.8L1369.3 728.8M1185.2 668.9L1211.4 677.3L1237.6 685.9L1263.8 694.6L1290.0 703.5L1316.2 712.4L1342.4 721.2L1368.6 730.1M1184.7 670.2L1210.9 678.6L1237.0 687.2L1263.2 695.9L1289.4 704.8L1315.5 713.7L1341.7 722.5L1367.9 731.4M1198.5 640.4L1185.9 670.9M1199.5 640.7L1186.9 671.3M1201.2 641.3L1188.5 671.8M1202.9 641.8L1190.2 672.3M1204.7 642.4L1192.0 672.9M1206.6 643.0L1193.9 673.5M1208.6 643.7L1195.8 674.1M1210.6 644.3L1197.8 674.7M1212.6 645.0L1199.8 675.4M1214.6 645.6L1201.8 676.0M1216.7 646.3L1203.8 676.7M1218.8 647.0L1205.9 677.4M1220.9 647.7L1208.0 678.0M1223.1 648.4L1210.1 678.7M1225.2 649.1L1212.2 679.4M1227.4 649.8L1214.4 680.1M1229.6 650.5L1216.5 680.8M1231.8 651.2L1218.7 681.5M1234.1 652.0L1220.9 682.2M1236.3 652.8L1223.1 682.9M1238.6 653.5L1225.4 683.7M1240.9 654.3L1227.6 684.4M1243.2 655.1L1229.9 685.1M1245.4 655.8L1232.1 685.9M1247.8 656.6L1234.4 686.6M1250.1 657.4L1236.7 687.4M1252.4 658.2L1239.0 688.1M1254.7 659.0L1241.3 688.9M1257.1 659.8L1243.6 689.6M1259.4 660.6L1245.9 690.4M1261.8 661.4L1248.2 691.2M1264.1 662.2L1250.5 691.9M1266.5 663.0L1252.8 692.7M1268.9 663.8L1255.2 693.5M1271.3 664.6L1257.5 694.3M1273.6 665.4L1259.9 695.1M1276.0 666.2L1262.2 695.9M1278.4 667.0L1264.6 696.7M1280.8 667.8L1266.9 697.5M1283.2 668.7L1269.3 698.3M1285.6 669.5L1271.6 699.1M1288.0 670.3L1274.0 699.9M1290.4 671.1L1276.3 700.7M1292.8 671.9L1278.7 701.5M1295.2 672.8L1281.0 702.3M1297.5 673.6L1283.4 703.1M1299.9 674.4L1285.8 703.9M1302.3 675.2L1288.1 704.7M1304.7 676.0L1290.5 705.5M1307.1 676.9L1292.8 706.3M1309.5 677.7L1295.2 707.1M1311.9 678.5L1297.5 707.9M1314.2 679.3L1299.8 708.7M1316.6 680.1L1302.2 709.5M1319.0 680.9L1304.5 710.3M1321.3 681.7L1306.8 711.1M1323.7 682.5L1309.1 711.8M1326.0 683.3L1311.5 712.6M1328.4 684.1L1313.8 713.4M1330.7 684.9L1316.0 714.2M1333.0 685.7L1318.3 715.0M1335.4 686.5L1320.6 715.7M1337.7 687.3L1322.9 716.5M1340.0 688.0L1325.1 717.3M1342.2 688.8L1327.4 718.0M1344.5 689.6L1329.6 718.8M1346.8 690.3L1331.8 719.5M1349.0 691.1L1334.1 720.3M1351.2 691.8L1336.3 721.0M1353.5 692.6L1338.4 721.7M1355.7 693.3L1340.6 722.5M1357.8 694.0L1342.7 723.2M1360.0 694.8L1344.9 723.9M1362.1 695.5L1347.0 724.6M1364.3 696.2L1349.1 725.3M1366.4 696.9L1351.1 726.0M1368.4 697.6L1353.2 726.7M1370.5 698.3L1355.2 727.4M1372.5 699.0L1357.2 728.1M1374.4 699.6L1359.1 728.7M1376.4 700.3L1361.0 729.4M1378.2 700.9L1362.8 730.0M1380.0 701.5L1364.6 730.6M1381.7 702.1L1366.3 731.2M1182.3 670.6L1211.3 680.0L1240.4 689.5L1269.4 699.2L1298.5 709.1L1327.5 718.9L1356.6 728.7M1181.9 671.6L1210.9 680.9L1240.0 690.4L1269.0 700.1L1298.0 710.0L1327.1 719.8L1356.1 729.6M1181.4 672.8L1210.4 682.2L1239.4 691.6L1268.4 701.3L1297.4 711.2L1326.5 721.0L1355.5 730.8M1180.8 674.2L1209.8 683.5L1238.8 693.0L1267.8 702.7L1296.8 712.5L1325.8 722.4L1354.8 732.1M1180.2 675.7L1209.2 685.0L1238.1 694.5L1267.1 704.1L1296.1 714.0L1325.1 723.8L1354.0 733.6M1179.5 677.3L1208.5 686.6L1237.4 696.0L1266.4 705.7L1295.3 715.5L1324.3 725.3L1353.2 735.1M1178.9 678.9L1207.8 688.2L1236.7 697.5L1265.7 707.2L1294.6 717.0L1323.5 726.8L1352.4 736.6M1178.3 680.4L1207.2 689.7L1236.1 699.1L1265.0 708.7L1293.9 718.5L1322.8 728.3L1351.7 738.1M1177.6 681.9L1206.5 691.2L1235.4 700.5L1264.3 710.1L1293.2 719.9L1322.0 729.7L1350.9 739.5M1177.1 683.3L1206.0 692.5L1234.8 701.8L1263.7 711.4L1292.5 721.2L1321.4 731.0L1350.2 740.7M1183.6 671.1L1178.3 684.0M1184.6 671.4L1179.3 684.3M1186.0 671.8L1180.7 684.8M1187.5 672.3L1182.1 685.2M1189.0 672.8L1183.7 685.7M1190.7 673.3L1185.3 686.2M1192.4 673.9L1187.0 686.8M1194.1 674.5L1188.7 687.3M1195.9 675.0L1190.5 687.9M1197.8 675.6L1192.4 688.5M1199.7 676.2L1194.3 689.1M1201.6 676.9L1196.2 689.7M1203.6 677.5L1198.1 690.4M1205.6 678.2L1200.1 691.0M1207.6 678.8L1202.2 691.6M1209.7 679.5L1204.2 692.3M1211.8 680.2L1206.3 693.0M1213.9 680.8L1208.4 693.7M1216.1 681.5L1210.6 694.3M1218.3 682.2L1212.7 695.0M1220.5 683.0L1214.9 695.7M1222.7 683.7L1217.1 696.5M1225.0 684.4L1219.4 697.2M1227.2 685.2L1221.6 697.9M1229.5 685.9L1223.9 698.7M1231.8 686.7L1226.2 699.4M1234.2 687.4L1228.5 700.1M1236.5 688.2L1230.8 700.9M1238.9 689.0L1233.2 701.6M1241.2 689.8L1235.5 702.4M1243.6 690.5L1237.9 703.2M1246.0 691.3L1240.3 703.9M1248.4 692.1L1242.7 704.7M1250.8 692.9L1245.0 705.5M1253.2 693.7L1247.5 706.3M1255.7 694.5L1249.9 707.1M1258.1 695.4L1252.3 707.9M1260.5 696.2L1254.7 708.7M1263.0 697.0L1257.1 709.6M1265.4 697.9L1259.6 710.4M1267.9 698.7L1262.0 711.2M1270.3 699.5L1264.4 712.0M1272.8 700.4L1266.9 712.9M1275.2 701.2L1269.3 713.7M1277.7 702.0L1271.7 714.5M1280.1 702.9L1274.2 715.3M1282.6 703.7L1276.6 716.2M1285.0 704.5L1279.0 717.0M1287.4 705.3L1281.4 717.8M1289.9 706.2L1283.8 718.6M1292.3 707.0L1286.2 719.4M1294.7 707.8L1288.6 720.2M1297.1 708.6L1291.0 721.0M1299.5 709.4L1293.4 721.9M1301.8 710.2L1295.7 722.7M1304.2 711.0L1298.1 723.4M1306.5 711.8L1300.4 724.2M1308.9 712.6L1302.7 725.0M1311.2 713.4L1305.0 725.8M1313.5 714.2L1307.3 726.6M1315.7 715.0L1309.5 727.3M1318.0 715.7L1311.8 728.1M1320.2 716.5L1314.0 728.8M1322.4 717.2L1316.2 729.6M1324.6 718.0L1318.3 730.3M1326.8 718.7L1320.5 731.0M1328.9 719.4L1322.6 731.8M1331.0 720.1L1324.7 732.5M1333.1 720.8L1326.8 733.2M1335.1 721.5L1328.8 733.8M1337.1 722.2L1330.8 734.5M1339.1 722.8L1332.8 735.2M1341.1 723.5L1334.7 735.8M1343.0 724.1L1336.6 736.5M1344.8 724.8L1338.4 737.1M1346.6 725.4L1340.2 737.7M1348.4 726.0L1341.9 738.3M1350.1 726.5L1343.6 738.8M1351.7 727.1L1345.2 739.4M1353.2 727.6L1346.8 739.9M1354.7 728.1L1348.2 740.4M1230.2 698.9L1261.3 709.2L1292.5 719.8L1323.6 730.3L1354.8 740.9M1229.8 699.8L1260.9 710.1L1292.0 720.7L1323.2 731.2L1354.3 741.8M1229.3 700.9L1260.4 711.1L1291.5 721.7L1322.7 732.2L1353.8 742.8M1228.8 702.0L1259.9 712.3L1291.0 722.8L1322.1 733.3L1353.2 743.9M1228.3 703.2L1259.3 713.5L1290.4 724.0L1321.5 734.5L1352.6 745.1M1227.7 704.5L1258.8 714.7L1289.8 725.2L1320.9 735.7L1351.9 746.3M1227.2 705.6L1258.2 715.9L1289.3 726.4L1320.3 736.9L1351.3 747.4M1226.7 706.7L1257.7 716.9L1288.7 727.4L1319.8 737.9L1350.8 748.5M1231.5 699.4L1227.9 707.4M1232.5 699.7L1228.9 707.7M1233.6 700.0L1230.0 708.1M1234.7 700.4L1231.1 708.4M1235.8 700.8L1232.2 708.8M1237.0 701.1L1233.4 709.2M1238.3 701.5L1234.6 709.6M1239.6 702.0L1235.9 710.0M1240.9 702.4L1237.3 710.4M1242.3 702.8L1238.6 710.9M1243.7 703.3L1240.1 711.3M1245.2 703.8L1241.5 711.8M1246.7 704.3L1243.1 712.3M1248.3 704.8L1244.6 712.8M1249.9 705.4L1246.2 713.4M1251.6 705.9L1247.9 713.9M1253.3 706.5L1249.6 714.5M1255.0 707.1L1251.3 715.1M1256.8 707.7L1253.1 715.7M1258.7 708.3L1254.9 716.3M1260.5 709.0L1256.8 716.9M1262.4 709.6L1258.7 717.6M1264.4 710.3L1260.6 718.2M1266.4 710.9L1262.6 718.9M1268.4 711.6L1264.6 719.6M1270.5 712.3L1266.7 720.3M1272.5 713.0L1268.8 721.0M1274.7 713.8L1270.9 721.7M1276.8 714.5L1273.0 722.4M1279.0 715.2L1275.2 723.2M1281.2 716.0L1277.3 723.9M1283.4 716.7L1279.5 724.6M1285.6 717.5L1281.7 725.4M1287.8 718.2L1284.0 726.1M1290.1 719.0L1286.2 726.9M1292.3 719.7L1288.4 727.7M1294.6 720.5L1290.7 728.4M1296.8 721.3L1292.9 729.2M1299.0 722.0L1295.1 729.9M1301.3 722.8L1297.4 730.7M1303.5 723.5L1299.6 731.4M1305.7 724.3L1301.8 732.2M1307.9 725.0L1304.0 732.9M1310.1 725.8L1306.1 733.6M1312.2 726.5L1308.3 734.4M1314.3 727.2L1310.4 735.1M1316.4 727.9L1312.4 735.8M1318.5 728.6L1314.5 736.5M1320.5 729.3L1316.5 737.1M1322.5 730.0L1318.5 737.8M1324.4 730.6L1320.4 738.5M1326.4 731.3L1322.3 739.1M1328.2 731.9L1324.2 739.7M1330.1 732.5L1326.0 740.4M1331.8 733.1L1327.8 741.0M1333.6 733.7L1329.5 741.5M1335.3 734.3L1331.2 742.1M1336.9 734.8L1332.9 742.7M1338.5 735.4L1334.5 743.2M1340.1 735.9L1336.0 743.7M1341.6 736.4L1337.5 744.2M1343.1 736.9L1339.0 744.7M1344.5 737.4L1340.4 745.2M1345.9 737.8L1341.8 745.7M1347.2 738.3L1343.1 746.1M1348.5 738.7L1344.4 746.6M1349.7 739.1L1345.6 747.0M1350.9 739.6L1346.7 747.4M1352.0 739.9L1347.9 747.8M1353.1 740.3L1348.9 748.1M1403.8 696.4L1429.2 705.0L1454.6 713.8L1480.0 722.8L1505.4 731.8L1530.8 740.8L1556.2 750.3L1581.5 759.8M1403.3 697.2L1428.7 705.9L1454.1 714.7L1479.5 723.7L1504.9 732.7L1530.3 741.7L1555.7 751.2L1581.1 760.7M1402.6 698.6L1428.0 707.2L1453.4 716.1L1478.8 725.0L1504.2 734.1L1529.6 743.1L1555.0 752.5L1580.4 762.1M1401.8 700.0L1427.2 708.7L1452.6 717.6L1478.0 726.5L1503.4 735.6L1528.8 744.6L1554.2 754.0L1579.6 763.6M1401.0 701.6L1426.4 710.3L1451.8 719.2L1477.2 728.1L1502.6 737.1L1528.0 746.2L1553.4 755.6L1578.8 765.2M1400.2 703.2L1425.6 711.9L1451.0 720.8L1476.4 729.7L1501.8 738.7L1527.2 747.8L1552.6 757.3L1578.0 766.8M1399.4 704.7L1424.8 713.5L1450.2 722.3L1475.6 731.3L1501.0 740.3L1526.4 749.4L1551.8 758.8L1577.2 768.4M1398.6 706.2L1424.0 715.0L1449.4 723.8L1474.8 732.8L1500.2 741.8L1525.6 750.9L1551.0 760.4L1576.4 770.0M1405.1 696.8L1399.5 707.3M1406.1 697.1L1400.5 707.7M1407.6 697.6L1402.0 708.2M1409.1 698.2L1403.6 708.7M1410.8 698.7L1405.2 709.3M1412.4 699.3L1406.8 709.9M1414.1 699.9L1408.6 710.5M1415.9 700.5L1410.3 711.1M1417.6 701.1L1412.0 711.7M1419.4 701.7L1413.8 712.3M1421.2 702.3L1415.6 712.9M1423.0 702.9L1417.5 713.6M1424.9 703.5L1419.3 714.2M1426.7 704.1L1421.2 714.8M1428.6 704.8L1423.0 715.5M1430.5 705.4L1424.9 716.1M1432.4 706.1L1426.8 716.8M1434.3 706.7L1428.7 717.5M1436.2 707.4L1430.7 718.1M1438.2 708.0L1432.6 718.8M1440.1 708.7L1434.5 719.5M1442.1 709.4L1436.5 720.1M1444.0 710.1L1438.5 720.8M1446.0 710.8L1440.4 721.5M1448.0 711.5L1442.4 722.2M1450.0 712.2L1444.4 722.9M1452.0 712.9L1446.4 723.6M1454.0 713.6L1448.4 724.3M1456.0 714.3L1450.4 725.0M1458.0 715.0L1452.4 725.7M1460.0 715.7L1454.5 726.4M1462.0 716.5L1456.5 727.2M1464.1 717.2L1458.5 727.9M1466.1 717.9L1460.6 728.6M1468.1 718.6L1462.6 729.3M1470.2 719.3L1464.6 730.0M1472.2 720.1L1466.7 730.7M1474.3 720.8L1468.7 731.5M1476.3 721.5L1470.8 732.2M1478.4 722.2L1472.8 732.9M1480.4 723.0L1474.9 733.6M1482.5 723.7L1477.0 734.4M1484.6 724.4L1479.0 735.1M1486.6 725.2L1481.1 735.8M1488.7 725.9L1483.1 736.6M1490.7 726.6L1485.2 737.3M1492.8 727.4L1487.3 738.0M1494.9 728.1L1489.3 738.8M1496.9 728.8L1491.4 739.5M1499.0 729.5L1493.5 740.2M1501.1 730.3L1495.5 741.0M1503.1 731.0L1497.6 741.7M1505.2 731.7L1499.7 742.4M1507.2 732.5L1501.7 743.2M1509.3 733.2L1503.8 743.9M1511.3 733.9L1505.8 744.6M1513.4 734.7L1507.9 745.4M1515.4 735.4L1509.9 746.1M1517.5 736.1L1512.0 746.8M1519.5 736.8L1514.0 747.6M1521.6 737.6L1516.1 748.3M1523.6 738.3L1518.1 749.0M1525.6 739.0L1520.1 749.7M1527.7 739.7L1522.1 750.4M1529.7 740.4L1524.2 751.2M1531.7 741.2L1526.2 751.9M1533.7 741.9L1528.2 752.6M1535.7 742.6L1530.2 753.3M1537.7 743.3L1532.2 754.1M1539.7 744.1L1534.2 754.8M1541.7 744.8L1536.2 755.6M1543.6 745.6L1538.1 756.3M1545.6 746.3L1540.1 757.1M1547.5 747.0L1542.0 757.8M1549.5 747.7L1544.0 758.5M1551.4 748.5L1545.9 759.3M1553.3 749.2L1547.8 760.0M1555.2 749.9L1549.8 760.7M1557.1 750.6L1551.7 761.4M1559.0 751.3L1553.5 762.1M1560.9 752.0L1555.4 762.9M1562.7 752.7L1557.3 763.6M1564.6 753.4L1559.1 764.3M1566.4 754.1L1560.9 764.9M1568.2 754.8L1562.7 765.6M1570.0 755.4L1564.5 766.3M1571.7 756.1L1566.3 767.0M1573.5 756.7L1568.0 767.6M1575.1 757.4L1569.7 768.3M1576.8 758.0L1571.3 768.9M1578.4 758.6L1572.9 769.5M1579.9 759.2L1574.5 770.1M1395.9 707.0L1421.3 715.8L1446.7 724.6L1472.1 733.6L1497.6 742.6L1523.0 751.6L1548.4 761.1L1573.8 770.7M1395.4 707.8L1420.9 716.7L1446.3 725.5L1471.7 734.5L1497.1 743.5L1522.5 752.5L1547.9 762.0L1573.3 771.6M1394.8 709.0L1420.2 717.9L1445.7 726.7L1471.1 735.6L1496.5 744.7L1521.9 753.7L1547.3 763.2L1572.7 772.8M1394.1 710.3L1419.6 719.2L1445.0 728.0L1470.4 736.9L1495.8 746.0L1521.2 755.0L1546.6 764.5L1572.1 774.2M1393.4 711.7L1418.8 720.6L1444.2 729.4L1469.7 738.4L1495.1 747.4L1520.5 756.4L1545.9 766.0L1571.3 775.6M1392.6 713.1L1418.0 722.1L1443.5 730.9L1468.9 739.8L1494.3 748.9L1519.7 757.9L1545.1 767.5L1570.6 777.1M1391.8 714.7L1417.2 723.7L1442.6 732.5L1468.1 741.4L1493.5 750.5L1518.9 759.5L1544.3 769.1L1569.8 778.7M1390.9 716.3L1416.4 725.3L1441.8 734.1L1467.2 743.0L1492.7 752.1L1518.1 761.1L1543.5 770.7L1568.9 780.4M1390.1 717.9L1415.5 726.9L1440.9 735.8L1466.4 744.7L1491.8 753.8L1517.2 762.8L1542.7 772.4L1568.1 782.1M1389.2 719.6L1414.6 728.7L1440.0 737.5L1465.5 746.4L1490.9 755.5L1516.3 764.5L1541.8 774.1L1567.2 783.8M1388.3 721.3L1413.7 730.4L1439.2 739.2L1464.6 748.1L1490.0 757.2L1515.5 766.3L1540.9 775.8L1566.3 785.6M1387.4 723.0L1412.8 732.1L1438.3 741.0L1463.7 749.9L1489.1 758.9L1514.6 768.0L1540.0 777.6L1565.5 787.3M1386.5 724.7L1411.9 733.8L1437.4 742.7L1462.8 751.6L1488.2 760.7L1513.7 769.7L1539.1 779.3L1564.6 789.1M1385.6 726.4L1411.0 735.5L1436.5 744.4L1461.9 753.3L1487.4 762.4L1512.8 771.4L1538.2 781.1L1563.7 790.8M1384.7 728.0L1410.1 737.2L1435.6 746.1L1461.0 755.0L1486.5 764.1L1511.9 773.1L1537.4 782.8L1562.8 792.5M1383.8 729.6L1409.3 738.9L1434.7 747.8L1460.2 756.6L1485.6 765.7L1511.1 774.8L1536.5 784.4L1562.0 794.2M1383.0 731.2L1408.5 740.5L1433.9 749.3L1459.4 758.2L1484.8 767.3L1510.3 776.4L1535.7 786.0L1561.2 795.8M1382.2 732.7L1407.7 742.0L1433.1 750.9L1458.6 759.7L1484.0 768.8L1509.5 777.9L1535.0 787.6L1560.4 797.4M1381.5 734.1L1406.9 743.4L1432.4 752.3L1457.8 761.1L1483.3 770.2L1508.8 779.3L1534.2 789.0L1559.7 798.8M1380.8 735.4L1406.2 744.7L1431.7 753.6L1457.2 762.4L1482.6 771.5L1508.1 780.6L1533.5 790.3L1559.0 800.2M1397.2 707.4L1381.7 736.7M1398.2 707.8L1382.6 737.1M1399.8 708.3L1384.2 737.7M1401.5 708.9L1386.0 738.3M1403.3 709.5L1387.8 739.0M1405.2 710.2L1389.6 739.6M1407.1 710.9L1391.5 740.3M1409.1 711.5L1393.5 741.1M1411.0 712.2L1395.5 741.8M1413.0 712.9L1397.5 742.5M1415.1 713.6L1399.5 743.3M1417.2 714.3L1401.6 744.1M1419.2 715.1L1403.7 744.8M1421.4 715.8L1405.8 745.6M1423.5 716.5L1407.9 746.4M1425.6 717.3L1410.1 747.2M1427.8 718.0L1412.3 748.0M1430.0 718.8L1414.5 748.7M1432.2 719.5L1416.7 749.4M1434.4 720.3L1418.9 750.2M1436.6 721.1L1421.1 751.0M1438.8 721.9L1423.3 751.8M1441.1 722.7L1425.6 752.5M1443.3 723.4L1427.8 753.3M1445.6 724.2L1430.1 754.1M1447.9 725.0L1432.4 754.9M1450.2 725.8L1434.7 755.7M1452.4 726.6L1437.0 756.5M1454.7 727.5L1439.3 757.3M1457.1 728.3L1441.6 758.1M1459.4 729.1L1443.9 758.9M1461.7 729.9L1446.2 759.7M1464.0 730.7L1448.6 760.5M1466.3 731.5L1450.9 761.3M1468.7 732.3L1453.2 762.1M1471.0 733.2L1455.6 762.9M1473.3 734.0L1457.9 763.7M1475.7 734.8L1460.3 764.6M1478.0 735.7L1462.6 765.4M1480.4 736.5L1464.9 766.3M1482.7 737.3L1467.3 767.1M1485.1 738.2L1469.6 767.9M1487.4 739.0L1472.0 768.8M1489.7 739.8L1474.4 769.6M1492.1 740.7L1476.7 770.5M1494.4 741.5L1479.1 771.3M1496.8 742.3L1481.4 772.1M1499.1 743.2L1483.7 773.0M1501.5 744.0L1486.1 773.8M1503.8 744.8L1488.4 774.6M1506.1 745.7L1490.8 775.5M1508.4 746.5L1493.1 776.3M1510.8 747.3L1495.4 777.1M1513.1 748.1L1497.7 778.0M1515.4 748.9L1500.1 778.8M1517.7 749.8L1502.4 779.6M1520.0 750.6L1504.7 780.4M1522.3 751.4L1507.0 781.3M1524.6 752.2L1509.2 782.1M1526.8 753.0L1511.5 782.9M1529.1 753.8L1513.8 783.8M1531.4 754.7L1516.0 784.6M1533.6 755.5L1518.3 785.5M1535.8 756.4L1520.5 786.4M1538.1 757.2L1522.8 787.2M1540.3 758.0L1525.0 788.1M1542.4 758.9L1527.2 788.9M1544.6 759.7L1529.3 789.8M1546.8 760.5L1531.5 790.6M1548.9 761.3L1533.7 791.4M1551.1 762.1L1535.8 792.3M1553.2 762.9L1537.9 793.1M1555.2 763.7L1540.0 793.9M1557.3 764.5L1542.0 794.7M1559.3 765.3L1544.1 795.5M1561.3 766.0L1546.1 796.2M1563.3 766.8L1548.1 797.0M1565.2 767.5L1550.0 797.7M1567.1 768.2L1551.9 798.5M1569.0 768.9L1553.7 799.2M1570.7 769.6L1555.5 799.9M1572.4 770.2L1557.2 800.5M1378.0 736.3L1406.3 746.7L1434.6 756.5L1462.8 766.4L1491.1 776.5L1519.4 786.8L1547.7 797.8M1377.5 737.1L1405.8 747.6L1434.1 757.4L1462.4 767.3L1490.7 777.4L1519.0 787.7L1547.2 798.7M1376.9 738.3L1405.2 748.8L1433.5 758.6L1461.8 768.5L1490.1 778.6L1518.3 788.9L1546.6 799.9M1376.2 739.6L1404.5 750.1L1432.8 759.9L1461.1 769.8L1489.4 779.9L1517.7 790.3L1546.0 801.2M1375.5 741.0L1403.8 751.5L1432.1 761.4L1460.4 771.2L1488.6 781.3L1516.9 791.7L1545.2 802.7M1374.7 742.5L1403.0 753.0L1431.3 762.9L1459.6 772.7L1487.9 782.8L1516.2 793.2L1544.5 804.2M1373.9 743.9L1402.2 754.5L1430.5 764.4L1458.8 774.2L1487.1 784.3L1515.4 794.7L1543.7 805.7M1373.1 745.4L1401.4 756.0L1429.7 765.9L1458.0 775.7L1486.3 785.8L1514.6 796.2L1542.9 807.2M1372.4 746.8L1400.7 757.4L1429.0 767.3L1457.3 777.1L1485.6 787.3L1513.9 797.6L1542.2 808.7M1371.7 748.1L1400.0 758.7L1428.3 768.6L1456.6 778.4L1484.9 788.6L1513.2 799.0L1541.5 810.0M1379.3 736.8L1372.8 749.1M1380.3 737.1L1373.7 749.5M1381.7 737.6L1375.1 750.0M1383.2 738.2L1376.6 750.6M1384.7 738.7L1378.1 751.2M1386.4 739.3L1379.8 751.8M1388.1 740.0L1381.5 752.4M1389.8 740.6L1383.2 753.1M1391.6 741.3L1385.1 753.8M1393.5 742.0L1386.9 754.5M1395.4 742.7L1388.8 755.2M1397.3 743.4L1390.8 755.9M1399.3 744.1L1392.7 756.7M1401.3 744.9L1394.8 757.4M1403.4 745.6L1396.8 758.2M1405.5 746.4L1398.9 759.0M1407.6 747.2L1401.0 759.8M1409.7 747.9L1403.1 760.6M1411.9 748.7L1405.3 761.4M1414.1 749.5L1407.5 762.1M1416.3 750.2L1409.7 762.9M1418.5 751.0L1411.9 763.6M1420.8 751.8L1414.2 764.4M1423.0 752.6L1416.5 765.2M1425.3 753.4L1418.8 766.0M1427.7 754.2L1421.1 766.8M1430.0 755.0L1423.4 767.6M1432.3 755.8L1425.8 768.4M1434.7 756.6L1428.1 769.2M1437.1 757.4L1430.5 770.0M1439.4 758.2L1432.9 770.8M1441.8 759.1L1435.3 771.7M1444.2 759.9L1437.7 772.5M1446.7 760.7L1440.1 773.3M1449.1 761.6L1442.5 774.2M1451.5 762.4L1445.0 775.0M1453.9 763.2L1447.4 775.8M1456.4 764.1L1449.8 776.7M1458.8 765.0L1452.3 777.6M1461.3 765.8L1454.7 778.4M1463.7 766.7L1457.2 779.3M1466.2 767.6L1459.6 780.2M1468.6 768.5L1462.1 781.1M1471.0 769.3L1464.5 781.9M1473.5 770.2L1467.0 782.8M1475.9 771.1L1469.4 783.7M1478.3 772.0L1471.8 784.6M1480.8 772.8L1474.3 785.4M1483.2 773.7L1476.7 786.3M1485.6 774.5L1479.1 787.2M1488.0 775.4L1481.5 788.0M1490.4 776.3L1483.9 788.9M1492.8 777.1L1486.3 789.7M1495.1 777.9L1488.6 790.6M1497.5 778.8L1491.0 791.4M1499.8 779.6L1493.3 792.2M1502.1 780.4L1495.6 793.1M1504.4 781.3L1497.9 793.9M1506.7 782.1L1500.2 794.7M1509.0 782.9L1502.5 795.5M1511.2 783.7L1504.7 796.3M1513.4 784.5L1506.9 797.2M1515.6 785.4L1509.1 798.0M1517.8 786.2L1511.3 798.9M1519.9 787.0L1513.4 799.7M1522.0 787.9L1515.6 800.6M1524.1 788.7L1517.6 801.4M1526.2 789.5L1519.7 802.2M1528.2 790.2L1521.7 803.0M1530.2 791.0L1523.7 803.7M1532.1 791.8L1525.6 804.5M1534.0 792.5L1527.5 805.2M1535.9 793.2L1529.4 806.0M1537.7 793.9L1531.2 806.7M1539.4 794.6L1533.0 807.3M1541.1 795.2L1534.7 808.0M1542.8 795.9L1536.3 808.6M1544.3 796.5L1537.9 809.3M1545.8 797.0L1539.3 809.8M1423.7 765.9L1454.3 776.5L1484.8 787.4L1515.3 798.6L1545.8 810.5M1423.3 766.8L1453.8 777.3L1484.3 788.3L1514.9 799.5L1545.4 811.4M1422.8 767.8L1453.3 778.3L1483.8 789.3L1514.3 800.5L1544.9 812.4M1422.2 768.9L1452.7 779.4L1483.2 790.4L1513.8 801.6L1544.3 813.5M1421.6 770.1L1452.1 780.6L1482.6 791.5L1513.2 802.8L1543.7 814.7M1420.9 771.3L1451.5 781.8L1482.0 792.7L1512.6 804.0L1543.1 815.9M1420.3 772.4L1450.9 783.0L1481.4 793.9L1512.0 805.2L1542.5 817.1M1419.8 773.5L1450.3 784.0L1480.9 795.0L1511.4 806.2L1542.0 818.2M1425.1 766.3L1420.9 774.4M1426.1 766.7L1421.9 774.7M1427.1 767.1L1422.9 775.1M1428.2 767.4L1424.1 775.5M1429.4 767.8L1425.2 775.9M1430.6 768.2L1426.4 776.3M1431.9 768.7L1427.7 776.7M1433.2 769.1L1429.0 777.2M1434.5 769.6L1430.4 777.6M1435.9 770.1L1431.8 778.1M1437.4 770.6L1433.2 778.6M1438.9 771.1L1434.7 779.1M1440.4 771.6L1436.2 779.6M1442.0 772.2L1437.8 780.2M1443.6 772.7L1439.5 780.7M1445.3 773.3L1441.2 781.3M1447.0 773.9L1442.9 781.9M1448.8 774.5L1444.7 782.5M1450.6 775.2L1446.5 783.2M1452.5 775.8L1448.3 783.8M1454.4 776.5L1450.2 784.5M1456.3 777.2L1452.2 785.2M1458.3 777.9L1454.2 785.9M1460.3 778.6L1456.2 786.6M1462.4 779.4L1458.2 787.4M1464.5 780.1L1460.3 788.1M1466.6 780.9L1462.4 788.9M1468.7 781.6L1464.6 789.7M1470.9 782.4L1466.7 790.4M1473.1 783.2L1468.9 791.2M1475.3 784.0L1471.2 792.0M1477.5 784.8L1473.4 792.8M1479.8 785.6L1475.6 793.6M1482.0 786.4L1477.9 794.4M1484.3 787.2L1480.1 795.2M1486.5 788.0L1482.4 796.0M1488.8 788.8L1484.7 796.8M1491.0 789.6L1486.9 797.7M1493.3 790.4L1489.2 798.5M1495.5 791.2L1491.4 799.3M1497.7 792.0L1493.6 800.1M1499.9 792.8L1495.8 800.8M1502.1 793.6L1498.0 801.6M1504.3 794.4L1500.1 802.4M1506.4 795.2L1502.3 803.2M1508.5 796.0L1504.4 804.0M1510.6 796.8L1506.4 804.8M1512.6 797.6L1508.5 805.6M1514.6 798.3L1510.5 806.4M1516.5 799.1L1512.4 807.2M1518.4 799.8L1514.3 807.9M1520.3 800.6L1516.2 808.6M1522.1 801.3L1518.0 809.4M1523.9 802.0L1519.8 810.1M1525.7 802.6L1521.5 810.7M1527.3 803.3L1523.2 811.4M1529.0 803.9L1524.9 812.0M1530.6 804.6L1526.5 812.7M1532.1 805.2L1528.0 813.3M1533.6 805.7L1529.5 813.9M1535.1 806.3L1531.0 814.4M1536.5 806.9L1532.4 815.0M1537.8 807.4L1533.7 815.5M1539.1 807.9L1535.0 816.0M1540.4 808.4L1536.3 816.5M1541.6 808.8L1537.5 817.0M1542.7 809.3L1538.6 817.4M1543.8 809.7L1539.7 817.9M1593.9 764.5L1619.3 774.1L1644.6 783.7L1670.0 793.3L1695.4 802.9L1720.7 812.6L1746.1 822.2L1771.5 831.8M1593.5 765.3L1618.8 775.0L1644.2 784.6L1669.6 794.2L1694.9 803.9L1720.3 813.5L1745.7 823.1L1771.0 832.8M1592.8 766.6L1618.2 776.3L1643.6 785.9L1668.9 795.6L1694.3 805.3L1719.6 814.9L1745.0 824.6L1770.4 834.2M1592.1 768.0L1617.5 777.7L1642.8 787.4L1668.2 797.1L1693.6 806.8L1718.9 816.5L1744.3 826.2L1769.6 835.9M1591.4 769.5L1616.7 779.2L1642.1 789.0L1667.5 798.7L1692.8 808.4L1718.2 818.1L1743.5 827.8L1768.9 837.6M1590.6 771.0L1616.0 780.8L1641.3 790.5L1666.7 800.3L1692.0 810.0L1717.4 819.8L1742.8 829.5L1768.1 839.3M1589.9 772.6L1615.2 782.3L1640.6 792.1L1665.9 801.9L1691.3 811.7L1716.6 821.5L1742.0 831.2L1767.3 841.0M1589.1 774.0L1614.5 783.8L1639.8 793.6L1665.2 803.5L1690.5 813.3L1715.9 823.1L1741.2 832.9L1766.6 842.7M1588.5 775.4L1613.8 785.2L1639.2 795.1L1664.5 804.9L1689.9 814.7L1715.2 824.6L1740.6 834.4L1765.9 844.2M1595.2 765.0L1589.8 776.0M1596.2 765.3L1590.7 776.4M1597.6 765.9L1592.2 776.9M1599.2 766.5L1593.7 777.5M1600.8 767.1L1595.3 778.2M1602.4 767.7L1597.0 778.8M1604.1 768.4L1598.7 779.4M1605.8 769.0L1600.4 780.1M1607.6 769.7L1602.1 780.8M1609.4 770.3L1603.9 781.5M1611.1 771.0L1605.7 782.2M1612.9 771.7L1607.5 782.9M1614.8 772.4L1609.3 783.6M1616.6 773.1L1611.1 784.3M1618.5 773.8L1613.0 785.0M1620.3 774.5L1614.8 785.7M1622.2 775.2L1616.7 786.5M1624.1 775.9L1618.6 787.2M1626.0 776.6L1620.5 787.9M1627.9 777.4L1622.4 788.7M1629.8 778.1L1624.3 789.4M1631.8 778.8L1626.3 790.2M1633.7 779.6L1628.2 790.9M1635.7 780.3L1630.2 791.7M1637.6 781.1L1632.1 792.4M1639.6 781.8L1634.1 793.2M1641.6 782.5L1636.1 794.0M1643.5 783.3L1638.0 794.7M1645.5 784.1L1640.0 795.5M1647.5 784.8L1642.0 796.3M1649.5 785.6L1644.0 797.1M1651.5 786.3L1646.0 797.8M1653.5 787.1L1648.0 798.6M1655.6 787.9L1650.0 799.4M1657.6 788.6L1652.1 800.2M1659.6 789.4L1654.1 801.0M1661.6 790.2L1656.1 801.7M1663.6 790.9L1658.1 802.5M1665.7 791.7L1660.2 803.3M1667.7 792.5L1662.2 804.1M1669.7 793.2L1664.2 804.9M1671.8 794.0L1666.3 805.7M1673.8 794.8L1668.3 806.5M1675.9 795.6L1670.3 807.3M1677.9 796.3L1672.4 808.1M1679.9 797.1L1674.4 808.9M1682.0 797.9L1676.5 809.6M1684.0 798.7L1678.5 810.4M1686.1 799.4L1680.5 811.2M1688.1 800.2L1682.6 812.0M1690.2 801.0L1684.6 812.8M1692.2 801.8L1686.7 813.6M1694.2 802.5L1688.7 814.4M1696.3 803.3L1690.7 815.2M1698.3 804.1L1692.8 816.0M1700.3 804.8L1694.8 816.8M1702.4 805.6L1696.8 817.6M1704.4 806.4L1698.9 818.3M1706.4 807.2L1700.9 819.1M1708.5 807.9L1702.9 819.9M1710.5 808.7L1704.9 820.7M1712.5 809.5L1706.9 821.5M1714.5 810.2L1709.0 822.3M1716.5 811.0L1711.0 823.0M1718.5 811.7L1713.0 823.8M1720.5 812.5L1715.0 824.6M1722.5 813.2L1716.9 825.4M1724.5 814.0L1718.9 826.1M1726.5 814.8L1720.9 826.9M1728.4 815.5L1722.9 827.7M1730.4 816.2L1724.8 828.4M1732.4 817.0L1726.8 829.2M1734.3 817.7L1728.7 829.9M1736.2 818.5L1730.7 830.7M1738.2 819.2L1732.6 831.4M1740.1 819.9L1734.5 832.2M1742.0 820.6L1736.4 832.9M1743.9 821.4L1738.3 833.7M1745.8 822.1L1740.2 834.4M1747.7 822.8L1742.1 835.1M1749.5 823.5L1744.0 835.9M1751.4 824.2L1745.8 836.6M1753.2 824.9L1747.6 837.3M1755.0 825.6L1749.4 838.0M1756.8 826.3L1751.2 838.7M1758.6 826.9L1753.0 839.4M1760.4 827.6L1754.8 840.0M1762.1 828.3L1756.5 840.7M1763.8 828.9L1758.2 841.4M1765.4 829.5L1759.9 842.0M1767.1 830.1L1761.5 842.7M1768.6 830.7L1763.1 843.3M1586.1 775.5L1611.5 785.4L1636.8 795.2L1662.2 805.1L1687.5 814.9L1712.9 824.8L1738.2 834.7L1763.6 844.5M1585.7 776.4L1611.1 786.2L1636.4 796.1L1661.8 806.0L1687.1 815.9L1712.4 825.7L1737.8 835.6L1763.1 845.5M1585.2 777.5L1610.5 787.4L1635.8 797.3L1661.2 807.2L1686.5 817.1L1711.9 827.0L1737.2 836.9L1762.6 846.7M1584.6 778.7L1609.9 788.6L1635.2 798.6L1660.6 808.5L1685.9 818.4L1711.3 828.3L1736.6 838.2L1761.9 848.2M1583.9 780.0L1609.2 790.0L1634.6 799.9L1659.9 809.9L1685.2 819.8L1710.6 829.8L1735.9 839.7L1761.3 849.7M1583.2 781.5L1608.5 791.4L1633.9 801.4L1659.2 811.4L1684.5 821.3L1709.9 831.3L1735.2 841.3L1760.5 851.3M1582.5 782.9L1607.8 792.9L1633.1 802.9L1658.5 812.9L1683.8 822.9L1709.1 832.9L1734.5 842.9L1759.8 852.9M1581.7 784.4L1607.0 794.5L1632.4 804.5L1657.7 814.5L1683.0 824.6L1708.4 834.6L1733.7 844.6L1759.0 854.7M1580.9 786.0L1606.3 796.1L1631.6 806.1L1656.9 816.2L1682.2 826.3L1707.6 836.3L1732.9 846.4L1758.2 856.5M1580.1 787.6L1605.5 797.7L1630.8 807.8L1656.1 817.9L1681.4 828.0L1706.8 838.1L1732.1 848.2L1757.4 858.3M1579.3 789.2L1604.6 799.4L1630.0 809.5L1655.3 819.6L1680.6 829.8L1705.9 839.9L1731.3 850.0L1756.6 860.2M1578.5 790.9L1603.8 801.1L1629.1 811.2L1654.5 821.4L1679.8 831.5L1705.1 841.7L1730.4 851.9L1755.7 862.0M1577.7 792.5L1603.0 802.7L1628.3 812.9L1653.6 823.1L1678.9 833.3L1704.3 843.5L1729.6 853.7L1754.9 863.9M1576.9 794.2L1602.2 804.4L1627.5 814.6L1652.8 824.9L1678.1 835.1L1703.4 845.3L1728.7 855.6L1754.1 865.8M1576.1 795.8L1601.4 806.1L1626.7 816.3L1652.0 826.6L1677.3 836.9L1702.6 847.1L1727.9 857.4L1753.2 867.6M1575.3 797.4L1600.6 807.7L1625.9 818.0L1651.2 828.3L1676.5 838.6L1701.8 848.9L1727.1 859.2L1752.4 869.5M1574.5 799.0L1599.8 809.3L1625.1 819.6L1650.4 829.9L1675.7 840.3L1701.0 850.6L1726.3 860.9L1751.6 871.2M1573.7 800.5L1599.0 810.8L1624.3 821.2L1649.6 831.6L1674.9 841.9L1700.2 852.3L1725.5 862.6L1750.8 873.0M1573.0 802.0L1598.3 812.3L1623.6 822.7L1648.9 833.1L1674.2 843.5L1699.5 853.9L1724.8 864.2L1750.1 874.6M1572.3 803.3L1597.6 813.8L1622.9 824.2L1648.2 834.6L1673.5 845.0L1698.8 855.4L1724.1 865.8L1749.4 876.2M1571.7 804.6L1597.0 815.1L1622.3 825.5L1647.6 836.0L1672.8 846.4L1698.1 856.8L1723.4 867.3L1748.7 877.7M1571.1 805.8L1596.4 816.3L1621.7 826.8L1647.0 837.2L1672.2 847.7L1697.5 858.1L1722.8 868.6L1748.1 879.1M1587.5 776.0L1572.2 806.7M1588.4 776.4L1573.2 807.1M1590.0 777.0L1574.8 807.7M1591.7 777.7L1576.5 808.4M1593.5 778.4L1578.3 809.2M1595.3 779.1L1580.1 809.9M1597.2 779.8L1582.0 810.7M1599.1 780.6L1583.9 811.5M1601.1 781.3L1585.8 812.3M1603.1 782.1L1587.8 813.1M1605.1 782.9L1589.8 814.0M1607.1 783.7L1591.9 814.8M1609.2 784.5L1593.9 815.7M1611.3 785.3L1596.0 816.5M1613.4 786.1L1598.1 817.4M1615.5 786.9L1600.2 818.3M1617.6 787.8L1602.4 819.2M1619.8 788.6L1604.5 820.0M1622.0 789.5L1606.7 820.9M1624.2 790.3L1608.9 821.8M1626.3 791.2L1611.0 822.7M1628.6 792.0L1613.2 823.7M1630.8 792.9L1615.5 824.6M1633.0 793.7L1617.7 825.5M1635.2 794.6L1619.9 826.4M1637.5 795.5L1622.2 827.3M1639.7 796.4L1624.4 828.3M1642.0 797.2L1626.7 829.2M1644.3 798.1L1628.9 830.2M1646.6 799.0L1631.2 831.1M1648.8 799.9L1633.5 832.0M1651.1 800.8L1635.8 833.0M1653.4 801.7L1638.1 833.9M1655.7 802.6L1640.4 834.9M1658.0 803.5L1642.7 835.8M1660.3 804.4L1645.0 836.8M1662.6 805.3L1647.3 837.7M1665.0 806.2L1649.6 838.7M1667.3 807.1L1651.9 839.7M1669.6 808.0L1654.2 840.6M1671.9 808.9L1656.5 841.6M1674.2 809.8L1658.8 842.5M1676.6 810.7L1661.1 843.5M1678.9 811.6L1663.5 844.4M1681.2 812.5L1665.8 845.4M1683.5 813.4L1668.1 846.4M1685.8 814.3L1670.4 847.3M1688.1 815.2L1672.7 848.3M1690.5 816.1L1675.0 849.2M1692.8 817.0L1677.3 850.2M1695.1 817.9L1679.6 851.1M1697.4 818.8L1681.9 852.1M1699.7 819.7L1684.2 853.0M1702.0 820.6L1686.5 854.0M1704.2 821.5L1688.8 854.9M1706.5 822.3L1691.1 855.9M1708.8 823.2L1693.3 856.8M1711.1 824.1L1695.6 857.7M1713.3 825.0L1697.8 858.7M1715.6 825.9L1700.1 859.6M1717.8 826.7L1702.3 860.5M1720.1 827.6L1704.6 861.4M1722.3 828.5L1706.8 862.4M1724.5 829.3L1709.0 863.3M1726.7 830.2L1711.2 864.2M1728.9 831.0L1713.4 865.1M1731.1 831.9L1715.5 866.0M1733.2 832.7L1717.7 866.9M1735.4 833.5L1719.8 867.8M1737.5 834.4L1722.0 868.6M1739.6 835.2L1724.1 869.5M1741.7 836.0L1726.2 870.4M1743.8 836.8L1728.2 871.2M1745.8 837.6L1730.3 872.1M1747.8 838.4L1732.3 872.9M1749.8 839.2L1734.3 873.7M1751.8 839.9L1736.3 874.6M1753.7 840.7L1738.2 875.4M1755.6 841.4L1740.1 876.1M1757.5 842.2L1741.9 876.9M1759.3 842.9L1743.7 877.7M1761.0 843.5L1745.4 878.4M1568.6 806.1L1596.7 817.8L1624.8 829.4L1652.9 841.1L1681.0 852.7L1709.1 864.3L1737.2 876.0M1568.2 807.0L1596.3 818.6L1624.4 830.3L1652.5 842.0L1680.6 853.6L1708.6 865.3L1736.7 876.9M1567.7 808.1L1595.7 819.8L1623.8 831.5L1651.9 843.2L1680.0 854.8L1708.1 866.5L1736.2 878.2M1567.0 809.3L1595.1 821.1L1623.2 832.8L1651.3 844.5L1679.4 856.2L1707.4 867.9L1735.5 879.6M1566.4 810.7L1594.5 822.4L1622.5 834.2L1650.6 845.9L1678.7 857.6L1706.8 869.4L1734.8 881.1M1565.7 812.1L1593.8 823.9L1621.8 835.6L1649.9 847.4L1678.0 859.2L1706.1 870.9L1734.1 882.7M1565.0 813.5L1593.0 825.3L1621.1 837.1L1649.2 848.9L1677.3 860.7L1705.3 872.5L1733.4 884.3M1564.3 814.9L1592.3 826.8L1620.4 838.6L1648.5 850.5L1676.5 862.3L1704.6 874.1L1732.7 886.0M1563.6 816.3L1591.6 828.2L1619.7 840.1L1647.8 851.9L1675.8 863.8L1703.9 875.7L1732.0 887.5M1562.9 817.6L1591.0 829.5L1619.0 841.4L1647.1 853.3L1675.2 865.2L1703.2 877.1L1731.3 889.0M1562.3 818.8L1590.4 830.8L1618.4 842.7L1646.5 854.6L1674.6 866.5L1702.6 878.4L1730.7 890.4M1570.0 806.7L1563.5 819.6M1570.9 807.1L1564.5 820.1M1572.3 807.6L1565.8 820.6M1573.7 808.2L1567.3 821.2M1575.2 808.9L1568.8 821.9M1576.9 809.6L1570.4 822.6M1578.5 810.3L1572.1 823.3M1580.3 811.0L1573.8 824.0M1582.1 811.7L1575.6 824.8M1583.9 812.5L1577.4 825.6M1585.7 813.2L1579.3 826.3M1587.7 814.0L1581.2 827.2M1589.6 814.8L1583.1 828.0M1591.6 815.7L1585.1 828.8M1593.6 816.5L1587.1 829.7M1595.6 817.3L1589.2 830.5M1597.7 818.2L1591.2 831.4M1599.8 819.1L1593.3 832.3M1601.9 819.9L1595.5 833.2M1604.1 820.8L1597.6 834.1M1606.3 821.7L1599.8 835.1M1608.5 822.7L1602.0 836.0M1610.7 823.6L1604.2 836.9M1612.9 824.5L1606.4 837.9M1615.2 825.4L1608.7 838.8M1617.4 826.4L1611.0 839.8M1619.7 827.3L1613.3 840.8M1622.0 828.3L1615.6 841.8M1624.4 829.2L1617.9 842.7M1626.7 830.2L1620.2 843.7M1629.0 831.2L1622.5 844.7M1631.4 832.2L1624.9 845.7M1633.8 833.1L1627.3 846.7M1636.1 834.1L1629.6 847.7M1638.5 835.1L1632.0 848.8M1640.9 836.1L1634.4 849.8M1643.3 837.1L1636.8 850.8M1645.7 838.1L1639.2 851.8M1648.1 839.1L1641.6 852.8M1650.5 840.1L1644.0 853.8M1652.9 841.1L1646.4 854.9M1655.3 842.1L1648.8 855.9M1657.7 843.1L1651.2 856.9M1660.1 844.1L1653.6 857.9M1662.5 845.1L1656.0 859.0M1664.9 846.1L1658.4 860.0M1667.3 847.1L1660.8 861.0M1669.7 848.0L1663.2 862.0M1672.1 849.0L1665.6 863.0M1674.5 850.0L1667.9 864.0M1676.8 851.0L1670.3 865.0M1679.2 852.0L1672.7 866.0M1681.5 852.9L1675.0 867.0M1683.9 853.9L1677.3 868.0M1686.2 854.9L1679.7 869.0M1688.5 855.8L1682.0 870.0M1690.8 856.8L1684.2 871.0M1693.1 857.7L1686.5 871.9M1695.3 858.6L1688.8 872.9M1697.5 859.6L1691.0 873.8M1699.8 860.5L1693.2 874.8M1702.0 861.4L1695.4 875.7M1704.1 862.3L1697.6 876.6M1706.3 863.2L1699.7 877.5M1708.4 864.1L1701.8 878.4M1710.5 864.9L1703.9 879.3M1712.6 865.8L1706.0 880.2M1714.6 866.6L1708.0 881.1M1716.6 867.5L1710.0 881.9M1718.6 868.3L1712.0 882.8M1720.5 869.1L1713.9 883.6M1722.4 869.9L1715.8 884.4M1724.3 870.7L1717.7 885.2M1726.1 871.4L1719.5 885.9M1727.9 872.1L1721.3 886.7M1729.6 872.8L1723.0 887.4M1731.2 873.5L1724.6 888.1M1732.8 874.2L1726.2 888.8M1734.3 874.8L1727.7 889.4M1735.7 875.4L1729.1 890.0M1614.1 839.2L1644.3 852.0L1674.6 864.8L1704.9 877.6L1735.2 890.5M1613.6 840.0L1643.9 852.9L1674.2 865.7L1704.5 878.6L1734.7 891.4M1613.2 841.0L1643.4 853.9L1673.7 866.8L1704.0 879.6L1734.2 892.5M1612.7 842.1L1642.9 855.0L1673.2 867.9L1703.5 880.8L1733.7 893.7M1612.1 843.2L1642.4 856.2L1672.6 869.1L1702.9 882.0L1733.2 894.9M1611.5 844.4L1641.8 857.4L1672.1 870.3L1702.3 883.3L1732.6 896.2M1611.0 845.6L1641.2 858.6L1671.5 871.5L1701.7 884.5L1732.0 897.5M1610.4 846.7L1640.7 859.7L1671.0 872.7L1701.2 885.7L1731.5 898.7M1610.0 847.7L1640.2 860.7L1670.5 873.7L1700.7 886.7L1731.0 899.8M1615.4 839.7L1611.3 848.3M1616.4 840.1L1612.2 848.7M1617.4 840.6L1613.3 849.2M1618.5 841.0L1614.4 849.6M1619.6 841.5L1615.5 850.1M1620.8 842.0L1616.7 850.6M1622.1 842.5L1617.9 851.2M1623.3 843.1L1619.2 851.7M1624.7 843.7L1620.5 852.3M1626.0 844.2L1621.9 852.9M1627.5 844.8L1623.3 853.5M1628.9 845.5L1624.8 854.1M1630.4 846.1L1626.3 854.8M1632.0 846.8L1627.9 855.4M1633.6 847.4L1629.5 856.1M1635.3 848.1L1631.1 856.8M1636.9 848.9L1632.8 857.6M1638.7 849.6L1634.5 858.3M1640.5 850.3L1636.3 859.1M1642.3 851.1L1638.1 859.9M1644.1 851.9L1640.0 860.7M1646.0 852.7L1641.9 861.5M1648.0 853.5L1643.8 862.3M1650.0 854.4L1645.8 863.2M1652.0 855.2L1647.8 864.0M1654.0 856.1L1649.9 864.9M1656.1 857.0L1651.9 865.8M1658.2 857.9L1654.0 866.7M1660.3 858.8L1656.2 867.6M1662.5 859.7L1658.3 868.6M1664.6 860.6L1660.5 869.5M1666.8 861.5L1662.7 870.4M1669.0 862.4L1664.9 871.4M1671.2 863.4L1667.1 872.3M1673.4 864.3L1669.3 873.3M1675.7 865.3L1671.5 874.2M1677.9 866.2L1673.7 875.2M1680.1 867.1L1675.9 876.1M1682.3 868.1L1678.1 877.1M1684.5 869.0L1680.3 878.0M1686.7 869.9L1682.5 879.0M1688.9 870.9L1684.7 879.9M1691.0 871.8L1686.9 880.8M1693.1 872.7L1689.0 881.8M1695.2 873.6L1691.1 882.7M1697.3 874.4L1693.1 883.5M1699.4 875.3L1695.2 884.4M1701.4 876.2L1697.2 885.3M1703.3 877.0L1699.2 886.1M1705.3 877.8L1701.1 887.0M1707.2 878.6L1703.0 887.8M1709.0 879.4L1704.9 888.6M1710.8 880.2L1706.7 889.4M1712.6 880.9L1708.4 890.1M1714.3 881.7L1710.2 890.9M1716.0 882.4L1711.8 891.6M1717.7 883.1L1713.5 892.3M1719.3 883.7L1715.1 893.0M1720.8 884.4L1716.6 893.7M1722.3 885.0L1718.1 894.3M1723.7 885.6L1719.6 894.9M1725.1 886.2L1721.0 895.5M1726.5 886.8L1722.3 896.1M1727.8 887.4L1723.6 896.7M1729.1 887.9L1724.9 897.2M1730.3 888.4L1726.1 897.7M1731.4 888.9L1727.2 898.2M1732.5 889.4L1728.4 898.7M1733.6 889.8L1729.4 899.2" stroke="#808080" stroke-width="1" fill="none" shape-rendering="crispEdges"/><path d="M444.0 448.9L564.7 534.9" stroke="#808080" stroke-width="3.2" fill="none"/><path d="M433.4 510.2L578.5 478.3" stroke="#808080" stroke-width="3.2" fill="none"/><path d="M723.5 508.6L765.8 579.0" stroke="#808080" stroke-width="2.6" fill="none"/><path d="M702.1 567.5L790.9 524.2" stroke="#808080" stroke-width="2.6" fill="none"/><path d="M892.6 548.4L936.5 617.5" stroke="#808080" stroke-width="2.4" fill="none"/><path d="M868.1 600.7L959.9 565.2" stroke="#808080" stroke-width="2.4" fill="none"/><path d="M357.0 432.9l2.3 -2.6M358.2 510.8l2.3 -2.6M362.2 433.2l2.3 -2.6M363.4 511.2l2.3 -2.6M367.4 433.4l2.3 -2.6M368.6 511.6l2.3 -2.6M372.6 433.7l2.3 -2.6M373.8 512.0l2.3 -2.6M377.8 433.9l2.3 -2.6M379.0 512.3l2.3 -2.6M383.0 434.2l2.3 -2.6M384.2 512.7l2.3 -2.6M388.2 434.4l2.3 -2.6M389.4 513.1l2.3 -2.6M393.4 434.7l2.3 -2.6M394.6 513.8l2.3 -2.6M398.6 434.9l2.3 -2.6M399.8 514.8l2.3 -2.6M403.8 435.3l2.3 -2.6M405.0 515.8l2.3 -2.6M409.0 435.7l2.3 -2.6M410.2 516.7l2.3 -2.6M414.2 436.1l2.3 -2.6M415.4 517.7l2.3 -2.6M419.4 436.5l2.3 -2.6M420.6 518.7l2.3 -2.6M424.6 436.8l2.3 -2.6M425.8 519.6l2.3 -2.6M429.8 437.2l2.3 -2.6M431.0 520.6l2.3 -2.6M435.0 437.6l2.3 -2.6M436.2 521.6l2.3 -2.6M440.2 438.0l2.3 -2.6M441.4 522.5l2.3 -2.6M445.4 438.8l2.3 -2.6M446.6 523.5l2.3 -2.6M450.6 439.5l2.3 -2.6M451.8 524.4l2.3 -2.6M455.8 440.3l2.3 -2.6M457.0 525.3l2.3 -2.6M461.0 441.1l2.3 -2.6M462.2 526.2l2.3 -2.6M466.2 441.8l2.3 -2.6M467.4 527.1l2.3 -2.6M471.4 442.6l2.3 -2.6M472.6 528.0l2.3 -2.6M476.6 443.3l2.3 -2.6M477.8 528.9l2.3 -2.6M481.8 444.1l2.3 -2.6M483.0 529.9l2.3 -2.6M487.0 444.9l2.3 -2.6M488.2 530.8l2.3 -2.6M492.2 445.8l2.3 -2.6M493.4 531.7l2.3 -2.6M497.4 447.0l2.3 -2.6M498.6 532.6l2.3 -2.6M502.6 448.1l2.3 -2.6M503.8 533.5l2.3 -2.6M507.8 449.3l2.3 -2.6M509.0 534.5l2.3 -2.6M513.0 450.5l2.3 -2.6M514.2 535.4l2.3 -2.6M518.2 451.7l2.3 -2.6M519.4 536.3l2.3 -2.6M523.4 452.8l2.3 -2.6M524.6 537.3l2.3 -2.6M527.6 453.8l2.3 -2.6M528.8 538.0l2.3 -2.6M531.8 454.7l2.3 -2.6M533.0 538.8l2.3 -2.6M536.0 455.7l2.3 -2.6M537.2 539.5l2.3 -2.6M540.2 456.7l2.3 -2.6M541.4 540.3l2.3 -2.6M544.4 458.0l2.3 -2.6M545.6 541.0l2.3 -2.6M548.6 459.2l2.3 -2.6M549.8 541.8l2.3 -2.6M552.8 460.5l2.3 -2.6M554.0 542.5l2.3 -2.6M557.0 461.8l2.3 -2.6M558.2 543.4l2.3 -2.6M561.2 463.1l2.3 -2.6M562.4 544.5l2.3 -2.6M565.4 464.4l2.3 -2.6M566.6 545.5l2.3 -2.6M569.6 465.7l2.3 -2.6M570.8 546.6l2.3 -2.6M573.8 467.0l2.3 -2.6M575.0 547.6l2.3 -2.6M578.0 468.3l2.3 -2.6M579.2 548.7l2.3 -2.6M582.2 469.4l2.3 -2.6M583.4 549.7l2.3 -2.6M586.4 470.3l2.3 -2.6M587.6 550.9l2.3 -2.6M590.6 471.1l2.3 -2.6M591.8 552.0l2.3 -2.6M594.8 472.0l2.3 -2.6M596.0 553.1l2.3 -2.6M599.0 472.8l2.3 -2.6M600.2 554.3l2.3 -2.6M603.2 473.6l2.3 -2.6M604.4 555.4l2.3 -2.6M607.4 474.5l2.3 -2.6M608.6 556.6l2.3 -2.6M611.6 475.3l2.3 -2.6M612.8 557.7l2.3 -2.6M615.8 476.2l2.3 -2.6M617.0 558.8l2.3 -2.6M620.0 477.0l2.3 -2.6M621.2 560.0l2.3 -2.6M624.2 477.8l2.3 -2.6M625.4 561.2l2.3 -2.6M628.4 478.7l2.3 -2.6M629.6 562.3l2.3 -2.6M632.6 479.5l2.3 -2.6M633.8 563.5l2.3 -2.6M636.8 480.4l2.3 -2.6M638.0 564.6l2.3 -2.6M641.0 481.2l2.3 -2.6M642.2 565.8l2.3 -2.6M645.2 482.1l2.3 -2.6M646.4 567.0l2.3 -2.6M649.4 482.9l2.3 -2.6M650.6 568.1l2.3 -2.6M653.6 483.8l2.3 -2.6M654.8 569.3l2.3 -2.6M657.8 484.6l2.3 -2.6M659.0 570.4l2.3 -2.6M662.0 485.5l2.3 -2.6M663.2 571.6l2.3 -2.6M666.2 486.4l2.3 -2.6M667.4 572.7l2.3 -2.6M670.4 487.2l2.3 -2.6M671.6 573.4l2.3 -2.6M674.6 488.1l2.3 -2.6M675.8 574.1l2.3 -2.6M678.8 489.0l2.3 -2.6M680.0 574.7l2.3 -2.6M683.0 489.8l2.3 -2.6M684.2 575.4l2.3 -2.6M687.2 490.7l2.3 -2.6M688.4 576.1l2.3 -2.6M691.4 491.5l2.3 -2.6M692.6 576.7l2.3 -2.6M695.6 492.4l2.3 -2.6M696.8 577.4l2.3 -2.6M699.8 493.3l2.3 -2.6M701.0 578.0l2.3 -2.6M704.0 494.1l2.3 -2.6M705.2 578.7l2.3 -2.6M708.2 494.9l2.3 -2.5M709.4 579.4l2.3 -2.5M712.4 495.8l2.3 -2.5M713.6 580.0l2.3 -2.5M716.6 496.6l2.2 -2.5M717.8 580.7l2.2 -2.5M720.8 497.4l2.2 -2.5M722.0 581.4l2.2 -2.5M725.0 498.3l2.2 -2.4M726.2 582.0l2.2 -2.4M729.2 499.1l2.2 -2.4M730.4 582.7l2.2 -2.4M733.4 499.9l2.1 -2.4M734.6 583.4l2.1 -2.4M737.6 500.8l2.1 -2.3M738.8 584.0l2.1 -2.3M741.8 501.7l2.1 -2.3M743.0 584.7l2.1 -2.3M746.0 502.7l2.1 -2.3M747.2 585.5l2.1 -2.3M750.2 503.7l2.0 -2.3M751.4 586.3l2.0 -2.3M754.4 504.8l2.0 -2.2M755.6 587.1l2.0 -2.2M758.6 505.8l2.0 -2.2M759.8 587.9l2.0 -2.2M762.8 506.8l2.0 -2.2M767.0 507.8l1.9 -2.2M771.2 508.9l1.9 -2.1M775.4 509.9l1.9 -2.1M779.6 510.9l1.9 -2.1M783.8 511.9l1.8 -2.0M788.0 513.0l1.8 -2.0M792.2 514.0l1.8 -2.0M796.4 515.0l1.8 -2.0M800.6 516.0l1.7 -1.9M804.8 517.1l1.7 -1.9M809.0 518.1l1.7 -1.9M813.2 519.1l1.7 -1.8M817.4 520.1l1.6 -1.8M821.6 521.2l1.6 -1.8M825.8 522.2l1.6 -1.8M830.0 523.2l1.6 -1.7M834.2 524.2l1.5 -1.7M838.4 525.3l1.5 -1.7M842.6 526.3l1.5 -1.6M846.8 527.2l1.5 -1.6M851.0 528.2l1.4 -1.6M855.2 529.2l1.4 -1.6M859.4 530.2l1.4 -1.5M863.6 531.1l1.4 -1.5M867.8 532.1l1.3 -1.5M872.0 533.1l1.3 -1.5M876.2 534.1l1.3 -1.4M880.4 535.1l1.3 -1.4M884.6 536.0l1.2 -1.4M888.8 537.0l1.2 -1.3M893.0 538.0l1.2 -1.3M897.2 539.0l1.2 -1.3M901.4 539.9l1.1 -1.3M905.6 540.9l1.1 -1.2M909.8 541.9l1.1 -1.2M914.0 542.9l1.1 -1.2M918.2 543.8l1.0 -1.1M922.4 544.8l1.0 -1.1M926.6 545.8l1.0 -1.1M930.8 546.8l1.0 -1.1M935.0 547.7l0.9 -1.0M939.2 548.7l0.9 -1.0M943.4 549.8l0.9 -1.0M947.6 550.9l0.9 -0.9M951.8 552.0l0.8 -0.9M956.0 553.0l0.8 -0.9M960.2 554.1l0.8 -0.9M964.4 555.2l0.8 -0.8M968.6 556.3l0.7 -0.8M972.8 557.4l0.7 -0.8M977.0 558.5l0.7 -0.8M981.2 559.6l0.7 -0.7M985.4 560.6l0.6 -0.7M989.6 561.7l0.6 -0.7M993.8 562.8l0.6 -0.6M998.0 563.9l0.6 -0.6" stroke="#fff" stroke-width="1" fill="none" shape-rendering="crispEdges"/><path d="M366.3 509.8L375.1 649.5" stroke="#808080" stroke-width="1" stroke-dasharray="17 1 9 1" stroke-dashoffset="0" fill="none" shape-rendering="crispEdges"/><path d="M372.3 510.5L380.0 634.3" stroke="#808080" stroke-width="1" stroke-dasharray="20 1 11 1" stroke-dashoffset="5" fill="none" shape-rendering="crispEdges"/><path d="M378.2 511.1L384.9 619.0" stroke="#808080" stroke-width="1" stroke-dasharray="23 1 13 1" stroke-dashoffset="10" fill="none" shape-rendering="crispEdges"/><path d="M384.2 511.8L389.8 603.8" stroke="#808080" stroke-width="1" stroke-dasharray="26 1 15 1" stroke-dashoffset="15" fill="none" shape-rendering="crispEdges"/><path d="M390.2 512.5L394.7 588.6" stroke="#808080" stroke-width="1" stroke-dasharray="29 1 17 1" stroke-dashoffset="20" fill="none" shape-rendering="crispEdges"/><path d="M568.5 548.7L580.5 688.5" stroke="#808080" stroke-width="1" stroke-dasharray="17 1 9 1" stroke-dashoffset="0" fill="none" shape-rendering="crispEdges"/><path d="M576.5 550.0L586.5 673.2" stroke="#808080" stroke-width="1" stroke-dasharray="20 1 11 1" stroke-dashoffset="5" fill="none" shape-rendering="crispEdges"/><path d="M584.4 551.4L592.5 658.0" stroke="#808080" stroke-width="1" stroke-dasharray="23 1 13 1" stroke-dashoffset="10" fill="none" shape-rendering="crispEdges"/><path d="M592.3 552.7L598.5 642.8" stroke="#808080" stroke-width="1" stroke-dasharray="26 1 15 1" stroke-dashoffset="15" fill="none" shape-rendering="crispEdges"/><path d="M600.3 554.0L604.5 627.5" stroke="#808080" stroke-width="1" stroke-dasharray="29 1 17 1" stroke-dashoffset="20" fill="none" shape-rendering="crispEdges"/><path d="M773.9 592.4L783.9 730.8" stroke="#808080" stroke-width="1" stroke-dasharray="17 1 9 1" stroke-dashoffset="0" fill="none" shape-rendering="crispEdges"/><path d="M782.0 593.0L790.8 716.0" stroke="#808080" stroke-width="1" stroke-dasharray="20 1 11 1" stroke-dashoffset="5" fill="none" shape-rendering="crispEdges"/><path d="M790.2 593.6L797.7 701.3" stroke="#808080" stroke-width="1" stroke-dasharray="23 1 13 1" stroke-dashoffset="10" fill="none" shape-rendering="crispEdges"/><path d="M798.4 594.3L804.6 686.5" stroke="#808080" stroke-width="1" stroke-dasharray="26 1 15 1" stroke-dashoffset="15" fill="none" shape-rendering="crispEdges"/><path d="M806.5 594.9L811.5 671.8" stroke="#808080" stroke-width="1" stroke-dasharray="29 1 17 1" stroke-dashoffset="20" fill="none" shape-rendering="crispEdges"/><path d="M970.5 641.6L983.5 787.5" stroke="#808080" stroke-width="1" stroke-dasharray="17 1 9 1" stroke-dashoffset="0" fill="none" shape-rendering="crispEdges"/><path d="M980.4 644.2L991.3 773.0" stroke="#808080" stroke-width="1" stroke-dasharray="20 1 11 1" stroke-dashoffset="5" fill="none" shape-rendering="crispEdges"/><path d="M990.2 646.9L999.0 758.4" stroke="#808080" stroke-width="1" stroke-dasharray="23 1 13 1" stroke-dashoffset="10" fill="none" shape-rendering="crispEdges"/><path d="M1000.1 649.6L1006.8 743.8" stroke="#808080" stroke-width="1" stroke-dasharray="26 1 15 1" stroke-dashoffset="15" fill="none" shape-rendering="crispEdges"/><path d="M1010.0 652.2L1014.6 729.3" stroke="#808080" stroke-width="1" stroke-dasharray="29 1 17 1" stroke-dashoffset="20" fill="none" shape-rendering="crispEdges"/><path d="M1166.3 694.9L1178.3 841.4" stroke="#808080" stroke-width="1" stroke-dasharray="17 1 9 1" stroke-dashoffset="0" fill="none" shape-rendering="crispEdges"/><path d="M1176.9 697.8L1187.2 826.8" stroke="#808080" stroke-width="1" stroke-dasharray="20 1 11 1" stroke-dashoffset="5" fill="none" shape-rendering="crispEdges"/><path d="M1187.4 700.8L1196.0 812.2" stroke="#808080" stroke-width="1" stroke-dasharray="23 1 13 1" stroke-dashoffset="10" fill="none" shape-rendering="crispEdges"/><path d="M1198.0 703.7L1204.9 797.6" stroke="#808080" stroke-width="1" stroke-dasharray="26 1 15 1" stroke-dashoffset="15" fill="none" shape-rendering="crispEdges"/><path d="M1208.6 706.6L1213.8 783.0" stroke="#808080" stroke-width="1" stroke-dasharray="29 1 17 1" stroke-dashoffset="20" fill="none" shape-rendering="crispEdges"/><path d="M1357.6 758.5L1370.6 904.0" stroke="#808080" stroke-width="1" stroke-dasharray="17 1 9 1" stroke-dashoffset="0" fill="none" shape-rendering="crispEdges"/><path d="M1369.2 762.8L1380.1 890.0" stroke="#808080" stroke-width="1" stroke-dasharray="20 1 11 1" stroke-dashoffset="5" fill="none" shape-rendering="crispEdges"/><path d="M1380.8 767.1L1389.6 876.0" stroke="#808080" stroke-width="1" stroke-dasharray="23 1 13 1" stroke-dashoffset="10" fill="none" shape-rendering="crispEdges"/><path d="M1392.3 771.4L1399.1 861.9" stroke="#808080" stroke-width="1" stroke-dasharray="26 1 15 1" stroke-dashoffset="15" fill="none" shape-rendering="crispEdges"/><path d="M1403.9 775.7L1408.6 847.9" stroke="#808080" stroke-width="1" stroke-dasharray="29 1 17 1" stroke-dashoffset="20" fill="none" shape-rendering="crispEdges"/><path d="M1545.6 827.6L1556.4 974.0" stroke="#808080" stroke-width="1" stroke-dasharray="17 1 9 1" stroke-dashoffset="0" fill="none" shape-rendering="crispEdges"/><path d="M1557.4 832.5L1566.8 960.0" stroke="#808080" stroke-width="1" stroke-dasharray="20 1 11 1" stroke-dashoffset="5" fill="none" shape-rendering="crispEdges"/><path d="M1569.3 837.3L1577.2 946.0" stroke="#808080" stroke-width="1" stroke-dasharray="23 1 13 1" stroke-dashoffset="10" fill="none" shape-rendering="crispEdges"/><path d="M1581.2 842.1L1587.6 932.0" stroke="#808080" stroke-width="1" stroke-dasharray="26 1 15 1" stroke-dashoffset="15" fill="none" shape-rendering="crispEdges"/><path d="M1593.0 847.0L1598.0 918.0" stroke="#808080" stroke-width="1" stroke-dasharray="29 1 17 1" stroke-dashoffset="20" fill="none" shape-rendering="crispEdges"/></svg>
</body></html>
